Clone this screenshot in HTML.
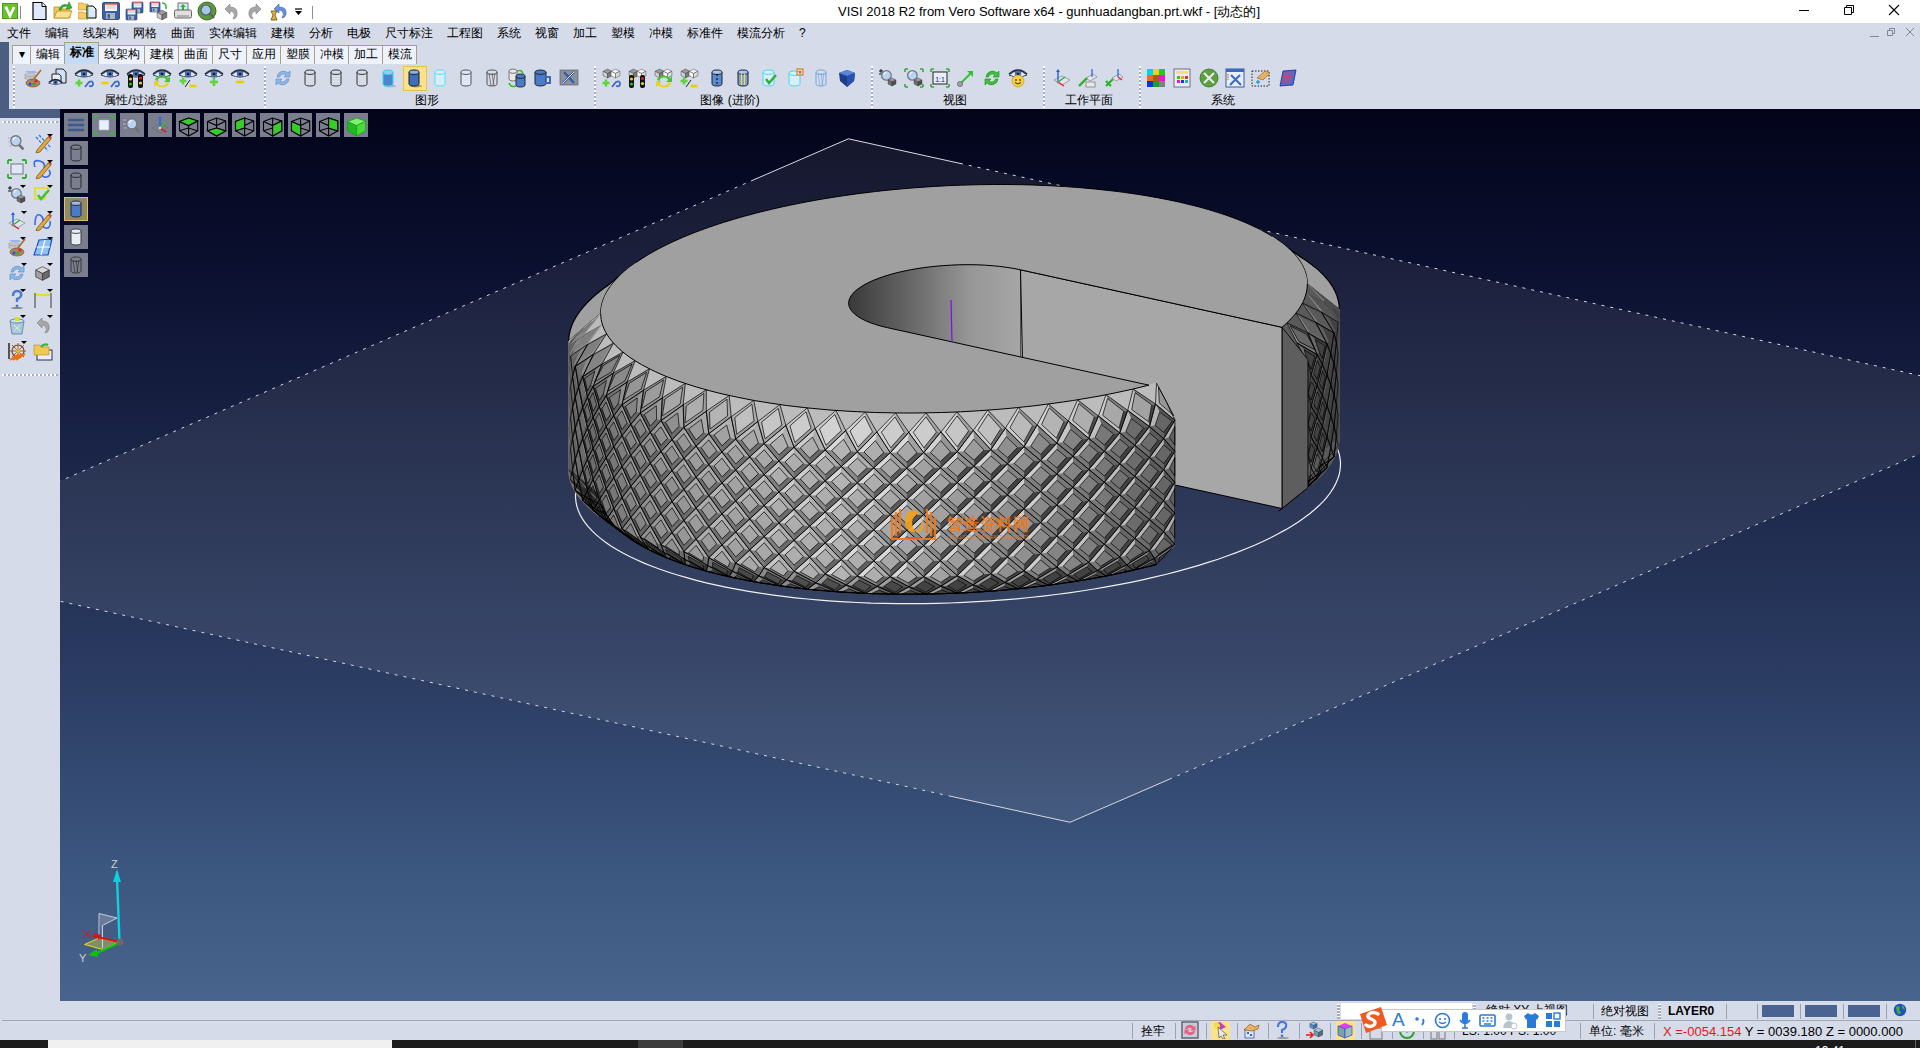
<!DOCTYPE html>
<html><head><meta charset="utf-8">
<style>
*{margin:0;padding:0;box-sizing:border-box}
html,body{width:1920px;height:1048px;overflow:hidden;background:#d6dbe9;font-family:"Liberation Sans",sans-serif;font-size:12px;color:#000}
.a{position:absolute}
#title{left:0;top:0;width:1920px;height:23px;background:#fff}
#menu{left:0;top:23px;width:1920px;height:19px;background:#d6dbe9}
#menu span{position:absolute;top:3px;font-size:12px;line-height:14px;white-space:nowrap}
#lstrip{left:0;top:42px;width:9px;height:76px;background:#4b5e81}
#lstrip2{left:0;top:109px;width:60px;height:9px;background:#4b5e81}
#tb{left:9px;top:42px;width:1911px;height:67px;background:#d6dbe9}
.tab{position:absolute;top:45px;height:19px;background:#eef3fb;border:1px solid #a89f86;border-bottom:none;font-size:12px;line-height:17px;text-align:center;white-space:nowrap}
.tab.act{top:42px;height:22px;background:#c3dbf4;font-weight:bold;line-height:19px}
.grip{position:absolute;width:2px;background-image:linear-gradient(#fff 50%,#a7adbd 50%);background-size:2px 4px}
.gl{position:absolute;top:93px;font-size:12px;line-height:14px;white-space:nowrap}
#left{left:0;top:118px;width:60px;height:883px;background:#d6dbe9}
#vp{left:60px;top:109px;width:1860px;height:892px;background:linear-gradient(#03041a 0%,#0b1030 18%,#1a2446 38%,#2a3a60 62%,#3b567f 85%,#48648d 100%);overflow:hidden}
#status{left:0;top:1001px;width:1920px;height:39px;background:#d6dbe9}
#taskbar{left:0;top:1040px;width:1920px;height:8px;background:#1c1c1c}
.vb{position:absolute;width:24px;height:24px;background:#7b7e8f}
.ic{position:absolute}
</style></head><body>
<div id="title" class="a"></div>
<svg class="ic" style="left:2px;top:3px" width="16" height="16" viewBox="0 0 16 16"><rect width="16" height="16" fill="#6cc030"/><rect x="0.5" y="0.5" width="15" height="15" fill="none" stroke="#4a9a20"/><path d="M4 4 L8 13 L12 4" fill="none" stroke="#fff" stroke-width="2.6"/><circle cx="4" cy="5" r="1.4" fill="#fff"/></svg>
<div class="a" style="left:20px;top:6px;width:1px;height:13px;background:#909090"></div>
<svg class="ic" style="left:30.0px;top:1.0px" width="20" height="20" viewBox="0 0 20 20"><path d="M3 1.5 h9 l4 4 v13 h-13z" fill="#dfe8fa" stroke="#000" stroke-width="1.2"/><path d="M12 1.5 v4 h4" fill="#fff" stroke="#000" stroke-width="1"/></svg>
<svg class="ic" style="left:53.0px;top:1.0px" width="20" height="20" viewBox="0 0 20 20"><path d="M1 6 h6 l2 2 h8 v9 h-16z" fill="#f2c75a" stroke="#b88a20" stroke-width="0.8"/><path d="M1 17 l3 -7 h15 l-3 7z" fill="#fbe08e" stroke="#b88a20" stroke-width="0.8"/><path d="M6 9 Q8 2 15 4 L16 1 L19 7 L13 8 L14.5 5.5 Q10 4 8 9z" fill="#36b836" stroke="#1a7a1a" stroke-width="0.6"/></svg>
<svg class="ic" style="left:78.0px;top:1.0px" width="20" height="20" viewBox="0 0 20 20"><path d="M0 2 h5 l1 1 h4 v6 h-10z" fill="#f4cd66" stroke="#b88a20" stroke-width="0.6"/><path d="M0 11 h5 l1 1 h4 v6 h-10z" fill="#f4cd66" stroke="#b88a20" stroke-width="0.6"/><path d="M9 5 h6 l3 3 v9 h-9z" fill="#dfe8fa" stroke="#000" stroke-width="1"/><path d="M8 4 h2 v14 h-2" fill="none" stroke="#40c040" stroke-width="0.8"/></svg>
<svg class="ic" style="left:101.0px;top:1.0px" width="20" height="20" viewBox="0 0 20 20"><g transform="translate(0 0) scale(1.0)"><rect x="1.5" y="1.5" width="17" height="17" rx="1.5" fill="#3b5ea8" stroke="#23386a" stroke-width="0.8"/><rect x="4" y="2" width="12" height="8" fill="#f4f4f4"/><rect x="4" y="2" width="12" height="1.6" fill="#e04040"/><path d="M5 5h10M5 7h10" stroke="#c0c0c0" stroke-width="0.8"/><rect x="5" y="12" width="9" height="6" fill="#aeb4c0"/><rect x="6.5" y="13" width="2.5" height="4.5" fill="#3b5ea8"/></g></svg>
<svg class="ic" style="left:125.0px;top:1.0px" width="20" height="20" viewBox="0 0 20 20"><g transform="translate(6 0) scale(0.65)"><rect x="1.5" y="1.5" width="17" height="17" rx="1.5" fill="#3b5ea8" stroke="#23386a" stroke-width="0.8"/><rect x="4" y="2" width="12" height="8" fill="#f4f4f4"/><rect x="4" y="2" width="12" height="1.6" fill="#e04040"/><path d="M5 5h10M5 7h10" stroke="#c0c0c0" stroke-width="0.8"/><rect x="5" y="12" width="9" height="6" fill="#aeb4c0"/><rect x="6.5" y="13" width="2.5" height="4.5" fill="#3b5ea8"/></g><g transform="translate(0 7) scale(0.65)"><rect x="1.5" y="1.5" width="17" height="17" rx="1.5" fill="#3b5ea8" stroke="#23386a" stroke-width="0.8"/><rect x="4" y="2" width="12" height="8" fill="#f4f4f4"/><rect x="4" y="2" width="12" height="1.6" fill="#e04040"/><path d="M5 5h10M5 7h10" stroke="#c0c0c0" stroke-width="0.8"/><rect x="5" y="12" width="9" height="6" fill="#aeb4c0"/><rect x="6.5" y="13" width="2.5" height="4.5" fill="#3b5ea8"/></g></svg>
<svg class="ic" style="left:149.0px;top:1.0px" width="20" height="20" viewBox="0 0 20 20"><g transform="translate(0 0) scale(0.6)"><rect x="1.5" y="1.5" width="17" height="17" rx="1.5" fill="#3b5ea8" stroke="#23386a" stroke-width="0.8"/><rect x="4" y="2" width="12" height="8" fill="#f4f4f4"/><rect x="4" y="2" width="12" height="1.6" fill="#e04040"/><path d="M5 5h10M5 7h10" stroke="#c0c0c0" stroke-width="0.8"/><rect x="5" y="12" width="9" height="6" fill="#aeb4c0"/><rect x="6.5" y="13" width="2.5" height="4.5" fill="#3b5ea8"/></g><g transform="translate(7 8) scale(0.6)"><path d="M10 2 L18 6 L10 10 L2 6Z" fill="#9c9c9c" stroke="#333" stroke-width="0.8"/><path d="M2 6 L10 10 V18 L2 14Z" fill="#cfcfcf" stroke="#333" stroke-width="0.8"/><path d="M18 6 L10 10 V18 L18 14Z" fill="#7c7c7c" stroke="#333" stroke-width="0.8"/></g><path d="M13 2 q5 0 4 6" fill="none" stroke="#36b836" stroke-width="1.6"/></svg>
<svg class="ic" style="left:173.0px;top:1.0px" width="20" height="20" viewBox="0 0 20 20"><rect x="5" y="2" width="10" height="8" fill="#dce8f8" stroke="#555" stroke-width="0.8"/><path d="M10 3 l3 3 h-2 v3 h-2 v-3 h-2z" fill="#22c022"/><rect x="1.5" y="9" width="17" height="8" rx="1.5" fill="#e0e0e0" stroke="#555" stroke-width="0.9"/><rect x="4" y="14" width="12" height="2" fill="#b0b0b0"/></svg>
<svg class="ic" style="left:196.5px;top:0.5px" width="21" height="21" viewBox="0 0 21 21"><circle cx="10" cy="10" r="9" fill="#5a9a3a" stroke="#3a6a20" stroke-width="1"/><circle cx="9" cy="9" r="5" fill="#a9c8e8" stroke="#506070" stroke-width="1.2"/><path d="M12.5 12.5 L17 17" stroke="#606060" stroke-width="2.4"/></svg>
<svg class="ic" style="left:221.0px;top:1.0px" width="20" height="20" viewBox="0 0 20 20"><path d="M4 8 L9 3 V6 Q17 6 16 14 Q15 18 12 18 Q15 14 12 11 Q10 10 9 10 V13Z" fill="#a8a8a8" stroke="#7a7a7a" stroke-width="0.6"/></svg>
<svg class="ic" style="left:245.0px;top:1.0px" width="20" height="20" viewBox="0 0 20 20"><path d="M16 8 L11 3 V6 Q3 6 4 14 Q5 18 8 18 Q5 14 8 11 Q10 10 11 10 V13Z" fill="#a8a8a8" stroke="#7a7a7a" stroke-width="0.6"/></svg>
<svg class="ic" style="left:268.0px;top:1.0px" width="20" height="20" viewBox="0 0 20 20"><path d="M6 8 L11 3 V6 Q19 6 18 13 Q17 17 14 17 Q17 13 14 10 Q12 9 11 9 V12Z" fill="#6a90d8" stroke="#3a5aa0" stroke-width="0.6"/><path d="M3 10 h6 l-2 4 l2 5 h-6 l2 -5z" fill="#e0b040" stroke="#6a4a10" stroke-width="0.8"/></svg>
<svg class="ic" style="left:294px;top:8px" width="9" height="8" viewBox="0 0 9 8"><path d="M1 1h7" stroke="#000" stroke-width="1.2"/><path d="M1 3h7l-3.5 4z" fill="#000"/></svg>
<div class="a" style="left:312px;top:6px;width:1px;height:13px;background:#909090"></div>
<div class="a" style="left:1799px;top:10px;width:10px;height:1px;background:#000"></div>
<svg class="ic" style="left:1843px;top:4px" width="12" height="12" viewBox="0 0 12 12"><path d="M1.5 3.5h7v7h-7z M3.5 3.5v-2h7v7h-2" fill="none" stroke="#000" stroke-width="1"/></svg>
<svg class="ic" style="left:1888px;top:4px" width="12" height="12" viewBox="0 0 12 12"><path d="M1 1L11 11M11 1L1 11" stroke="#000" stroke-width="1.1"/></svg>
<div class="a" style="left:838px;top:4px;font-size:13px;line-height:16px;white-space:nowrap;color:#000">VISI 2018 R2 from Vero Software x64 - gunhuadangban.prt.wkf - [动态的]</div>
<div id="menu" class="a"><span style="left:7px">文件</span><span style="left:45px">编辑</span><span style="left:83px">线架构</span><span style="left:133px">网格</span><span style="left:171px">曲面</span><span style="left:209px">实体编辑</span><span style="left:271px">建模</span><span style="left:309px">分析</span><span style="left:347px">电极</span><span style="left:385px">尺寸标注</span><span style="left:447px">工程图</span><span style="left:497px">系统</span><span style="left:535px">视窗</span><span style="left:573px">加工</span><span style="left:611px">塑模</span><span style="left:649px">冲模</span><span style="left:687px">标准件</span><span style="left:737px">模流分析</span><span style="left:799px">?</span></div>
<div class="a" style="left:1870px;top:36px;width:9px;height:1px;background:#8088a0"></div>
<svg class="ic" style="left:1886px;top:27px" width="10" height="10" viewBox="0 0 10 10"><path d="M1.5 3.5h5v5h-5z M3.5 3.5v-2h5v5h-2" fill="none" stroke="#8088a0" stroke-width="1"/></svg>
<svg class="ic" style="left:1905px;top:27px" width="10" height="10" viewBox="0 0 10 10"><path d="M1 1L9 9M9 1L1 9" stroke="#8088a0" stroke-width="1"/></svg>
<div id="lstrip" class="a"></div>
<div id="tb" class="a"></div>
<div class="tab" style="left:12px;width:19px">▾</div>
<div class="tab" style="left:30px;width:35px">编辑</div>
<div class="tab act" style="left:64px;width:35px">标准</div>
<div class="tab" style="left:98px;width:47px">线架构</div>
<div class="tab" style="left:144px;width:35px">建模</div>
<div class="tab" style="left:178px;width:35px">曲面</div>
<div class="tab" style="left:212px;width:35px">尺寸</div>
<div class="tab" style="left:246px;width:35px">应用</div>
<div class="tab" style="left:280px;width:35px">塑膜</div>
<div class="tab" style="left:314px;width:35px">冲模</div>
<div class="tab" style="left:348px;width:35px">加工</div>
<div class="tab" style="left:382px;width:35px">模流</div>
<div class="grip" style="left:13px;top:66px;height:42px"></div>
<div class="grip" style="left:264px;top:66px;height:42px"></div>
<div class="grip" style="left:594px;top:66px;height:42px"></div>
<div class="grip" style="left:871px;top:66px;height:42px"></div>
<div class="grip" style="left:1043px;top:66px;height:42px"></div>
<div class="grip" style="left:1139px;top:66px;height:42px"></div>
<svg class="ic" style="left:23.0px;top:68.0px" width="20" height="20" viewBox="0 0 20 20"><path d="M2 3h10l3 2h-10z" fill="#9fb2f0"/><path d="M2 6h10v2h-10z M2 9h10v2h-10z" fill="#e0e0e0" stroke="#777" stroke-width="0.5"/><ellipse cx="10" cy="15" rx="7" ry="4" fill="#b08060" stroke="#6a4a30" stroke-width="0.6"/><circle cx="7" cy="16" r="1.5" fill="#2050e0"/><circle cx="11" cy="16" r="1.5" fill="#20b020"/><circle cx="13" cy="13" r="1.5" fill="#e02020"/><path d="M18 2 L11 11" stroke="#b06a20" stroke-width="1.6"/></svg>
<svg class="ic" style="left:48.0px;top:68.0px" width="20" height="20" viewBox="0 0 20 20"><path d="M8 1h7l3 3v11h-10z" fill="#cfe0f8" stroke="#222" stroke-width="1"/><path d="M4 6h7l2 2v7h-9z" fill="#e8eefa" stroke="#222" stroke-width="1"/><g transform="translate(0 10) scale(0.75)"><path d="M1 7 Q10 -1 19 7 Q10 11 1 7Z" fill="#e6e9f5" stroke="#3a4a70" stroke-width="1"/><circle cx="10" cy="6" r="3.2" fill="#4d6fa8"/><circle cx="10" cy="6" r="1.3" fill="#10203a"/><path d="M1 6 Q10 -2 19 6" fill="none" stroke="#202838" stroke-width="1.6"/></g></svg>
<svg class="ic" style="left:74.0px;top:68.0px" width="20" height="20" viewBox="0 0 20 20"><g transform="translate(0 0) scale(1.0)"><path d="M1 7 Q10 -1 19 7 Q10 11 1 7Z" fill="#e6e9f5" stroke="#3a4a70" stroke-width="1"/><circle cx="10" cy="6" r="3.2" fill="#4d6fa8"/><circle cx="10" cy="6" r="1.3" fill="#10203a"/><path d="M1 6 Q10 -2 19 6" fill="none" stroke="#202838" stroke-width="1.6"/></g><path d="M1.5 15h7M5 11.5v7" stroke="#5ed63a" stroke-width="2.6"/><path d="M11 19 l4 -5 q4 -2 4 2 q0 3 -4 2" fill="none" stroke="#3a6ad0" stroke-width="1.8"/></svg>
<svg class="ic" style="left:100.0px;top:68.0px" width="20" height="20" viewBox="0 0 20 20"><g transform="translate(0 0) scale(1.0)"><path d="M1 7 Q10 -1 19 7 Q10 11 1 7Z" fill="#e6e9f5" stroke="#3a4a70" stroke-width="1"/><circle cx="10" cy="6" r="3.2" fill="#4d6fa8"/><circle cx="10" cy="6" r="1.3" fill="#10203a"/><path d="M1 6 Q10 -2 19 6" fill="none" stroke="#202838" stroke-width="1.6"/></g><path d="M1.5 15h7" stroke="#e8d000" stroke-width="2.6"/><path d="M11 19 l4 -5 q4 -2 4 2 q0 3 -4 2" fill="none" stroke="#3a6ad0" stroke-width="1.8"/></svg>
<svg class="ic" style="left:126.0px;top:68.0px" width="20" height="20" viewBox="0 0 20 20"><g transform="translate(0 0) scale(1.0)"><path d="M1 7 Q10 -1 19 7 Q10 11 1 7Z" fill="#e6e9f5" stroke="#3a4a70" stroke-width="1"/><circle cx="10" cy="6" r="3.2" fill="#4d6fa8"/><circle cx="10" cy="6" r="1.3" fill="#10203a"/><path d="M1 6 Q10 -2 19 6" fill="none" stroke="#202838" stroke-width="1.6"/></g><rect x="2" y="6" width="5" height="14" rx="2" fill="#101010"/><rect x="12" y="6" width="5" height="14" rx="2" fill="#101010"/><circle cx="4.5" cy="11" r="1.6" fill="#e8d020"/><circle cx="4.5" cy="16" r="1.6" fill="#20c020"/><circle cx="14.5" cy="10" r="1.6" fill="#e02020"/><circle cx="14.5" cy="15" r="1.6" fill="#e8d020"/></svg>
<svg class="ic" style="left:152.0px;top:68.0px" width="20" height="20" viewBox="0 0 20 20"><g transform="translate(0 0) scale(1.0)"><path d="M1 7 Q10 -1 19 7 Q10 11 1 7Z" fill="#e6e9f5" stroke="#3a4a70" stroke-width="1"/><circle cx="10" cy="6" r="3.2" fill="#4d6fa8"/><circle cx="10" cy="6" r="1.3" fill="#10203a"/><path d="M1 6 Q10 -2 19 6" fill="none" stroke="#202838" stroke-width="1.6"/></g><path d="M3 12 A7 5 0 0 1 16 10 l2 -2 v6 h-6 l2 -2 A4 3 0 0 0 6 13z" fill="#4cc23a"/><path d="M17 15 A7 5 0 0 1 4 17 l-2 2 v-6 h6 l-2 2 A4 3 0 0 0 14 14z" fill="#e8d22a"/></svg>
<svg class="ic" style="left:178.0px;top:68.0px" width="20" height="20" viewBox="0 0 20 20"><g transform="translate(0 0) scale(1.0)"><path d="M1 7 Q10 -1 19 7 Q10 11 1 7Z" fill="#e6e9f5" stroke="#3a4a70" stroke-width="1"/><circle cx="10" cy="6" r="3.2" fill="#4d6fa8"/><circle cx="10" cy="6" r="1.3" fill="#10203a"/><path d="M1 6 Q10 -2 19 6" fill="none" stroke="#202838" stroke-width="1.6"/></g><path d="M1.5 13h7M5 9.5v7" stroke="#5ed63a" stroke-width="2.6"/><path d="M7 19 L12 12" stroke="#222" stroke-width="1"/><path d="M11.5 18h7" stroke="#e8d000" stroke-width="2.6"/></svg>
<svg class="ic" style="left:204.0px;top:68.0px" width="20" height="20" viewBox="0 0 20 20"><g transform="translate(0 0) scale(1.0)"><path d="M1 7 Q10 -1 19 7 Q10 11 1 7Z" fill="#e6e9f5" stroke="#3a4a70" stroke-width="1"/><circle cx="10" cy="6" r="3.2" fill="#4d6fa8"/><circle cx="10" cy="6" r="1.3" fill="#10203a"/><path d="M1 6 Q10 -2 19 6" fill="none" stroke="#202838" stroke-width="1.6"/></g><path d="M6.0 14h8M10 10.0v8" stroke="#5ed63a" stroke-width="2.6"/></svg>
<svg class="ic" style="left:230.0px;top:68.0px" width="20" height="20" viewBox="0 0 20 20"><g transform="translate(0 0) scale(1.0)"><path d="M1 7 Q10 -1 19 7 Q10 11 1 7Z" fill="#e6e9f5" stroke="#3a4a70" stroke-width="1"/><circle cx="10" cy="6" r="3.2" fill="#4d6fa8"/><circle cx="10" cy="6" r="1.3" fill="#10203a"/><path d="M1 6 Q10 -2 19 6" fill="none" stroke="#202838" stroke-width="1.6"/></g><path d="M6.0 14h8" stroke="#e8d000" stroke-width="2.6"/></svg>
<svg class="ic" style="left:273.0px;top:68.0px" width="20" height="20" viewBox="0 0 20 20"><path d="M4 9 A6.5 6.5 0 0 1 15 5 L17 3 V9 H11 L13 7 A4 4 0 0 0 6.5 9Z" fill="#8ab8e8" stroke="#5a88c8" stroke-width="0.6"/><path d="M16 11 A6.5 6.5 0 0 1 5 15 L3 17 V11 H9 L7 13 A4 4 0 0 0 13.5 11Z" fill="#8ab8e8" stroke="#5a88c8" stroke-width="0.6"/></svg>
<svg class="ic" style="left:300.0px;top:68.0px" width="20" height="20" viewBox="0 0 20 20"><path d="M5 4.2 v11.6 a5.0 2.2 0 0 0 10 0 v-11.6" fill="none" stroke="#333" stroke-width="1"/><ellipse cx="10.0" cy="4.2" rx="5.0" ry="2.2" fill="none" stroke="#333" stroke-width="1"/></svg>
<svg class="ic" style="left:326.0px;top:68.0px" width="20" height="20" viewBox="0 0 20 20"><path d="M5 4.2 v11.6 a5.0 2.2 0 0 0 10 0 v-11.6" fill="none" stroke="#333" stroke-width="1"/><ellipse cx="10.0" cy="4.2" rx="5.0" ry="2.2" fill="none" stroke="#333" stroke-width="1"/></svg>
<svg class="ic" style="left:352.0px;top:68.0px" width="20" height="20" viewBox="0 0 20 20"><path d="M5 4.2 v11.6 a5.0 2.2 0 0 0 10 0 v-11.6" fill="none" stroke="#333" stroke-width="1"/><ellipse cx="10.0" cy="4.2" rx="5.0" ry="2.2" fill="none" stroke="#333" stroke-width="1"/></svg>
<svg class="ic" style="left:378.0px;top:68.0px" width="20" height="20" viewBox="0 0 20 20"><ellipse cx="12" cy="18" rx="6" ry="1.5" fill="#b0b4c0"/><path d="M5 4.2 v11.6 a5.0 2.2 0 0 0 10 0 v-11.6" fill="#4a86d0" stroke="#30d8f0" stroke-width="1"/><ellipse cx="10.0" cy="4.2" rx="5.0" ry="2.2" fill="#9cc8f0" stroke="#30d8f0" stroke-width="1"/></svg>
<div class="a" style="left:403px;top:66px;width:24px;height:25px;background:#fbe28a;border:1px solid #e8c050"></div>
<svg class="ic" style="left:404.0px;top:68.0px" width="20" height="20" viewBox="0 0 20 20"><ellipse cx="12" cy="18" rx="6" ry="1.5" fill="#b0a060"/><path d="M5 4.2 v11.6 a5.0 2.2 0 0 0 10 0 v-11.6" fill="#3e6fb8" stroke="#10203a" stroke-width="1"/><ellipse cx="10.0" cy="4.2" rx="5.0" ry="2.2" fill="#8fb0e0" stroke="#10203a" stroke-width="1"/></svg>
<svg class="ic" style="left:430.0px;top:68.0px" width="20" height="20" viewBox="0 0 20 20"><path d="M5 4.2 v11.6 a5.0 2.2 0 0 0 10 0 v-11.6" fill="#d8eefa" stroke="#50e0f0" stroke-width="1"/><ellipse cx="10.0" cy="4.2" rx="5.0" ry="2.2" fill="#d8eefa" stroke="#50e0f0" stroke-width="1"/></svg>
<svg class="ic" style="left:456.0px;top:68.0px" width="20" height="20" viewBox="0 0 20 20"><path d="M5 4.2 v11.6 a5.0 2.2 0 0 0 10 0 v-11.6" fill="#dfe6f5" stroke="#555" stroke-width="1"/><ellipse cx="10.0" cy="4.2" rx="5.0" ry="2.2" fill="#dfe6f5" stroke="#555" stroke-width="1"/></svg>
<svg class="ic" style="left:482.0px;top:68.0px" width="20" height="20" viewBox="0 0 20 20"><path d="M5 4.2 v11.6 a5.0 2.2 0 0 0 10 0 v-11.6" fill="none" stroke="#555" stroke-width="1"/><ellipse cx="10.0" cy="4.2" rx="5.0" ry="2.2" fill="none" stroke="#555" stroke-width="1"/><path d="M7 5 L9 18 M10 5 L12 18 M13 5 L11 17" stroke="#555" stroke-width="0.7"/></svg>
<svg class="ic" style="left:507.0px;top:68.0px" width="20" height="20" viewBox="0 0 20 20"><path d="M2 3.2 v7.6 a4.0 2.2 0 0 0 8 0 v-7.6" fill="#e8e8e8" stroke="#777" stroke-width="1"/><ellipse cx="6.0" cy="3.2" rx="4.0" ry="2.2" fill="#e8e8e8" stroke="#777" stroke-width="1"/><path d="M9 8.2 v8.6 a4.5 2.2 0 0 0 9 0 v-8.6" fill="#4a7ac8" stroke="#223" stroke-width="1"/><ellipse cx="13.5" cy="8.2" rx="4.5" ry="2.2" fill="#4a7ac8" stroke="#223" stroke-width="1"/><path d="M10 3 q5 -2 6 3" fill="none" stroke="#30c030" stroke-width="1.6"/><path d="M2 15 q2 5 7 3" fill="none" stroke="#30c030" stroke-width="1.6"/></svg>
<svg class="ic" style="left:533.0px;top:68.0px" width="20" height="20" viewBox="0 0 20 20"><path d="M2 4.2 v11.6 a5.5 2.2 0 0 0 11 0 v-11.6" fill="#4a7ac8" stroke="#223" stroke-width="1"/><ellipse cx="7.5" cy="4.2" rx="5.5" ry="2.2" fill="#4a7ac8" stroke="#223" stroke-width="1"/><path d="M12 9 h5 v6 h-5" fill="none" stroke="#3a6ac0" stroke-width="2"/></svg>
<svg class="ic" style="left:559.0px;top:68.0px" width="20" height="20" viewBox="0 0 20 20"><rect x="1" y="2" width="18" height="15" fill="#8a92a0" stroke="#555" stroke-width="0.6"/><path d="M4 15 L15 4 M5 4 L15 15" stroke="#3a5aa0" stroke-width="2.4"/><path d="M4 15 L15 4" stroke="#e0e6f0" stroke-width="1"/></svg>
<svg class="ic" style="left:602.0px;top:68.0px" width="20" height="20" viewBox="0 0 20 20"><g transform="translate(0 0) scale(0.55)"><path d="M10 2 L18 6 L10 10 L2 6Z" fill="#9c9c9c" stroke="#333" stroke-width="0.8"/><path d="M2 6 L10 10 V18 L2 14Z" fill="#cfcfcf" stroke="#333" stroke-width="0.8"/><path d="M18 6 L10 10 V18 L18 14Z" fill="#7c7c7c" stroke="#333" stroke-width="0.8"/></g><g transform="translate(8 0) scale(0.55)"><path d="M10 2 L18 6 L10 10 L2 6Z" fill="#f4f4f4" stroke="#333" stroke-width="0.8"/><path d="M2 6 L10 10 V18 L2 14Z" fill="#fff" stroke="#333" stroke-width="0.8"/><path d="M18 6 L10 10 V18 L18 14Z" fill="#dcdcdc" stroke="#333" stroke-width="0.8"/></g><path d="M0.5 15h7M4 11.5v7" stroke="#5ed63a" stroke-width="2.6"/><path d="M10 19 l4 -5 q4 -2 4 2 q0 3 -4 2" fill="none" stroke="#3a6ad0" stroke-width="1.8"/></svg>
<svg class="ic" style="left:628.0px;top:68.0px" width="20" height="20" viewBox="0 0 20 20"><g transform="translate(0 0) scale(0.55)"><path d="M10 2 L18 6 L10 10 L2 6Z" fill="#9c9c9c" stroke="#333" stroke-width="0.8"/><path d="M2 6 L10 10 V18 L2 14Z" fill="#cfcfcf" stroke="#333" stroke-width="0.8"/><path d="M18 6 L10 10 V18 L18 14Z" fill="#7c7c7c" stroke="#333" stroke-width="0.8"/></g><g transform="translate(8 0) scale(0.55)"><path d="M10 2 L18 6 L10 10 L2 6Z" fill="#f4f4f4" stroke="#333" stroke-width="0.8"/><path d="M2 6 L10 10 V18 L2 14Z" fill="#fff" stroke="#333" stroke-width="0.8"/><path d="M18 6 L10 10 V18 L18 14Z" fill="#dcdcdc" stroke="#333" stroke-width="0.8"/></g><rect x="1" y="7" width="5" height="13" rx="2" fill="#101010"/><rect x="12" y="7" width="5" height="13" rx="2" fill="#101010"/><circle cx="3.5" cy="11" r="1.6" fill="#e8d020"/><circle cx="3.5" cy="16" r="1.6" fill="#20c020"/><circle cx="14.5" cy="10.5" r="1.6" fill="#e02020"/><circle cx="14.5" cy="15.5" r="1.6" fill="#e8d020"/></svg>
<svg class="ic" style="left:654.0px;top:68.0px" width="20" height="20" viewBox="0 0 20 20"><g transform="translate(0 0) scale(0.55)"><path d="M10 2 L18 6 L10 10 L2 6Z" fill="#9c9c9c" stroke="#333" stroke-width="0.8"/><path d="M2 6 L10 10 V18 L2 14Z" fill="#cfcfcf" stroke="#333" stroke-width="0.8"/><path d="M18 6 L10 10 V18 L18 14Z" fill="#7c7c7c" stroke="#333" stroke-width="0.8"/></g><g transform="translate(8 0) scale(0.55)"><path d="M10 2 L18 6 L10 10 L2 6Z" fill="#f4f4f4" stroke="#333" stroke-width="0.8"/><path d="M2 6 L10 10 V18 L2 14Z" fill="#fff" stroke="#333" stroke-width="0.8"/><path d="M18 6 L10 10 V18 L18 14Z" fill="#dcdcdc" stroke="#333" stroke-width="0.8"/></g><path d="M3 12 A7 5 0 0 1 16 10 l2 -2 v6 h-6 l2 -2 A4 3 0 0 0 6 13z" fill="#4cc23a"/><path d="M17 15 A7 5 0 0 1 4 17 l-2 2 v-6 h6 l-2 2 A4 3 0 0 0 14 14z" fill="#e8d22a"/></svg>
<svg class="ic" style="left:680.0px;top:68.0px" width="20" height="20" viewBox="0 0 20 20"><g transform="translate(0 0) scale(0.55)"><path d="M10 2 L18 6 L10 10 L2 6Z" fill="#9c9c9c" stroke="#333" stroke-width="0.8"/><path d="M2 6 L10 10 V18 L2 14Z" fill="#cfcfcf" stroke="#333" stroke-width="0.8"/><path d="M18 6 L10 10 V18 L18 14Z" fill="#7c7c7c" stroke="#333" stroke-width="0.8"/></g><g transform="translate(8 0) scale(0.55)"><path d="M10 2 L18 6 L10 10 L2 6Z" fill="#f4f4f4" stroke="#333" stroke-width="0.8"/><path d="M2 6 L10 10 V18 L2 14Z" fill="#fff" stroke="#333" stroke-width="0.8"/><path d="M18 6 L10 10 V18 L18 14Z" fill="#dcdcdc" stroke="#333" stroke-width="0.8"/></g><path d="M0.5 13h7M4 9.5v7" stroke="#5ed63a" stroke-width="2.6"/><path d="M6 19 L11 12" stroke="#222" stroke-width="1"/><path d="M10.5 18h7" stroke="#e8d000" stroke-width="2.6"/></svg>
<svg class="ic" style="left:707.0px;top:68.0px" width="20" height="20" viewBox="0 0 20 20"><path d="M5 4.2 v11.6 a5.0 2.2 0 0 0 10 0 v-11.6" fill="#5a8ad0" stroke="#223" stroke-width="1"/><ellipse cx="10.0" cy="4.2" rx="5.0" ry="2.2" fill="#a9c8f0" stroke="#223" stroke-width="1"/><path d="M10 6 v11" stroke="#111" stroke-width="1.2" stroke-dasharray="2 2"/></svg>
<svg class="ic" style="left:733.0px;top:68.0px" width="20" height="20" viewBox="0 0 20 20"><path d="M5 4.2 v11.6 a5.0 2.2 0 0 0 10 0 v-11.6" fill="#7a9ad8" stroke="#223" stroke-width="1"/><ellipse cx="10.0" cy="4.2" rx="5.0" ry="2.2" fill="#a9c8f0" stroke="#223" stroke-width="1"/><path d="M8.5 6 v11 M11.5 6 v11" stroke="#f0e040" stroke-width="1.3"/></svg>
<svg class="ic" style="left:759.0px;top:68.0px" width="20" height="20" viewBox="0 0 20 20"><path d="M4 4.2 v11.6 a5.5 2.2 0 0 0 11 0 v-11.6" fill="#d8eefa" stroke="#40d8f0" stroke-width="1"/><ellipse cx="9.5" cy="4.2" rx="5.5" ry="2.2" fill="#d8eefa" stroke="#40d8f0" stroke-width="1"/><path d="M7 11 l3 4 l7 -8" fill="none" stroke="#30b030" stroke-width="2.4"/></svg>
<svg class="ic" style="left:785.0px;top:68.0px" width="20" height="20" viewBox="0 0 20 20"><path d="M4 5.2 v10.6 a5.5 2.2 0 0 0 11 0 v-10.6" fill="#d8eefa" stroke="#40d8f0" stroke-width="1"/><ellipse cx="9.5" cy="5.2" rx="5.5" ry="2.2" fill="#d8eefa" stroke="#40d8f0" stroke-width="1"/><rect x="12" y="1" width="6" height="6" fill="none" stroke="#e09030" stroke-width="1.4"/><circle cx="15" cy="4" r="1.2" fill="#e05030"/></svg>
<svg class="ic" style="left:811.0px;top:68.0px" width="20" height="20" viewBox="0 0 20 20"><path d="M5 4.2 v11.6 a5.0 2.2 0 0 0 10 0 v-11.6" fill="none" stroke="#70a8e0" stroke-width="1"/><ellipse cx="10.0" cy="4.2" rx="5.0" ry="2.2" fill="none" stroke="#70a8e0" stroke-width="1"/><path d="M7 5 L9 18 M10 5 L12 18 M13 5 L11 17" stroke="#70a8e0" stroke-width="0.7"/></svg>
<svg class="ic" style="left:837.0px;top:68.0px" width="20" height="20" viewBox="0 0 20 20"><path d="M10 2 L18 5 L17 13 L10 19 L3 13 L2 5Z" fill="#1e3c8a"/><path d="M2 5 L10 8 L18 5 L10 2Z" fill="#5a86d8"/><path d="M10 8 V19 L17 13 L18 5Z" fill="#2a50b0"/></svg>
<svg class="ic" style="left:878.0px;top:68.0px" width="20" height="20" viewBox="0 0 20 20"><path d="M1 3h4M3 1v4M1 6h4" stroke="#000" stroke-width="0.9"/><g transform="translate(2 1) scale(0.8)"><path d="M11 12 L17 18" stroke="#707070" stroke-width="3"/><circle cx="8" cy="8" r="6" fill="#b9d3f0" stroke="#707880" stroke-width="1.6"/><path d="M5 7 a3 3 0 0 1 3 -3" stroke="#fff" stroke-width="1.2" fill="none"/></g><g transform="translate(9 9) scale(0.5)"><path d="M10 2 L18 6 L10 10 L2 6Z" fill="#9a9a9a" stroke="#333" stroke-width="0.8"/><path d="M2 6 L10 10 V18 L2 14Z" fill="#707070" stroke="#333" stroke-width="0.8"/><path d="M18 6 L10 10 V18 L18 14Z" fill="#505050" stroke="#333" stroke-width="0.8"/></g></svg>
<svg class="ic" style="left:904.0px;top:68.0px" width="20" height="20" viewBox="0 0 20 20"><g transform="translate(2 1) scale(0.8)"><path d="M11 12 L17 18" stroke="#707070" stroke-width="3"/><circle cx="8" cy="8" r="6" fill="#b9d3f0" stroke="#707880" stroke-width="1.6"/><path d="M5 7 a3 3 0 0 1 3 -3" stroke="#fff" stroke-width="1.2" fill="none"/></g><g transform="translate(9 9) scale(0.5)"><path d="M10 2 L18 6 L10 10 L2 6Z" fill="#9a9a9a" stroke="#333" stroke-width="0.8"/><path d="M2 6 L10 10 V18 L2 14Z" fill="#707070" stroke="#333" stroke-width="0.8"/><path d="M18 6 L10 10 V18 L18 14Z" fill="#505050" stroke="#333" stroke-width="0.8"/></g><path d="M1 1h3M1 1v3M19 1h-3M19 1v3M1 19h3M1 19v-3M19 19h-3M19 19v-3" stroke="#30b030" stroke-width="1.6"/></svg>
<svg class="ic" style="left:930.0px;top:68.0px" width="20" height="20" viewBox="0 0 20 20"><rect x="3" y="4" width="14" height="12" fill="#e8eefa" stroke="#222" stroke-width="1"/><text x="10" y="13.5" font-size="7" text-anchor="middle" font-family="Liberation Sans" fill="#102080">1:1</text><path d="M1 1h3M1 1v3M19 1h-3M19 1v3M1 19h3M1 19v-3M19 19h-3M19 19v-3" stroke="#30b030" stroke-width="1.6"/></svg>
<svg class="ic" style="left:956.0px;top:68.0px" width="20" height="20" viewBox="0 0 20 20"><path d="M4 16 L16 4" stroke="#30c030" stroke-width="1.8"/><path d="M11 3 h6 v6z" fill="#30c030"/><circle cx="4" cy="16" r="2.6" fill="#a0a0a0" stroke="#555" stroke-width="0.6"/></svg>
<svg class="ic" style="left:982.0px;top:68.0px" width="20" height="20" viewBox="0 0 20 20"><path d="M4 9 A6.5 6.5 0 0 1 15 5 L17 3 V9 H11 L13 7 A4 4 0 0 0 6.5 9Z" fill="#3ec23e" stroke="#1a8a1a" stroke-width="0.6"/><path d="M16 11 A6.5 6.5 0 0 1 5 15 L3 17 V11 H9 L7 13 A4 4 0 0 0 13.5 11Z" fill="#3ec23e" stroke="#1a8a1a" stroke-width="0.6"/></svg>
<svg class="ic" style="left:1008.0px;top:68.0px" width="20" height="20" viewBox="0 0 20 20"><g transform="translate(0 0) scale(1.0)"><path d="M1 7 Q10 -1 19 7 Q10 11 1 7Z" fill="#e6e9f5" stroke="#3a4a70" stroke-width="1"/><circle cx="10" cy="6" r="3.2" fill="#4d6fa8"/><circle cx="10" cy="6" r="1.3" fill="#10203a"/><path d="M1 6 Q10 -2 19 6" fill="none" stroke="#202838" stroke-width="1.6"/></g><circle cx="10" cy="13" r="6" fill="#f4d040" stroke="#c09010" stroke-width="0.6"/><circle cx="8" cy="12" r="0.8" fill="#000"/><circle cx="12" cy="12" r="0.8" fill="#000"/><path d="M7 14.5 q3 3 6 0" fill="none" stroke="#000" stroke-width="0.8"/></svg>
<svg class="ic" style="left:1052.0px;top:68.0px" width="20" height="20" viewBox="0 0 20 20"><path d="M2 12 L10 8 L18 12 L10 17Z" fill="#e0e4f0" stroke="#777" stroke-width="0.6"/><path d="M6 14 V2" stroke="#2060e0" stroke-width="1.4"/><path d="M4 4 L6 1 L8 4z" fill="#2060e0"/><path d="M6 14 L13 9" stroke="#30b030" stroke-width="1.4"/><path d="M6 14 L12 18" stroke="#e02020" stroke-width="1.4"/><circle cx="6" cy="14" r="1.4" fill="#888"/></svg>
<svg class="ic" style="left:1078.0px;top:68.0px" width="20" height="20" viewBox="0 0 20 20"><path d="M8 10 L15 6 L19 9 L12 13Z" fill="#e0e4f0" stroke="#777" stroke-width="0.6"/><path d="M14 9 V1" stroke="#2060e0" stroke-width="1.2"/><path d="M1 18 L9 10" stroke="#30b030" stroke-width="2.4"/><rect x="8" y="14" width="9" height="5" fill="#e8e8e8" stroke="#777" stroke-width="0.7"/></svg>
<svg class="ic" style="left:1104.0px;top:68.0px" width="20" height="20" viewBox="0 0 20 20"><path d="M8 10 L15 6 L19 9 L12 13Z" fill="#e0e4f0" stroke="#777" stroke-width="0.6"/><path d="M14 9 V1" stroke="#2060e0" stroke-width="1.2"/><path d="M14 9 L18 12" stroke="#e02020" stroke-width="1.2"/><path d="M2 18 L9 11 M2 13 L7 18" stroke="#30b030" stroke-width="2.2"/></svg>
<svg class="ic" style="left:1146.0px;top:68.0px" width="20" height="20" viewBox="0 0 20 20"><rect x="1" y="1" width="6" height="6" fill="#18c8f0"/><rect x="7" y="1" width="6" height="6" fill="#f0d020"/><rect x="13" y="1" width="6" height="6" fill="#30c030"/><rect x="1" y="7" width="6" height="6" fill="#f07010"/><rect x="7" y="7" width="6" height="6" fill="#a06010"/><rect x="13" y="7" width="6" height="6" fill="#f010e0"/><rect x="1" y="13" width="6" height="6" fill="#1030e0"/><rect x="7" y="13" width="6" height="6" fill="#20a020"/><rect x="13" y="13" width="6" height="6" fill="#808080"/></svg>
<svg class="ic" style="left:1172.0px;top:68.0px" width="20" height="20" viewBox="0 0 20 20"><rect x="2" y="1" width="16" height="18" fill="#e8eef8" stroke="#555" stroke-width="0.8"/><rect x="4" y="3" width="12" height="3" fill="#f0e080"/><rect x="5" y="8" width="3" height="3" fill="#30c030"/><rect x="9" y="8" width="3" height="3" fill="#f0a020"/><rect x="13" y="8" width="3" height="3" fill="#e03030"/><rect x="5" y="12" width="3" height="3" fill="#f010e0"/><rect x="9" y="12" width="3" height="3" fill="#2030e0"/><rect x="13" y="12" width="3" height="3" fill="#20b0e0"/></svg>
<svg class="ic" style="left:1199.0px;top:68.0px" width="20" height="20" viewBox="0 0 20 20"><circle cx="10" cy="10" r="9" fill="#5aa040" stroke="#3a7020" stroke-width="0.8"/><path d="M5 15 L15 5 M5 5 L15 15" stroke="#e8e8e8" stroke-width="2.2"/></svg>
<svg class="ic" style="left:1225.0px;top:68.0px" width="20" height="20" viewBox="0 0 20 20"><rect x="1" y="1" width="18" height="18" fill="#e8eef8" stroke="#3a5aa0" stroke-width="1"/><rect x="1" y="1" width="18" height="3" fill="#3a6ac0"/><path d="M5 17 L15 7 M6 7 L16 17" stroke="#3a6ac0" stroke-width="2"/><path d="M3 6v6" stroke="#c09030" stroke-width="1.5" stroke-dasharray="1.5 1"/></svg>
<svg class="ic" style="left:1251.0px;top:68.0px" width="20" height="20" viewBox="0 0 20 20"><rect x="1" y="3" width="17" height="15" fill="none" stroke="#223" stroke-width="1" stroke-dasharray="1.5 1.5"/><path d="M6 10 L14 3 L19 5 L12 12Z" fill="#e8b060" stroke="#8a5a20" stroke-width="0.6"/><path d="M5 14h4M7 12v4" stroke="#20a0e0" stroke-width="1.4"/></svg>
<svg class="ic" style="left:1277.0px;top:68.0px" width="20" height="20" viewBox="0 0 20 20"><path d="M3 18 L6 3 L19 2 L16 17Z" fill="#4a6ad8" stroke="#1a2a80" stroke-width="0.8"/><path d="M6 6 L16 5 M5.5 9 L15.5 8 M5 12 L15 11 M8 4 L6 16 M11 4 L9 16 M14 4 L12 16" stroke="#e04060" stroke-width="1"/></svg>
<div class="gl" style="left:136px;transform:translateX(-50%)">属性/过滤器</div>
<div class="gl" style="left:427px;transform:translateX(-50%)">图形</div>
<div class="gl" style="left:730px;transform:translateX(-50%)">图像 (进阶)</div>
<div class="gl" style="left:955px;transform:translateX(-50%)">视图</div>
<div class="gl" style="left:1089px;transform:translateX(-50%)">工作平面</div>
<div class="gl" style="left:1223px;transform:translateX(-50%)">系统</div>
<div id="lstrip2" class="a"></div>
<div id="left" class="a"></div>
<div class="grip" style="left:2px;top:121px;width:56px;height:2px;background-image:linear-gradient(90deg,#fff 50%,#a7adbd 50%);background-size:4px 2px"></div>
<svg class="ic" style="left:7.0px;top:133.0px" width="20" height="20" viewBox="0 0 20 20"><g transform="translate(2 1) scale(0.85)"><path d="M11 12 L17 18" stroke="#707070" stroke-width="3"/><circle cx="8" cy="8" r="6" fill="#b9d3f0" stroke="#707880" stroke-width="1.6"/><path d="M5 7 a3 3 0 0 1 3 -3" stroke="#fff" stroke-width="1.2" fill="none"/></g><path d="M1 5 h3 M1 9 h3 M2 13 h3" stroke="#b0b8c8" stroke-width="1.2"/></svg>
<svg class="ic" style="left:33.0px;top:133.0px" width="20" height="20" viewBox="0 0 20 20"><path d="M3 4 L15 18 M6 2 L18 15" stroke="#3a7ae0" stroke-width="1.3" stroke-dasharray="3 1.5"/><path d="M4 17 L15 4 L18 6 L7 19 L3 20Z" fill="#e0a840" stroke="#6a4a10" stroke-width="0.7"/><path d="M15 4 L18 6 L19 4.5 L16 2.5Z" fill="#e04040"/><path d="M14 1 h6 l-3 3z" fill="#000"/></svg>
<svg class="ic" style="left:7.0px;top:159.0px" width="20" height="20" viewBox="0 0 20 20"><rect x="4" y="5" width="12" height="10" fill="#dfe8fa" stroke="#777" stroke-width="1"/><path d="M1 1h4M1 1v4M19 1h-4M19 1v4M1 19h4M1 19v-4M19 19h-4M19 19v-4" stroke="#30b030" stroke-width="1.8"/></svg>
<svg class="ic" style="left:33.0px;top:159.0px" width="20" height="20" viewBox="0 0 20 20"><path d="M2 8 Q-1 0 7 2 Q14 4 10 12 Q7 19 14 18 Q19 16 16 11" fill="none" stroke="#3a6ae0" stroke-width="1.6"/><path d="M4 17 L15 4 L18 6 L7 19 L3 20Z" fill="#e0a840" stroke="#6a4a10" stroke-width="0.7"/><path d="M15 4 L18 6 L19 4.5 L16 2.5Z" fill="#e04040"/><path d="M14 1 h6 l-3 3z" fill="#000"/></svg>
<svg class="ic" style="left:7.0px;top:185.0px" width="20" height="20" viewBox="0 0 20 20"><path d="M1 3h4M3 1v4M1 6h4" stroke="#000" stroke-width="0.9"/><g transform="translate(3 2) scale(0.8)"><path d="M11 12 L17 18" stroke="#707070" stroke-width="3"/><circle cx="8" cy="8" r="6" fill="#b9d3f0" stroke="#707880" stroke-width="1.6"/><path d="M5 7 a3 3 0 0 1 3 -3" stroke="#fff" stroke-width="1.2" fill="none"/></g><g transform="translate(9 9) scale(0.5)"><path d="M10 2 L18 6 L10 10 L2 6Z" fill="#9a9a9a" stroke="#333" stroke-width="0.8"/><path d="M2 6 L10 10 V18 L2 14Z" fill="#707070" stroke="#333" stroke-width="0.8"/><path d="M18 6 L10 10 V18 L18 14Z" fill="#505050" stroke="#333" stroke-width="0.8"/></g><path d="M13 0 h6 l-3 3z" fill="#000"/></svg>
<svg class="ic" style="left:33.0px;top:185.0px" width="20" height="20" viewBox="0 0 20 20"><path d="M2 3 h13 v4 h-3 v7 h-10z" fill="none" stroke="#e8e000" stroke-width="1.6"/><path d="M5 10 l3 4 l8 -9" fill="none" stroke="#40c040" stroke-width="2.6"/><path d="M14 0 h6 l-3 3z" fill="#000"/></svg>
<svg class="ic" style="left:7.0px;top:211.0px" width="20" height="20" viewBox="0 0 20 20"><path d="M2 12 L10 8 L18 12 L10 17Z" fill="#e0e4f0" stroke="#777" stroke-width="0.6"/><path d="M6 14 V2" stroke="#2060e0" stroke-width="1.4"/><path d="M4 4 L6 1 L8 4z" fill="#2060e0"/><path d="M6 14 L13 9" stroke="#30b030" stroke-width="1.4"/><path d="M6 14 L12 18" stroke="#e02020" stroke-width="1.4"/><circle cx="6" cy="14" r="1.4" fill="#888"/><path d="M14 0 h6 l-3 3z" fill="#000"/></svg>
<svg class="ic" style="left:33.0px;top:211.0px" width="20" height="20" viewBox="0 0 20 20"><path d="M2 14 Q2 2 7 4 Q11 6 10 12 Q9 18 15 17 Q18 15 17 10" fill="none" stroke="#3a6ae0" stroke-width="1.6"/><path d="M4 17 L15 4 L18 6 L7 19 L3 20Z" fill="#e0a840" stroke="#6a4a10" stroke-width="0.7"/><path d="M15 4 L18 6 L19 4.5 L16 2.5Z" fill="#e04040"/><path d="M14 0 h6 l-3 3z" fill="#000"/></svg>
<svg class="ic" style="left:7.0px;top:237.0px" width="20" height="20" viewBox="0 0 20 20"><path d="M2 3h10l3 2h-10z" fill="#9fb2f0"/><path d="M2 6h10v2h-10z M2 9h10v2h-10z" fill="#e0e0e0" stroke="#777" stroke-width="0.5"/><ellipse cx="10" cy="15" rx="7" ry="4" fill="#b08060" stroke="#6a4a30" stroke-width="0.6"/><circle cx="7" cy="16" r="1.5" fill="#2050e0"/><circle cx="11" cy="16" r="1.5" fill="#20b020"/><circle cx="13" cy="13" r="1.5" fill="#e02020"/><path d="M18 2 L11 11" stroke="#b06a20" stroke-width="1.6"/><path d="M13 0 h6 l-3 3z" fill="#000"/></svg>
<svg class="ic" style="left:33.0px;top:237.0px" width="20" height="20" viewBox="0 0 20 20"><path d="M6 3 L19 2 L15 18 L1 18Z" fill="#8ec0f0" stroke="#1a50c0" stroke-width="1.2"/><path d="M12 3 L8 18 M3.5 10 L17 10" stroke="#fff" stroke-width="1.2"/><path d="M14 0 h6 l-3 3z" fill="#000"/></svg>
<svg class="ic" style="left:7.0px;top:263.0px" width="20" height="20" viewBox="0 0 20 20"><path d="M4 9 A6.5 6.5 0 0 1 15 5 L17 3 V9 H11 L13 7 A4 4 0 0 0 6.5 9Z" fill="#8ab8e8" stroke="#5a88c8" stroke-width="0.6"/><path d="M16 11 A6.5 6.5 0 0 1 5 15 L3 17 V11 H9 L7 13 A4 4 0 0 0 13.5 11Z" fill="#8ab8e8" stroke="#5a88c8" stroke-width="0.6"/><path d="M14 0 h6 l-3 3z" fill="#000"/></svg>
<svg class="ic" style="left:33.0px;top:263.0px" width="20" height="20" viewBox="0 0 20 20"><g transform="translate(1 2) scale(0.85)"><path d="M10 2 L18 6 L10 10 L2 6Z" fill="#d8d8d8" stroke="#333" stroke-width="0.8"/><path d="M2 6 L10 10 V18 L2 14Z" fill="#a0a0a0" stroke="#333" stroke-width="0.8"/><path d="M18 6 L10 10 V18 L18 14Z" fill="#6a6a6a" stroke="#333" stroke-width="0.8"/></g><path d="M14 0 h6 l-3 3z" fill="#000"/></svg>
<svg class="ic" style="left:7.0px;top:289.0px" width="20" height="20" viewBox="0 0 20 20"><path d="M6 7 Q6 2 10 2 Q15 2 14 7 Q13 9 10 10 V13" fill="none" stroke="#4a7ad0" stroke-width="2.4"/><circle cx="10" cy="17" r="1.5" fill="#4a7ad0"/><ellipse cx="10" cy="19" rx="6" ry="1" fill="#888"/><path d="M13 0 h6 l-3 3z" fill="#000"/></svg>
<svg class="ic" style="left:33.0px;top:289.0px" width="20" height="20" viewBox="0 0 20 20"><path d="M2 4 V19 M18 4 V19" stroke="#555" stroke-width="1.2"/><path d="M3 6 H17" stroke="#e8e000" stroke-width="1.6"/><path d="M3 6 l3 -2 v4z M17 6 l-3 -2 v4z" fill="#e8e000"/><path d="M14 0 h6 l-3 3z" fill="#000"/></svg>
<svg class="ic" style="left:7.0px;top:315.0px" width="20" height="20" viewBox="0 0 20 20"><path d="M3 6 h14 l-2 13 h-10z" fill="#a8c8e8" stroke="#5a7a9a" stroke-width="0.8"/><ellipse cx="10" cy="6" rx="7" ry="2" fill="#c8e0f8" stroke="#5a7a9a" stroke-width="0.8"/><rect x="8" y="2" width="4" height="4" fill="#e8e000"/><path d="M7 10 l6 6 M13 10 l-6 6" stroke="#e8f0a0" stroke-width="1"/><path d="M13 0 h6 l-3 3z" fill="#000"/></svg>
<svg class="ic" style="left:33.0px;top:315.0px" width="20" height="20" viewBox="0 0 20 20"><path d="M4 8 L9 3 V6 Q17 6 16 14 Q15 18 12 18 Q15 14 12 11 Q10 10 9 10 V13Z" fill="#a8a8a8" stroke="#7a7a7a" stroke-width="0.6"/><path d="M14 0 h6 l-3 3z" fill="#000"/></svg>
<svg class="ic" style="left:7.0px;top:341.0px" width="20" height="20" viewBox="0 0 20 20"><path d="M2 2 V18" stroke="#555" stroke-width="2"/><circle cx="11" cy="10" r="6" fill="none" stroke="#8a4a20" stroke-width="1.2"/><path d="M11 2 V18 M3 10 H19 M5 4 L17 16 M17 4 L5 16" stroke="#8a4a20" stroke-width="0.8"/><circle cx="11" cy="10" r="2" fill="#f0b020"/><path d="M3 19 L12 13 M6 19 L15 13 M9 19 L18 13" stroke="#f07010" stroke-width="1.6"/><path d="M14 0 h6 l-3 3z" fill="#000"/></svg>
<svg class="ic" style="left:33.0px;top:341.0px" width="20" height="20" viewBox="0 0 20 20"><rect x="4" y="9" width="15" height="10" fill="#e8eefa" stroke="#333" stroke-width="1"/><path d="M1 4 h6 l2 2 h7 v8 h-15z" fill="#f2c75a" stroke="#b88a20" stroke-width="0.6"/><path d="M8 6 Q11 2 15 4" fill="none" stroke="#36b836" stroke-width="2.2"/></svg>
<div class="grip" style="left:2px;top:374px;width:56px;height:2px;background-image:linear-gradient(90deg,#fff 50%,#a7adbd 50%);background-size:4px 2px"></div>
<div id="vp" class="a"></div>
<svg class="a" style="left:0;top:0" width="1920" height="1048" viewBox="0 0 1920 1048">
<defs><clipPath id="vpc"><rect x="60" y="109" width="1860" height="892"/></clipPath></defs>
<g clip-path="url(#vpc)">
<polygon points="-124,561 848.4,138.75 2039.4,402 1070,822.3" fill="rgba(240,240,228,0.075)"/>
<line x1="-124.0" y1="561.0" x2="751.0" y2="181.0" stroke="#d8d8e0" stroke-width="1" stroke-dasharray="3 6"/>
<line x1="751.0" y1="181.0" x2="848.4" y2="138.8" stroke="#d8d8e0" stroke-width="1" />
<line x1="848.4" y1="138.8" x2="960.0" y2="163.4" stroke="#d8d8e0" stroke-width="1" />
<line x1="960.0" y1="163.4" x2="2039.4" y2="402.0" stroke="#d8d8e0" stroke-width="1" stroke-dasharray="3 6"/>
<line x1="1070.0" y1="822.3" x2="1169.0" y2="779.4" stroke="#d8d8e0" stroke-width="1" />
<line x1="1169.0" y1="779.4" x2="2039.4" y2="402.0" stroke="#d8d8e0" stroke-width="1" stroke-dasharray="3 6"/>
<line x1="-124.0" y1="561.0" x2="951.0" y2="796.3" stroke="#d8d8e0" stroke-width="1" stroke-dasharray="3 6"/>
<line x1="951.0" y1="796.3" x2="1070.0" y2="822.3" stroke="#d8d8e0" stroke-width="1" />
<polygon points="1254.6,545.2 1262.8,541.5 1270.7,537.7 1278.2,533.8 1285.3,529.9 1292.0,525.9 1298.3,521.9 1304.2,517.8 1309.7,513.7 1314.7,509.5 1319.3,505.3 1323.5,501.1 1327.2,496.8 1330.5,492.5 1333.3,488.2 1335.6,483.9 1337.5,479.6 1339.0,475.3 1339.9,470.9 1340.4,466.6 1340.5,462.4 1340.0,458.1 1339.2,453.9 1337.8,449.7 1336.0,445.5 1333.7,441.4 1331.0,437.3 1327.8,433.3 1324.1,429.3 1320.0,425.4 1315.5,421.6 1310.5,417.8 1305.1,414.1 1299.3,410.5 1293.1,407.0 1286.4,403.5 1279.4,400.2 1272.0,396.9 1264.2,393.8 1256.0,390.7 1247.4,387.8 1238.5,385.0 1229.3,382.3 1219.7,379.7 1209.8,377.2 1199.6,374.9 1189.1,372.7 1178.3,370.6 1167.3,368.6 1156.0,366.8 1144.4,365.2 1132.6,363.6 1120.7,362.2 1108.5,361.0 1096.1,359.9 1083.6,358.9 1070.9,358.1 1058.1,357.5 1045.1,356.9 1032.1,356.6 1018.9,356.4 1005.7,356.3 992.4,356.4 979.1,356.6 965.8,357.0 952.4,357.6 939.1,358.3 925.8,359.1 912.5,360.1 899.3,361.2 886.1,362.5 873.0,363.9 860.1,365.5 847.2,367.2 834.5,369.0 822.0,371.0 809.6,373.1 797.3,375.3 785.3,377.7 773.5,380.2 761.9,382.8 750.6,385.5 739.5,388.4 728.7,391.3 718.1,394.4 707.9,397.6 697.9,400.8 688.3,404.2 679.0,407.6 670.0,411.2 661.4,414.8 653.2,418.5 645.3,422.3 637.8,426.2 630.7,430.1 624.0,434.1 617.7,438.1 611.8,442.2 606.3,446.3 601.3,450.5 596.7,454.7 592.5,458.9 588.8,463.2 585.5,467.5 582.7,471.8 580.4,476.1 578.5,480.4 577.0,484.7 576.1,489.1 575.6,493.4 575.5,497.6 576.0,501.9 576.8,506.1 578.2,510.3 580.0,514.5 582.3,518.6 585.0,522.7 588.2,526.7 591.9,530.7 596.0,534.6 600.5,538.4 605.5,542.2 610.9,545.9 616.7,549.5 622.9,553.0 629.6,556.5 636.6,559.8 644.0,563.1 651.8,566.2 660.0,569.3 668.6,572.2 677.5,575.0 686.7,577.7 696.3,580.3 706.2,582.8 716.4,585.1 726.9,587.3 737.7,589.4 748.7,591.4 760.0,593.2 771.6,594.8 783.4,596.4 795.3,597.8 807.5,599.0 819.9,600.1 832.4,601.1 845.1,601.9 857.9,602.5 870.9,603.1 883.9,603.4 897.1,603.6 910.3,603.7 923.6,603.6 936.9,603.4 950.2,603.0 963.6,602.4 976.9,601.7 990.2,600.9 1003.5,599.9 1016.7,598.8 1029.9,597.5 1043.0,596.1 1055.9,594.5 1068.8,592.8 1081.5,591.0 1094.0,589.0 1106.4,586.9 1118.7,584.7 1130.7,582.3 1142.5,579.8 1154.1,577.2 1165.4,574.5 1176.5,571.6 1187.3,568.7 1197.9,565.6 1208.1,562.4 1218.1,559.2 1227.7,555.8 1237.0,552.4 1246.0,548.8 1254.6,545.2" fill="none" stroke="#f0f0f0" stroke-width="1.2"/>
<defs><linearGradient id="hole" x1="852" y1="0" x2="1022" y2="0" gradientUnits="userSpaceOnUse"><stop offset="0" stop-color="#3c3c3c"/><stop offset="0.35" stop-color="#686868"/><stop offset="0.7" stop-color="#979797"/><stop offset="1" stop-color="#a6a6a6"/></linearGradient></defs>
<polygon points="635.9,262.6 634.2,263.9 632.5,265.1 630.9,266.3 629.3,267.6 627.7,268.8 626.2,270.0 624.8,271.3 623.4,272.5 622.0,273.8 620.6,275.0 619.3,276.3 618.1,277.6 616.9,278.8 615.7,280.1 614.6,281.4 613.5,282.6 612.5,283.9 611.5,285.2 610.5,286.5 609.6,287.7 608.7,289.0 607.9,290.3 607.1,291.6 606.4,292.9 605.7,294.1 605.1,295.4 604.5,296.7 603.9,298.0 603.4,299.3 602.9,300.6 602.5,301.9 602.1,303.1 601.8,304.4 601.5,305.7 601.3,307.0 601.1,308.3 600.9,309.5 600.8,310.8 600.7,312.1 600.7,313.4 568.7,341.3 568.7,339.9 568.8,338.5 568.9,337.1 569.1,335.7 569.3,334.3 569.6,332.9 569.9,331.5 570.3,330.1 570.7,328.7 571.2,327.3 571.7,325.9 572.2,324.5 572.8,323.1 573.5,321.7 574.2,320.3 575.0,318.9 575.8,317.5 576.6,316.1 577.5,314.7 578.4,313.3 579.4,311.9 580.5,310.5 581.6,309.2 582.7,307.8 583.9,306.4 585.1,305.0 586.4,303.6 587.7,302.2 589.1,300.9 590.5,299.5 591.9,298.1 593.4,296.8 595.0,295.4 596.6,294.0 598.2,292.7 599.9,291.3 601.6,290.0 603.4,288.6 605.2,287.3 607.1,286.0" fill="#a0a0a0" stroke="#000" stroke-width="1.2"/>
<polygon points="1307.3,284.1 1307.3,282.8 1307.2,281.6 1307.1,280.3 1306.9,279.0 1306.7,277.8 1306.5,276.5 1306.2,275.3 1305.9,274.0 1305.5,272.7 1305.1,271.5 1304.6,270.2 1304.1,269.0 1303.5,267.8 1302.9,266.5 1302.3,265.3 1301.6,264.1 1300.9,262.9 1300.1,261.6 1299.3,260.4 1298.4,259.2 1297.5,258.0 1296.5,256.8 1295.6,255.6 1294.5,254.4 1293.4,253.2 1292.3,252.1 1291.1,250.9 1289.9,249.7 1288.7,248.6 1287.4,247.4 1286.0,246.3 1284.7,245.1 1283.2,244.0 1281.8,242.9 1280.3,241.8 1278.7,240.7 1277.1,239.6 1275.5,238.5 1273.9,237.4 1272.1,236.3 1300.9,257.2 1302.8,258.4 1304.6,259.6 1306.4,260.8 1308.1,262.0 1309.8,263.2 1311.5,264.4 1313.0,265.7 1314.6,266.9 1316.1,268.1 1317.6,269.4 1319.0,270.6 1320.3,271.9 1321.7,273.2 1322.9,274.4 1324.2,275.7 1325.3,277.0 1326.5,278.3 1327.6,279.6 1328.6,280.9 1329.6,282.2 1330.5,283.6 1331.4,284.9 1332.3,286.2 1333.1,287.5 1333.8,288.9 1334.5,290.2 1335.2,291.6 1335.8,292.9 1336.3,294.3 1336.9,295.6 1337.3,297.0 1337.7,298.4 1338.1,299.7 1338.4,301.1 1338.7,302.5 1338.9,303.9 1339.1,305.2 1339.2,306.6 1339.3,308.0 1339.3,309.4" fill="#a0a0a0" stroke="#000" stroke-width="1.2"/>
<polygon points="1278.5,330.1 1279.4,329.4 1280.3,328.6 1281.3,327.9 1282.2,327.1 1283.0,326.4 1283.9,325.6 1284.7,324.9 1285.6,324.1 1286.4,323.4 1287.2,322.6 1288.0,321.9 1288.8,321.1 1289.5,320.3 1290.3,319.6 1291.0,318.8 1291.7,318.1 1292.4,317.3 1293.1,316.5 1293.7,315.8 1294.4,315.0 1295.0,314.2 1295.6,313.5 1296.2,312.7 1296.8,311.9 1297.4,311.2 1298.0,310.4 1298.5,309.6 1299.0,308.8 1299.5,308.1 1300.0,307.3 1300.5,306.5 1301.0,305.8 1301.4,305.0 1301.8,304.2 1302.2,303.4 1302.6,302.7 1303.0,301.9 1303.4,301.1 1303.7,300.3 1304.1,299.6 1304.4,298.8 1304.7,298.0 1305.0,297.2 1305.2,296.5 1305.5,295.7 1305.7,294.9 1305.9,294.1 1306.1,293.4 1306.3,292.6 1306.5,291.8 1306.6,291.1 1306.8,290.3 1306.9,289.5 1307.0,288.7 1307.1,288.0 1307.2,287.2 1307.2,286.4 1307.3,285.7 1307.3,284.9 1307.3,284.1 1339.3,309.4 1339.3,310.2 1339.2,311.1 1339.2,311.9 1339.1,312.8 1339.1,313.6 1339.0,314.4 1338.8,315.3 1338.7,316.1 1338.6,317.0 1338.4,317.8 1338.2,318.6 1338.0,319.5 1337.8,320.3 1337.5,321.2 1337.3,322.0 1337.0,322.9 1336.7,323.7 1336.4,324.6 1336.1,325.4 1335.7,326.2 1335.4,327.1 1335.0,327.9 1334.6,328.8 1334.2,329.6 1333.8,330.5 1333.3,331.3 1332.8,332.1 1332.4,333.0 1331.9,333.8 1331.3,334.7 1330.8,335.5 1330.2,336.4 1329.7,337.2 1329.1,338.0 1328.5,338.9 1327.9,339.7 1327.2,340.6 1326.6,341.4 1325.9,342.2 1325.2,343.1 1324.5,343.9 1323.8,344.7 1323.0,345.6 1322.3,346.4 1321.5,347.2 1320.7,348.1 1319.9,348.9 1319.1,349.7 1318.2,350.5 1317.4,351.4 1316.5,352.2 1315.6,353.0 1314.7,353.8 1313.8,354.7 1312.8,355.5 1311.9,356.3 1310.9,357.1 1309.9,357.9 1308.9,358.8 1307.9,359.6" fill="#5a5a5a" stroke="#5a5a5a" stroke-width="1"/>
<polygon points="1307.9,359.6 1308.9,358.8 1309.9,357.9 1310.9,357.1 1311.9,356.3 1312.8,355.5 1313.8,354.7 1314.7,353.8 1315.6,353.0 1316.5,352.2 1317.4,351.4 1318.2,350.5 1319.1,349.7 1319.9,348.9 1320.7,348.1 1321.5,347.2 1322.3,346.4 1323.0,345.6 1323.8,344.7 1324.5,343.9 1325.2,343.1 1325.9,342.2 1326.6,341.4 1327.2,340.6 1327.9,339.7 1328.5,338.9 1329.1,338.0 1329.7,337.2 1330.2,336.4 1330.8,335.5 1331.3,334.7 1331.9,333.8 1332.4,333.0 1332.8,332.1 1333.3,331.3 1333.8,330.5 1334.2,329.6 1334.6,328.8 1335.0,327.9 1335.4,327.1 1335.7,326.2 1336.1,325.4 1336.4,324.6 1336.7,323.7 1337.0,322.9 1337.3,322.0 1337.5,321.2 1337.8,320.3 1338.0,319.5 1338.2,318.6 1338.4,317.8 1338.6,317.0 1338.7,316.1 1338.8,315.3 1339.0,314.4 1339.1,313.6 1339.1,312.8 1339.2,311.9 1339.2,311.1 1339.3,310.2 1339.3,309.4 1339.3,437.4 1339.3,438.3 1339.2,439.1 1339.2,440.0 1339.1,440.8 1339.1,441.6 1339.0,442.5 1338.8,443.3 1338.7,444.2 1338.6,445.0 1338.4,445.9 1338.2,446.7 1338.0,447.5 1337.8,448.4 1337.5,449.2 1337.3,450.1 1337.0,450.9 1336.7,451.8 1336.4,452.6 1336.1,453.4 1335.7,454.3 1335.4,455.1 1335.0,456.0 1334.6,456.8 1334.2,457.7 1333.8,458.5 1333.3,459.4 1332.8,460.2 1332.4,461.0 1331.9,461.9 1331.3,462.7 1330.8,463.6 1330.2,464.4 1329.7,465.2 1329.1,466.1 1328.5,466.9 1327.9,467.8 1327.2,468.6 1326.6,469.4 1325.9,470.3 1325.2,471.1 1324.5,472.0 1323.8,472.8 1323.0,473.6 1322.3,474.5 1321.5,475.3 1320.7,476.1 1319.9,476.9 1319.1,477.8 1318.2,478.6 1317.4,479.4 1316.5,480.3 1315.6,481.1 1314.7,481.9 1313.8,482.7 1312.8,483.5 1311.9,484.4 1310.9,485.2 1309.9,486.0 1308.9,486.8 1307.9,487.6" fill="#5a5a5a" stroke="#5a5a5a" stroke-width="1"/>
<polygon points="1307.9,487.6 1308.9,486.8 1309.9,486.0 1310.9,485.2 1311.9,484.4 1312.8,483.5 1313.8,482.7 1314.7,481.9 1315.6,481.1 1316.5,480.3 1317.4,479.4 1318.2,478.6 1319.1,477.8 1319.9,476.9 1320.7,476.1 1321.5,475.3 1322.3,474.5 1323.0,473.6 1323.8,472.8 1324.5,472.0 1325.2,471.1 1325.9,470.3 1326.6,469.4 1327.2,468.6 1327.9,467.8 1328.5,466.9 1329.1,466.1 1329.7,465.2 1330.2,464.4 1330.8,463.6 1331.3,462.7 1331.9,461.9 1332.4,461.0 1332.8,460.2 1333.3,459.4 1333.8,458.5 1334.2,457.7 1334.6,456.8 1335.0,456.0 1335.4,455.1 1335.7,454.3 1336.1,453.4 1336.4,452.6 1336.7,451.8 1337.0,450.9 1337.3,450.1 1337.5,449.2 1337.8,448.4 1338.0,447.5 1338.2,446.7 1338.4,445.9 1338.6,445.0 1338.7,444.2 1338.8,443.3 1339.0,442.5 1339.1,441.6 1339.1,440.8 1339.2,440.0 1339.2,439.1 1339.3,438.3 1339.3,437.4 1307.3,465.4 1307.3,466.1 1307.3,466.9 1307.2,467.7 1307.2,468.4 1307.1,469.2 1307.0,470.0 1306.9,470.8 1306.8,471.5 1306.6,472.3 1306.5,473.1 1306.3,473.9 1306.1,474.6 1305.9,475.4 1305.7,476.2 1305.5,476.9 1305.2,477.7 1305.0,478.5 1304.7,479.3 1304.4,480.0 1304.1,480.8 1303.7,481.6 1303.4,482.4 1303.0,483.1 1302.6,483.9 1302.2,484.7 1301.8,485.5 1301.4,486.2 1301.0,487.0 1300.5,487.8 1300.0,488.6 1299.5,489.3 1299.0,490.1 1298.5,490.9 1298.0,491.6 1297.4,492.4 1296.8,493.2 1296.2,493.9 1295.6,494.7 1295.0,495.5 1294.4,496.2 1293.7,497.0 1293.1,497.8 1292.4,498.5 1291.7,499.3 1291.0,500.1 1290.3,500.8 1289.5,501.6 1288.8,502.3 1288.0,503.1 1287.2,503.9 1286.4,504.6 1285.6,505.4 1284.7,506.1 1283.9,506.9 1283.0,507.6 1282.2,508.4 1281.3,509.1 1280.3,509.9 1279.4,510.6 1278.5,511.4" fill="#5a5a5a" stroke="#5a5a5a" stroke-width="1"/>
<path d="M1293.9 345.6L1278.5 330.1L1281.6 333.3L1293.9 345.6Z" fill="#a2a2a2"/>
<path d="M1278.5 330.1L1297.1 343.0L1295.4 344.4L1281.6 333.3ZM1316.9 321.0L1305.8 305.9L1320.8 313.5L1332.3 328.6ZM1338.1 322.1L1321.4 312.0L1321.9 310.6L1336.4 317.8ZM1334.0 332.9L1321.4 312.0L1328.8 318.2L1335.0 330.8ZM1330.8 353.9L1334.0 332.9L1334.0 339.1L1332.2 351.7ZM1334.0 363.9L1336.4 343.0L1336.4 349.2L1335.0 361.8ZM1330.8 384.9L1334.0 363.9L1334.0 370.1L1332.2 382.7ZM1334.0 394.9L1336.4 374.0L1336.4 380.2L1335.0 392.8ZM1330.8 415.9L1334.0 394.9L1334.0 401.1L1332.2 413.7ZM1334.0 425.9L1336.4 405.0L1336.4 411.2L1335.0 423.8ZM1330.8 446.9L1334.0 425.9L1334.0 432.1L1332.2 444.7ZM1334.0 456.9L1336.4 436.0L1336.4 442.2L1335.0 454.8Z" fill="#5a5a5a"/>
<path d="M1297.1 343.0L1307.9 362.5L1306.3 358.0L1295.4 344.4ZM1307.9 332.8L1317.1 354.5L1315.5 350.0L1306.6 334.3ZM1316.0 322.5L1327.0 343.8L1325.3 339.4L1315.1 323.9ZM1321.4 312.0L1334.0 332.9L1332.3 328.6L1320.8 313.5ZM1323.9 301.6L1338.1 322.1L1336.4 317.8L1323.7 303.1ZM1324.1 297.4L1339.3 312.3L1337.5 308.0L1324.1 297.4ZM1297.1 343.0L1317.1 354.5L1314.8 356.6L1304.1 349.8ZM1317.1 354.5L1311.2 375.3L1311.2 369.1L1314.8 356.6ZM1311.2 375.3L1307.9 362.5L1307.9 362.5L1311.2 369.1ZM1307.9 362.5L1304.1 349.8L1314.8 356.6L1311.2 369.1ZM1307.9 332.8L1327.0 343.8L1325.2 345.9L1315.1 339.4ZM1327.0 343.8L1322.4 364.6L1322.4 358.4L1325.2 345.9ZM1322.4 364.6L1317.1 354.5L1319.3 352.3L1322.4 358.4ZM1319.3 352.3L1315.1 339.4L1325.2 345.9L1322.4 358.4ZM1316.0 322.5L1334.0 332.9L1332.8 335.1L1323.3 328.9ZM1334.0 332.9L1330.8 353.9L1330.8 347.7L1332.8 335.1ZM1330.8 353.9L1327.0 343.8L1328.6 341.6L1330.8 347.7ZM1328.6 341.6L1323.3 328.9L1332.8 335.1L1330.8 347.7ZM1321.4 312.0L1338.1 322.1L1337.5 324.2L1328.8 318.2ZM1338.1 322.1L1336.4 343.0L1336.4 336.8L1337.5 324.2ZM1336.4 343.0L1334.0 332.9L1335.0 330.8L1336.4 336.8ZM1335.0 330.8L1328.8 318.2L1337.5 324.2L1336.4 336.8ZM1323.9 301.6L1339.3 312.3L1339.3 313.4L1331.4 307.6ZM1339.3 312.3L1339.0 332.1L1339.0 325.9L1339.3 313.4ZM1339.0 332.1L1338.1 322.1L1338.6 319.9L1339.0 325.9ZM1338.6 319.9L1331.4 307.6L1339.3 313.4L1339.0 325.9ZM1307.9 362.5L1311.2 375.3L1308.6 377.4L1307.9 368.7ZM1311.2 375.3L1307.9 393.5L1307.9 387.3L1308.6 377.4ZM1307.9 393.5L1307.9 378.0L1307.9 378.0L1307.9 387.3ZM1307.9 378.0L1307.9 368.7L1308.6 377.4L1307.9 387.3ZM1317.1 354.5L1322.4 364.6L1320.4 366.8L1317.1 360.7ZM1322.4 364.6L1317.1 385.5L1317.1 379.3L1320.4 366.8ZM1317.1 385.5L1311.2 375.3L1313.7 373.2L1317.1 379.3ZM1313.7 373.2L1317.1 360.7L1320.4 366.8L1317.1 379.3ZM1327.0 343.8L1330.8 353.9L1329.4 356.0L1327.0 350.0ZM1330.8 353.9L1327.0 374.8L1327.0 368.6L1329.4 356.0ZM1327.0 374.8L1322.4 364.6L1324.3 362.5L1327.0 368.6ZM1324.3 362.5L1327.0 350.0L1329.4 356.0L1327.0 368.6ZM1334.0 332.9L1336.4 343.0L1335.5 345.2L1334.0 339.1ZM1336.4 343.0L1334.0 363.9L1334.0 357.7L1335.5 345.2ZM1334.0 363.9L1330.8 353.9L1332.2 351.7L1334.0 357.7ZM1332.2 351.7L1334.0 339.1L1335.5 345.2L1334.0 357.7ZM1338.1 322.1L1339.0 332.1L1338.7 334.3L1338.1 328.3ZM1339.0 332.1L1338.1 353.1L1338.1 346.9L1338.7 334.3ZM1338.1 353.1L1336.4 343.0L1337.2 340.8L1338.1 346.9ZM1337.2 340.8L1338.1 328.3L1338.7 334.3L1338.1 346.9ZM1339.3 312.3L1339.3 327.8L1339.3 327.8L1339.3 318.5ZM1339.3 327.8L1339.3 343.3L1339.3 337.1L1339.3 327.8ZM1339.3 343.3L1339.0 332.1L1339.2 330.0L1339.3 337.1ZM1339.2 330.0L1339.3 318.5L1339.3 327.8L1339.3 337.1ZM1311.2 375.3L1317.1 385.5L1314.8 387.6L1311.2 381.5ZM1317.1 385.5L1311.2 406.3L1311.2 400.1L1314.8 387.6ZM1311.2 406.3L1307.9 393.5L1307.9 393.5L1311.2 400.1ZM1307.9 393.5L1311.2 381.5L1314.8 387.6L1311.2 400.1ZM1322.4 364.6L1327.0 374.8L1325.2 376.9L1322.4 370.8ZM1327.0 374.8L1322.4 395.6L1322.4 389.4L1325.2 376.9ZM1322.4 395.6L1317.1 385.5L1319.3 383.3L1322.4 389.4ZM1319.3 383.3L1322.4 370.8L1325.2 376.9L1322.4 389.4ZM1330.8 353.9L1334.0 363.9L1332.8 366.1L1330.8 360.1ZM1334.0 363.9L1330.8 384.9L1330.8 378.7L1332.8 366.1ZM1330.8 384.9L1327.0 374.8L1328.6 372.6L1330.8 378.7ZM1328.6 372.6L1330.8 360.1L1332.8 366.1L1330.8 378.7ZM1336.4 343.0L1338.1 353.1L1337.5 355.2L1336.4 349.2ZM1338.1 353.1L1336.4 374.0L1336.4 367.8L1337.5 355.2ZM1336.4 374.0L1334.0 363.9L1335.0 361.8L1336.4 367.8ZM1335.0 361.8L1336.4 349.2L1337.5 355.2L1336.4 367.8ZM1339.0 332.1L1339.3 343.3L1339.3 344.4L1339.0 338.3ZM1339.3 343.3L1339.0 363.1L1339.0 356.9L1339.3 344.4ZM1339.0 363.1L1338.1 353.1L1338.6 350.9L1339.0 356.9ZM1338.6 350.9L1339.0 338.3L1339.3 344.4L1339.0 356.9ZM1307.9 393.5L1311.2 406.3L1308.6 408.4L1307.9 399.7ZM1311.2 406.3L1307.9 424.5L1307.9 418.3L1308.6 408.4ZM1307.9 424.5L1307.9 409.0L1307.9 409.0L1307.9 418.3ZM1307.9 409.0L1307.9 399.7L1308.6 408.4L1307.9 418.3ZM1317.1 385.5L1322.4 395.6L1320.4 397.8L1317.1 391.7ZM1322.4 395.6L1317.1 416.5L1317.1 410.3L1320.4 397.8ZM1317.1 416.5L1311.2 406.3L1313.7 404.2L1317.1 410.3ZM1313.7 404.2L1317.1 391.7L1320.4 397.8L1317.1 410.3ZM1327.0 374.8L1330.8 384.9L1329.4 387.0L1327.0 381.0ZM1330.8 384.9L1327.0 405.8L1327.0 399.6L1329.4 387.0ZM1327.0 405.8L1322.4 395.6L1324.3 393.5L1327.0 399.6ZM1324.3 393.5L1327.0 381.0L1329.4 387.0L1327.0 399.6ZM1334.0 363.9L1336.4 374.0L1335.5 376.2L1334.0 370.1ZM1336.4 374.0L1334.0 394.9L1334.0 388.7L1335.5 376.2ZM1334.0 394.9L1330.8 384.9L1332.2 382.7L1334.0 388.7ZM1332.2 382.7L1334.0 370.1L1335.5 376.2L1334.0 388.7ZM1338.1 353.1L1339.0 363.1L1338.7 365.3L1338.1 359.3ZM1339.0 363.1L1338.1 384.1L1338.1 377.9L1338.7 365.3ZM1338.1 384.1L1336.4 374.0L1337.2 371.8L1338.1 377.9ZM1337.2 371.8L1338.1 359.3L1338.7 365.3L1338.1 377.9ZM1339.3 343.3L1339.3 358.8L1339.3 358.8L1339.3 349.5ZM1339.3 358.8L1339.3 374.3L1339.3 368.1L1339.3 358.8ZM1339.3 374.3L1339.0 363.1L1339.2 361.0L1339.3 368.1ZM1339.2 361.0L1339.3 349.5L1339.3 358.8L1339.3 368.1ZM1311.2 406.3L1317.1 416.5L1314.8 418.6L1311.2 412.5ZM1317.1 416.5L1311.2 437.3L1311.2 431.1L1314.8 418.6ZM1311.2 437.3L1307.9 424.5L1307.9 424.5L1311.2 431.1ZM1307.9 424.5L1311.2 412.5L1314.8 418.6L1311.2 431.1ZM1322.4 395.6L1327.0 405.8L1325.2 407.9L1322.4 401.8ZM1327.0 405.8L1322.4 426.6L1322.4 420.4L1325.2 407.9ZM1322.4 426.6L1317.1 416.5L1319.3 414.3L1322.4 420.4ZM1319.3 414.3L1322.4 401.8L1325.2 407.9L1322.4 420.4ZM1330.8 384.9L1334.0 394.9L1332.8 397.1L1330.8 391.1ZM1334.0 394.9L1330.8 415.9L1330.8 409.7L1332.8 397.1ZM1330.8 415.9L1327.0 405.8L1328.6 403.6L1330.8 409.7ZM1328.6 403.6L1330.8 391.1L1332.8 397.1L1330.8 409.7ZM1336.4 374.0L1338.1 384.1L1337.5 386.2L1336.4 380.2ZM1338.1 384.1L1336.4 405.0L1336.4 398.8L1337.5 386.2ZM1336.4 405.0L1334.0 394.9L1335.0 392.8L1336.4 398.8ZM1335.0 392.8L1336.4 380.2L1337.5 386.2L1336.4 398.8ZM1339.0 363.1L1339.3 374.3L1339.3 375.4L1339.0 369.3ZM1339.3 374.3L1339.0 394.1L1339.0 387.9L1339.3 375.4ZM1339.0 394.1L1338.1 384.1L1338.6 381.9L1339.0 387.9ZM1338.6 381.9L1339.0 369.3L1339.3 375.4L1339.0 387.9ZM1307.9 424.5L1311.2 437.3L1308.6 439.4L1307.9 430.7ZM1311.2 437.3L1307.9 455.5L1307.9 449.3L1308.6 439.4ZM1307.9 455.5L1307.9 440.0L1307.9 440.0L1307.9 449.3ZM1307.9 440.0L1307.9 430.7L1308.6 439.4L1307.9 449.3ZM1317.1 416.5L1322.4 426.6L1320.4 428.8L1317.1 422.7ZM1322.4 426.6L1317.1 447.5L1317.1 441.3L1320.4 428.8ZM1317.1 447.5L1311.2 437.3L1313.7 435.2L1317.1 441.3ZM1313.7 435.2L1317.1 422.7L1320.4 428.8L1317.1 441.3ZM1327.0 405.8L1330.8 415.9L1329.4 418.0L1327.0 412.0ZM1330.8 415.9L1327.0 436.8L1327.0 430.6L1329.4 418.0ZM1327.0 436.8L1322.4 426.6L1324.3 424.5L1327.0 430.6ZM1324.3 424.5L1327.0 412.0L1329.4 418.0L1327.0 430.6ZM1334.0 394.9L1336.4 405.0L1335.5 407.2L1334.0 401.1ZM1336.4 405.0L1334.0 425.9L1334.0 419.7L1335.5 407.2ZM1334.0 425.9L1330.8 415.9L1332.2 413.7L1334.0 419.7ZM1332.2 413.7L1334.0 401.1L1335.5 407.2L1334.0 419.7ZM1338.1 384.1L1339.0 394.1L1338.7 396.3L1338.1 390.3ZM1339.0 394.1L1338.1 415.1L1338.1 408.9L1338.7 396.3ZM1338.1 415.1L1336.4 405.0L1337.2 402.8L1338.1 408.9ZM1337.2 402.8L1338.1 390.3L1338.7 396.3L1338.1 408.9ZM1339.3 374.3L1339.3 389.8L1339.3 389.8L1339.3 380.5ZM1339.3 389.8L1339.3 405.3L1339.3 399.1L1339.3 389.8ZM1339.3 405.3L1339.0 394.1L1339.2 392.0L1339.3 399.1ZM1339.2 392.0L1339.3 380.5L1339.3 389.8L1339.3 399.1ZM1311.2 437.3L1317.1 447.5L1314.8 449.6L1311.2 443.5ZM1317.1 447.5L1311.2 468.3L1311.2 462.1L1314.8 449.6ZM1311.2 468.3L1307.9 455.5L1307.9 455.5L1311.2 462.1ZM1307.9 455.5L1311.2 443.5L1314.8 449.6L1311.2 462.1ZM1322.4 426.6L1327.0 436.8L1325.2 438.9L1322.4 432.8ZM1327.0 436.8L1322.4 457.6L1322.4 451.4L1325.2 438.9ZM1322.4 457.6L1317.1 447.5L1319.3 445.3L1322.4 451.4ZM1319.3 445.3L1322.4 432.8L1325.2 438.9L1322.4 451.4ZM1330.8 415.9L1334.0 425.9L1332.8 428.1L1330.8 422.1ZM1334.0 425.9L1330.8 446.9L1330.8 440.7L1332.8 428.1ZM1330.8 446.9L1327.0 436.8L1328.6 434.6L1330.8 440.7ZM1328.6 434.6L1330.8 422.1L1332.8 428.1L1330.8 440.7ZM1336.4 405.0L1338.1 415.1L1337.5 417.2L1336.4 411.2ZM1338.1 415.1L1336.4 436.0L1336.4 429.8L1337.5 417.2ZM1336.4 436.0L1334.0 425.9L1335.0 423.8L1336.4 429.8ZM1335.0 423.8L1336.4 411.2L1337.5 417.2L1336.4 429.8ZM1339.0 394.1L1339.3 405.3L1339.3 406.4L1339.0 400.3ZM1339.3 405.3L1339.0 425.1L1339.0 418.9L1339.3 406.4ZM1339.0 425.1L1338.1 415.1L1338.6 412.9L1339.0 418.9ZM1338.6 412.9L1339.0 400.3L1339.3 406.4L1339.0 418.9ZM1307.9 455.5L1311.2 468.3L1308.6 470.4L1307.9 461.7ZM1311.2 468.3L1307.9 486.5L1307.9 480.3L1308.6 470.4ZM1307.9 486.5L1307.9 471.0L1307.9 471.0L1307.9 480.3ZM1307.9 471.0L1307.9 461.7L1308.6 470.4L1307.9 480.3ZM1317.1 447.5L1322.4 457.6L1320.4 459.8L1317.1 453.7ZM1322.4 457.6L1317.1 478.5L1317.1 472.3L1320.4 459.8ZM1317.1 478.5L1311.2 468.3L1313.7 466.2L1317.1 472.3ZM1313.7 466.2L1317.1 453.7L1320.4 459.8L1317.1 472.3ZM1327.0 436.8L1330.8 446.9L1329.4 449.0L1327.0 443.0ZM1330.8 446.9L1327.0 467.8L1327.0 461.6L1329.4 449.0ZM1327.0 467.8L1322.4 457.6L1324.3 455.5L1327.0 461.6ZM1324.3 455.5L1327.0 443.0L1329.4 449.0L1327.0 461.6ZM1334.0 425.9L1336.4 436.0L1335.5 438.2L1334.0 432.1ZM1336.4 436.0L1334.0 456.9L1334.0 450.7L1335.5 438.2ZM1334.0 456.9L1330.8 446.9L1332.2 444.7L1334.0 450.7ZM1332.2 444.7L1334.0 432.1L1335.5 438.2L1334.0 450.7ZM1338.1 415.1L1339.0 425.1L1338.7 427.3L1338.1 421.3ZM1339.0 425.1L1338.1 446.1L1338.1 439.9L1338.7 427.3ZM1338.1 446.1L1336.4 436.0L1337.2 433.8L1338.1 439.9ZM1337.2 433.8L1338.1 421.3L1338.7 427.3L1338.1 439.9ZM1339.3 405.3L1339.3 420.8L1339.3 420.8L1339.3 411.5ZM1339.3 420.8L1339.3 436.3L1339.3 430.1L1339.3 420.8ZM1339.3 436.3L1339.0 425.1L1339.2 423.0L1339.3 430.1ZM1339.2 423.0L1339.3 411.5L1339.3 420.8L1339.3 430.1ZM1311.2 468.3L1317.1 478.5L1314.8 480.6L1311.2 474.5ZM1317.1 478.5L1295.2 497.9L1302.1 492.3L1314.8 480.6ZM1295.2 497.9L1307.9 486.5L1307.9 486.5L1302.1 492.3ZM1307.9 486.5L1311.2 474.5L1314.8 480.6L1302.1 492.3ZM1322.4 457.6L1327.0 467.8L1325.2 469.9L1322.4 463.8ZM1327.0 467.8L1305.9 487.7L1313.0 481.9L1325.2 469.9ZM1305.9 487.7L1317.1 478.5L1319.3 476.3L1313.0 481.9ZM1319.3 476.3L1322.4 463.8L1325.2 469.9L1313.0 481.9ZM1330.8 446.9L1334.0 456.9L1332.8 459.1L1330.8 453.1ZM1334.0 456.9L1314.0 477.4L1321.3 471.4L1332.8 459.1ZM1314.0 477.4L1327.0 467.8L1328.6 465.6L1321.3 471.4ZM1328.6 465.6L1330.8 453.1L1332.8 459.1L1321.3 471.4ZM1336.4 436.0L1338.1 446.1L1337.5 448.2L1336.4 442.2ZM1338.1 446.1L1319.3 467.0L1326.7 460.8L1337.5 448.2ZM1319.3 467.0L1334.0 456.9L1335.0 454.8L1326.7 460.8ZM1335.0 454.8L1336.4 442.2L1337.5 448.2L1326.7 460.8ZM1339.0 425.1L1339.3 436.3L1339.3 437.4L1339.0 431.3ZM1339.3 436.3L1321.8 456.7L1329.3 450.2L1339.3 437.4ZM1321.8 456.7L1338.1 446.1L1338.6 443.9L1329.3 450.2ZM1338.6 443.9L1339.0 431.3L1339.3 437.4L1329.3 450.2ZM1307.9 486.5L1295.2 497.9L1292.7 499.9L1302.3 492.1ZM1295.2 497.9L1278.5 511.4L1281.7 508.7L1292.7 499.9ZM1278.5 511.4L1292.0 500.4L1292.0 500.4L1281.7 508.7ZM1292.0 500.4L1302.3 492.1L1292.7 499.9L1281.7 508.7ZM1317.1 478.5L1305.9 487.7L1304.0 489.8L1311.4 484.3ZM1305.9 487.7L1287.0 504.1L1290.3 501.3L1304.0 489.8ZM1287.0 504.1L1295.2 497.9L1297.5 495.8L1290.3 501.3ZM1297.5 495.8L1311.4 484.3L1304.0 489.8L1290.3 501.3ZM1305.9 487.7L1327.0 467.8L1321.1 473.7L1307.7 485.7ZM1327.0 467.8L1314.0 477.4L1312.6 479.5L1321.1 473.7ZM1314.0 477.4L1296.0 494.2L1299.5 491.4L1312.6 479.5ZM1296.0 494.2L1305.9 487.7L1307.7 485.7L1299.5 491.4ZM1307.7 485.7L1321.1 473.7L1312.6 479.5L1299.5 491.4ZM1314.0 477.4L1334.0 456.9L1328.0 463.1L1315.2 475.3ZM1334.0 456.9L1319.3 467.0L1318.4 469.1L1328.0 463.1ZM1319.3 467.0L1302.4 484.3L1305.9 481.4L1318.4 469.1ZM1302.4 484.3L1314.0 477.4L1315.2 475.3L1305.9 481.4ZM1315.2 475.3L1328.0 463.1L1318.4 469.1L1305.9 481.4ZM1319.3 467.0L1338.1 446.1L1332.0 452.4L1320.0 465.0ZM1338.1 446.1L1321.8 456.7L1321.5 458.7L1332.0 452.4ZM1321.8 456.7L1306.2 474.3L1309.7 471.3L1321.5 458.7ZM1306.2 474.3L1319.3 467.0L1320.0 465.0L1309.7 471.3ZM1320.0 465.0L1332.0 452.4L1321.5 458.7L1309.7 471.3ZM1321.8 456.7L1339.3 436.3L1333.2 442.7L1322.0 454.6ZM1339.3 436.3L1322.0 452.5L1322.0 452.5L1333.2 442.7ZM1322.0 452.5L1307.3 465.4L1310.8 462.3L1322.0 452.5ZM1307.3 465.4L1321.8 456.7L1322.0 454.6L1310.8 462.3ZM1322.0 454.6L1333.2 442.7L1322.0 452.5L1310.8 462.3ZM1295.2 497.9L1287.0 504.1L1284.9 506.0L1288.3 503.4ZM1287.0 504.1L1281.5 508.9L1281.5 508.9L1284.9 506.0ZM1281.5 508.9L1278.5 511.4L1278.5 511.4L1281.5 508.9ZM1278.5 511.4L1288.3 503.4L1284.9 506.0L1281.5 508.9ZM1287.0 504.1L1305.9 487.7L1298.8 493.5L1289.0 502.1ZM1305.9 487.7L1296.0 494.2L1294.4 496.2L1298.8 493.5ZM1296.0 494.2L1291.8 499.2L1291.8 499.2L1294.4 496.2ZM1291.8 499.2L1287.0 504.1L1289.0 502.1L1291.8 499.2ZM1289.0 502.1L1298.8 493.5L1294.4 496.2L1291.8 499.2ZM1296.0 494.2L1314.0 477.4L1306.7 483.4L1297.5 492.2ZM1314.0 477.4L1302.4 484.3L1301.4 486.3L1306.7 483.4ZM1302.4 484.3L1299.6 489.3L1299.6 489.3L1301.4 486.3ZM1299.6 489.3L1296.0 494.2L1297.5 492.2L1299.6 489.3ZM1297.5 492.2L1306.7 483.4L1301.4 486.3L1299.6 489.3ZM1302.4 484.3L1319.3 467.0L1311.9 473.2L1303.4 482.3ZM1319.3 467.0L1306.2 474.3L1305.7 476.3L1311.9 473.2ZM1306.2 474.3L1304.7 479.3L1304.7 479.3L1305.7 476.3ZM1304.7 479.3L1302.4 484.3L1303.4 482.3L1304.7 479.3ZM1303.4 482.3L1311.9 473.2L1305.7 476.3L1304.7 479.3ZM1306.2 474.3L1321.8 456.7L1314.4 463.1L1306.6 472.3ZM1321.8 456.7L1307.3 465.4L1307.3 466.4L1314.4 463.1ZM1307.3 465.4L1307.1 469.4L1307.1 469.4L1307.3 466.4ZM1307.1 469.4L1306.2 474.3L1306.6 472.3L1307.1 469.4ZM1306.6 472.3L1314.4 463.1L1307.3 466.4L1307.1 469.4ZM1278.5 511.4L1281.5 508.9L1279.2 510.8L1278.5 511.4ZM1281.5 508.9L1278.5 511.4L1278.5 511.4L1279.2 510.8ZM1278.5 511.4L1278.5 511.4L1278.5 511.4L1278.5 511.4ZM1278.5 511.4L1278.5 511.4L1279.2 510.8L1278.5 511.4ZM1287.0 504.1L1291.8 499.2L1290.0 501.1L1287.0 504.1ZM1291.8 499.2L1287.0 504.1L1287.0 504.1L1290.0 501.1ZM1287.0 504.1L1281.5 508.9L1283.8 507.0L1287.0 504.1ZM1283.8 507.0L1287.0 504.1L1290.0 501.1L1287.0 504.1ZM1291.8 499.2L1296.0 494.2L1296.0 494.2L1293.6 497.2ZM1296.0 494.2L1299.6 489.3L1298.2 491.3L1296.0 494.2ZM1299.6 489.3L1296.0 494.2L1296.0 494.2L1298.2 491.3ZM1296.0 494.2L1291.8 499.2L1293.6 497.2L1296.0 494.2ZM1293.6 497.2L1296.0 494.2L1298.2 491.3L1296.0 494.2ZM1299.6 489.3L1302.4 484.3L1302.4 484.3L1300.8 487.3ZM1302.4 484.3L1304.7 479.3L1303.9 481.3L1302.4 484.3ZM1304.7 479.3L1302.4 484.3L1302.4 484.3L1303.9 481.3ZM1302.4 484.3L1299.6 489.3L1300.8 487.3L1302.4 484.3ZM1300.8 487.3L1302.4 484.3L1303.9 481.3L1302.4 484.3ZM1304.7 479.3L1306.2 474.3L1306.2 474.3L1305.4 477.3ZM1306.2 474.3L1307.1 469.4L1306.8 471.3L1306.2 474.3ZM1307.1 469.4L1306.2 474.3L1306.2 474.3L1306.8 471.3ZM1306.2 474.3L1304.7 479.3L1305.4 477.3L1306.2 474.3ZM1305.4 477.3L1306.2 474.3L1306.8 471.3L1306.2 474.3ZM1307.1 469.4L1307.3 465.4L1307.3 465.4L1307.2 467.4ZM1307.3 465.4L1307.3 465.4L1307.3 465.4L1307.3 465.4ZM1307.3 465.4L1307.3 465.4L1307.3 465.4L1307.3 465.4ZM1307.3 465.4L1307.1 469.4L1307.2 467.4L1307.3 465.4ZM1307.2 467.4L1307.3 465.4L1307.3 465.4L1307.3 465.4Z" fill="#424242"/>
<path d="M1307.9 362.5L1293.9 345.6L1293.9 345.6L1306.3 358.0Z" fill="#7e7e7e"/>
<path d="M1293.9 345.6L1281.6 333.3L1295.4 344.4L1306.3 358.0ZM1327.0 343.8L1307.9 332.8L1309.2 331.4L1325.3 339.4ZM1317.1 354.5L1307.9 332.8L1315.1 339.4L1319.3 352.3ZM1317.1 385.5L1322.4 364.6L1322.4 370.8L1319.3 383.3ZM1317.1 416.5L1322.4 395.6L1322.4 401.8L1319.3 414.3ZM1317.1 447.5L1322.4 426.6L1322.4 432.8L1319.3 445.3ZM1317.1 478.5L1322.4 457.6L1322.4 463.8L1319.3 476.3Z" fill="#6c6c6c"/>
<path d="M1297.1 343.0L1287.0 322.8L1290.2 325.9L1298.8 341.6Z" fill="#9c9c9c"/>
<path d="M1287.0 322.8L1307.9 332.8L1306.6 334.3L1290.2 325.9ZM1321.9 310.6L1309.6 295.9L1323.7 303.1L1336.4 317.8ZM1336.4 343.0L1338.1 322.1L1338.1 328.3L1337.2 340.8ZM1336.4 374.0L1338.1 353.1L1338.1 359.3L1337.2 371.8ZM1336.4 405.0L1338.1 384.1L1338.1 390.3L1337.2 402.8ZM1336.4 436.0L1338.1 415.1L1338.1 421.3L1337.2 433.8Z" fill="#545454"/>
<path d="M1317.1 354.5L1297.1 343.0L1298.8 341.6L1315.5 350.0ZM1307.9 362.5L1297.1 343.0L1304.1 349.8L1307.9 362.5ZM1307.9 378.0L1307.9 362.5L1307.9 368.7L1307.9 378.0ZM1307.9 393.5L1311.2 375.3L1311.2 381.5L1307.9 393.5ZM1307.9 409.0L1307.9 393.5L1307.9 399.7L1307.9 409.0ZM1307.9 424.5L1311.2 406.3L1311.2 412.5L1307.9 424.5ZM1307.9 440.0L1307.9 424.5L1307.9 430.7L1307.9 440.0ZM1307.9 455.5L1311.2 437.3L1311.2 443.5L1307.9 455.5ZM1307.9 471.0L1307.9 455.5L1307.9 461.7L1307.9 471.0ZM1307.9 486.5L1311.2 468.3L1311.2 474.5L1307.9 486.5Z" fill="#787878"/>
<path d="M1298.8 341.6L1290.2 325.9L1306.6 334.3L1315.5 350.0ZM1322.4 364.6L1327.0 343.8L1327.0 350.0L1324.3 362.5ZM1322.4 395.6L1327.0 374.8L1327.0 381.0L1324.3 393.5ZM1322.4 426.6L1327.0 405.8L1327.0 412.0L1324.3 424.5ZM1322.4 457.6L1327.0 436.8L1327.0 443.0L1324.3 455.5Z" fill="#666666"/>
<path d="M1307.9 332.8L1296.0 313.0L1299.3 316.0L1309.2 331.4Z" fill="#969696"/>
<path d="M1296.0 313.0L1316.0 322.5L1315.1 323.9L1299.3 316.0ZM1302.4 303.0L1321.4 312.0L1320.8 313.5L1305.8 305.9ZM1306.2 293.1L1323.9 301.6L1323.7 303.1L1309.6 295.9ZM1339.3 312.3L1323.9 301.6L1324.0 300.1L1337.5 308.0ZM1324.0 300.1L1310.7 286.8L1324.1 297.4L1337.5 308.0ZM1338.1 322.1L1323.9 301.6L1331.4 307.6L1338.6 319.9ZM1338.1 353.1L1339.0 332.1L1339.0 338.3L1338.6 350.9ZM1338.1 384.1L1339.0 363.1L1339.0 369.3L1338.6 381.9ZM1338.1 415.1L1339.0 394.1L1339.0 400.3L1338.6 412.9ZM1338.1 446.1L1339.0 425.1L1339.0 431.3L1338.6 443.9ZM1292.0 500.4L1307.9 486.5L1302.3 492.1L1292.0 500.4ZM1278.5 511.4L1278.5 511.4L1278.5 511.4L1278.5 511.4Z" fill="#4e4e4e"/>
<path d="M1309.2 331.4L1299.3 316.0L1315.1 323.9L1325.3 339.4ZM1334.0 332.9L1316.0 322.5L1316.9 321.0L1332.3 328.6ZM1327.0 343.8L1316.0 322.5L1323.3 328.9L1328.6 341.6ZM1327.0 374.8L1330.8 353.9L1330.8 360.1L1328.6 372.6ZM1327.0 405.8L1330.8 384.9L1330.8 391.1L1328.6 403.6ZM1327.0 436.8L1330.8 415.9L1330.8 422.1L1328.6 434.6ZM1327.0 467.8L1330.8 446.9L1330.8 453.1L1328.6 465.6Z" fill="#606060"/>
<path d="M1316.0 322.5L1302.4 303.0L1305.8 305.9L1316.9 321.0Z" fill="#909090"/>
<path d="M1321.4 312.0L1306.2 293.1L1309.6 295.9L1321.9 310.6Z" fill="#8a8a8a"/>
<path d="M1323.9 301.6L1307.3 284.1L1310.7 286.8L1324.0 300.1Z" fill="#848484"/>
<path d="M1307.3 284.1L1324.1 297.4L1324.1 297.4L1310.7 286.8ZM1339.0 332.1L1339.3 312.3L1339.3 318.5L1339.2 330.0ZM1339.0 363.1L1339.3 343.3L1339.3 349.5L1339.2 361.0ZM1339.0 394.1L1339.3 374.3L1339.3 380.5L1339.2 392.0ZM1339.0 425.1L1339.3 405.3L1339.3 411.5L1339.2 423.0ZM1295.2 497.9L1317.1 478.5L1311.4 484.3L1297.5 495.8ZM1278.5 511.4L1295.2 497.9L1288.3 503.4L1278.5 511.4ZM1281.5 508.9L1287.0 504.1L1287.0 504.1L1283.8 507.0Z" fill="#484848"/>
<path d="M1311.2 375.3L1317.1 354.5L1317.1 360.7L1313.7 373.2ZM1311.2 406.3L1317.1 385.5L1317.1 391.7L1313.7 404.2ZM1311.2 437.3L1317.1 416.5L1317.1 422.7L1313.7 435.2ZM1311.2 468.3L1317.1 447.5L1317.1 453.7L1313.7 466.2Z" fill="#727272"/>
<path d="M1297.1 343.0L1287.0 322.8L1307.9 332.8L1317.1 354.5ZM1298.8 341.6L1290.2 325.9L1306.6 334.3L1315.5 350.0ZM1307.9 332.8L1296.0 313.0L1316.0 322.5L1327.0 343.8ZM1316.0 322.5L1302.4 303.0L1321.4 312.0L1334.0 332.9ZM1307.9 362.5L1297.1 343.0L1317.1 354.5L1311.2 375.3ZM1307.9 362.5L1304.1 349.8L1314.8 356.6L1311.2 369.1ZM1317.1 354.5L1307.9 332.8L1327.0 343.8L1322.4 364.6ZM1319.3 352.3L1315.1 339.4L1325.2 345.9L1322.4 358.4ZM1327.0 343.8L1316.0 322.5L1334.0 332.9L1330.8 353.9ZM1334.0 332.9L1321.4 312.0L1338.1 322.1L1336.4 343.0ZM1311.2 375.3L1317.1 354.5L1322.4 364.6L1317.1 385.5ZM1313.7 373.2L1317.1 360.7L1320.4 366.8L1317.1 379.3ZM1322.4 364.6L1327.0 343.8L1330.8 353.9L1327.0 374.8ZM1330.8 353.9L1334.0 332.9L1336.4 343.0L1334.0 363.9ZM1307.9 393.5L1311.2 375.3L1317.1 385.5L1311.2 406.3ZM1307.9 393.5L1311.2 381.5L1314.8 387.6L1311.2 400.1ZM1317.1 385.5L1322.4 364.6L1327.0 374.8L1322.4 395.6ZM1319.3 383.3L1322.4 370.8L1325.2 376.9L1322.4 389.4ZM1327.0 374.8L1330.8 353.9L1334.0 363.9L1330.8 384.9ZM1334.0 363.9L1336.4 343.0L1338.1 353.1L1336.4 374.0ZM1311.2 406.3L1317.1 385.5L1322.4 395.6L1317.1 416.5ZM1313.7 404.2L1317.1 391.7L1320.4 397.8L1317.1 410.3ZM1322.4 395.6L1327.0 374.8L1330.8 384.9L1327.0 405.8ZM1330.8 384.9L1334.0 363.9L1336.4 374.0L1334.0 394.9ZM1307.9 424.5L1311.2 406.3L1317.1 416.5L1311.2 437.3ZM1307.9 424.5L1311.2 412.5L1314.8 418.6L1311.2 431.1ZM1317.1 416.5L1322.4 395.6L1327.0 405.8L1322.4 426.6ZM1319.3 414.3L1322.4 401.8L1325.2 407.9L1322.4 420.4ZM1327.0 405.8L1330.8 384.9L1334.0 394.9L1330.8 415.9ZM1334.0 394.9L1336.4 374.0L1338.1 384.1L1336.4 405.0ZM1311.2 437.3L1317.1 416.5L1322.4 426.6L1317.1 447.5ZM1313.7 435.2L1317.1 422.7L1320.4 428.8L1317.1 441.3ZM1322.4 426.6L1327.0 405.8L1330.8 415.9L1327.0 436.8ZM1330.8 415.9L1334.0 394.9L1336.4 405.0L1334.0 425.9ZM1307.9 455.5L1311.2 437.3L1317.1 447.5L1311.2 468.3ZM1307.9 455.5L1311.2 443.5L1314.8 449.6L1311.2 462.1ZM1317.1 447.5L1322.4 426.6L1327.0 436.8L1322.4 457.6ZM1319.3 445.3L1322.4 432.8L1325.2 438.9L1322.4 451.4ZM1327.0 436.8L1330.8 415.9L1334.0 425.9L1330.8 446.9ZM1334.0 425.9L1336.4 405.0L1338.1 415.1L1336.4 436.0ZM1311.2 468.3L1317.1 447.5L1322.4 457.6L1317.1 478.5ZM1313.7 466.2L1317.1 453.7L1320.4 459.8L1317.1 472.3ZM1322.4 457.6L1327.0 436.8L1330.8 446.9L1327.0 467.8ZM1330.8 446.9L1334.0 425.9L1336.4 436.0L1334.0 456.9ZM1307.9 486.5L1311.2 468.3L1317.1 478.5L1295.2 497.9ZM1307.9 486.5L1311.2 474.5L1314.8 480.6L1302.1 492.3ZM1317.1 478.5L1322.4 457.6L1327.0 467.8L1305.9 487.7ZM1319.3 476.3L1322.4 463.8L1325.2 469.9L1313.0 481.9ZM1327.0 467.8L1330.8 446.9L1334.0 456.9L1314.0 477.4ZM1334.0 456.9L1336.4 436.0L1338.1 446.1L1319.3 467.0ZM1295.2 497.9L1317.1 478.5L1305.9 487.7L1287.0 504.1ZM1297.5 495.8L1311.4 484.3L1304.0 489.8L1290.3 501.3ZM1305.9 487.7L1327.0 467.8L1314.0 477.4L1296.0 494.2ZM1314.0 477.4L1334.0 456.9L1319.3 467.0L1302.4 484.3ZM1278.5 511.4L1295.2 497.9L1287.0 504.1L1281.5 508.9ZM1287.0 504.1L1305.9 487.7L1296.0 494.2L1291.8 499.2ZM1289.0 502.1L1298.8 493.5L1294.4 496.2L1291.8 499.2ZM1296.0 494.2L1314.0 477.4L1302.4 484.3L1299.6 489.3ZM1281.5 508.9L1287.0 504.1L1291.8 499.2L1287.0 504.1ZM1283.8 507.0L1287.0 504.1L1290.0 501.1L1287.0 504.1ZM1291.8 499.2L1296.0 494.2L1299.6 489.3L1296.0 494.2ZM1299.6 489.3L1302.4 484.3L1304.7 479.3L1302.4 484.3Z" fill="none" stroke="#000" stroke-width="0.7"/>
<polygon points="1282.0,327.3 1307.9,359.6 1307.9,487.6 1282.0,508.5 1282.0,508.5" fill="#5e5e5e" stroke="#000" stroke-width="0.8"/>
<polygon points="1020.5,269.8 1282.0,327.3 1282.0,508.5 1020.5,451.1" fill="#a7a7a7" stroke="#000" stroke-width="1"/>
<polygon points="1020.5,269.8 1013.9,268.5 1006.9,267.4 999.6,266.4 992.0,265.7 984.2,265.1 976.2,264.8 968.0,264.7 959.8,264.8 951.5,265.1 943.3,265.6 935.1,266.3 927.0,267.2 919.1,268.3 911.4,269.6 904.0,271.1 896.9,272.7 890.1,274.5 883.8,276.5 877.8,278.6 872.3,280.8 867.4,283.1 862.9,285.6 859.1,288.1 855.8,290.6 853.1,293.2 851.1,295.9 849.6,298.6 848.8,301.2 848.7,303.9 849.2,306.5 850.4,309.1 852.2,311.6 854.6,314.0 857.7,316.4 861.3,318.6 865.5,320.7 870.3,322.7 875.5,324.5 881.3,326.2 887.5,327.7 887.5,508.9 881.3,507.4 875.5,505.8 870.3,504.0 865.5,502.0 861.3,499.9 857.7,497.6 854.6,495.3 852.2,492.9 850.4,490.4 849.2,487.8 848.7,485.1 848.8,482.5 849.6,479.8 851.1,477.1 853.1,474.5 855.8,471.9 859.1,469.3 862.9,466.8 867.4,464.4 872.3,462.1 877.8,459.8 883.8,457.7 890.1,455.8 896.9,454.0 904.0,452.3 911.4,450.9 919.1,449.6 927.0,448.5 935.1,447.6 943.3,446.8 951.5,446.3 959.8,446.0 968.0,445.9 976.2,446.1 984.2,446.4 992.0,446.9 999.6,447.7 1006.9,448.6 1013.9,449.7 1020.5,451.1" fill="url(#hole)"/>
<line x1="1020.5" y1="269.8" x2="1024.5" y2="451.1" stroke="#000" stroke-width="1"/>
<polygon points="600.7,313.4 600.9,317.5 601.6,321.6 602.8,325.6 604.4,329.6 606.5,333.6 609.1,337.5 612.1,341.4 615.5,345.3 619.4,349.0 623.8,352.7 628.6,356.3 633.8,359.9 639.4,363.4 645.5,366.7 651.9,370.0 658.8,373.2 666.0,376.3 673.7,379.3 681.7,382.2 690.0,385.0 698.7,387.7 707.8,390.2 717.1,392.6 726.8,394.9 736.8,397.1 747.1,399.2 757.6,401.1 768.4,402.9 779.5,404.5 790.8,406.0 802.3,407.4 814.0,408.6 825.8,409.6 837.9,410.6 850.1,411.3 862.4,412.0 874.9,412.5 887.5,412.8 900.1,413.0 912.9,413.0 925.6,412.9 938.5,412.6 951.3,412.2 964.1,411.6 977.0,410.9 989.8,410.0 1002.5,409.0 1015.2,407.8 1027.8,406.5 1040.3,405.0 1052.7,403.4 1065.0,401.7 1077.1,399.9 1089.0,397.9 1100.8,395.7 1112.4,393.5 1123.8,391.1 1134.9,388.6 1145.8,385.9 1156.5,383.2 1174.8,417.4 1163.2,420.4 1151.3,423.3 1139.1,426.0 1126.7,428.6 1114.1,431.1 1101.3,433.4 1088.2,435.6 1075.0,437.6 1061.6,439.5 1048.1,441.3 1034.5,442.8 1020.7,444.3 1006.9,445.5 993.0,446.7 979.0,447.6 965.0,448.4 951.0,449.0 937.0,449.5 923.1,449.8 909.1,449.9 895.2,449.9 881.4,449.7 867.7,449.3 854.2,448.8 840.7,448.1 827.4,447.3 814.2,446.3 801.3,445.1 788.5,443.8 776.0,442.3 763.7,440.7 751.6,438.9 739.9,436.9 728.4,434.8 717.2,432.6 706.3,430.2 695.7,427.7 685.5,425.1 675.6,422.3 666.1,419.4 657.0,416.4 648.3,413.2 640.0,409.9 632.1,406.6 624.6,403.1 617.5,399.5 610.9,395.8 604.8,392.0 599.1,388.1 593.9,384.2 589.1,380.2 584.9,376.1 581.1,371.9 577.8,367.7 575.1,363.4 572.8,359.0 571.0,354.7 569.7,350.2 569.0,345.8 568.7,341.3" fill="#bcbcbc" stroke="#bcbcbc" stroke-width="1"/>
<polygon points="568.7,341.3 569.0,345.8 569.7,350.2 571.0,354.7 572.8,359.0 575.1,363.4 577.8,367.7 581.1,371.9 584.9,376.1 589.1,380.2 593.9,384.2 599.1,388.1 604.8,392.0 610.9,395.8 617.5,399.5 624.6,403.1 632.1,406.6 640.0,409.9 648.3,413.2 657.0,416.4 666.1,419.4 675.6,422.3 685.5,425.1 695.7,427.7 706.3,430.2 717.2,432.6 728.4,434.8 739.9,436.9 751.6,438.9 763.7,440.7 776.0,442.3 788.5,443.8 801.3,445.1 814.2,446.3 827.4,447.3 840.7,448.1 854.2,448.8 867.7,449.3 881.4,449.7 895.2,449.9 909.1,449.9 923.1,449.8 937.0,449.5 951.0,449.0 965.0,448.4 979.0,447.6 993.0,446.7 1006.9,445.5 1020.7,444.3 1034.5,442.8 1048.1,441.3 1061.6,439.5 1075.0,437.6 1088.2,435.6 1101.3,433.4 1114.1,431.1 1126.7,428.6 1139.1,426.0 1151.3,423.3 1163.2,420.4 1174.8,417.4 1174.8,545.5 1163.2,548.5 1151.3,551.3 1139.1,554.1 1126.7,556.7 1114.1,559.1 1101.3,561.5 1088.2,563.7 1075.0,565.7 1061.6,567.6 1048.1,569.3 1034.5,570.9 1020.7,572.3 1006.9,573.6 993.0,574.7 979.0,575.7 965.0,576.4 951.0,577.1 937.0,577.5 923.1,577.8 909.1,578.0 895.2,577.9 881.4,577.8 867.7,577.4 854.2,576.9 840.7,576.2 827.4,575.3 814.2,574.3 801.3,573.2 788.5,571.8 776.0,570.4 763.7,568.7 751.6,566.9 739.9,565.0 728.4,562.9 717.2,560.7 706.3,558.3 695.7,555.8 685.5,553.1 675.6,550.4 666.1,547.4 657.0,544.4 648.3,541.3 640.0,538.0 632.1,534.6 624.6,531.1 617.5,527.5 610.9,523.8 604.8,520.1 599.1,516.2 593.9,512.2 589.1,508.2 584.9,504.1 581.1,499.9 577.8,495.7 575.1,491.4 572.8,487.1 571.0,482.7 569.7,478.3 569.0,473.8 568.7,469.4" fill="#6e6e6e" stroke="#6e6e6e" stroke-width="1"/>
<polygon points="568.7,469.4 569.0,473.8 569.7,478.3 571.0,482.7 572.8,487.1 575.1,491.4 577.8,495.7 581.1,499.9 584.9,504.1 589.1,508.2 593.9,512.2 599.1,516.2 604.8,520.1 610.9,523.8 617.5,527.5 624.6,531.1 632.1,534.6 640.0,538.0 648.3,541.3 657.0,544.4 666.1,547.4 675.6,550.4 685.5,553.1 695.7,555.8 706.3,558.3 717.2,560.7 728.4,562.9 739.9,565.0 751.6,566.9 763.7,568.7 776.0,570.4 788.5,571.8 801.3,573.2 814.2,574.3 827.4,575.3 840.7,576.2 854.2,576.9 867.7,577.4 881.4,577.8 895.2,577.9 909.1,578.0 923.1,577.8 937.0,577.5 951.0,577.1 965.0,576.4 979.0,575.7 993.0,574.7 1006.9,573.6 1020.7,572.3 1034.5,570.9 1048.1,569.3 1061.6,567.6 1075.0,565.7 1088.2,563.7 1101.3,561.5 1114.1,559.1 1126.7,556.7 1139.1,554.1 1151.3,551.3 1163.2,548.5 1174.8,545.5 1156.5,564.5 1145.8,567.2 1134.9,569.8 1123.8,572.3 1112.4,574.7 1100.8,577.0 1089.0,579.1 1077.1,581.1 1065.0,583.0 1052.7,584.7 1040.3,586.3 1027.8,587.7 1015.2,589.1 1002.5,590.2 989.8,591.2 977.0,592.1 964.1,592.8 951.3,593.4 938.5,593.8 925.6,594.1 912.9,594.2 900.1,594.2 887.5,594.0 874.9,593.7 862.4,593.2 850.1,592.6 837.9,591.8 825.8,590.9 814.0,589.8 802.3,588.6 790.8,587.2 779.5,585.7 768.4,584.1 757.6,582.3 747.1,580.4 736.8,578.4 726.8,576.2 717.1,573.9 707.8,571.5 698.7,568.9 690.0,566.2 681.7,563.5 673.7,560.6 666.0,557.6 658.8,554.5 651.9,551.3 645.5,548.0 639.4,544.6 633.8,541.1 628.6,537.6 623.8,534.0 619.4,530.3 615.5,526.5 612.1,522.7 609.1,518.8 606.5,514.9 604.4,510.9 602.8,506.9 601.6,502.8 600.9,498.7 600.7,494.6" fill="#6e6e6e" stroke="#6e6e6e" stroke-width="1"/>
<path d="M583.9 328.1L600.7 314.3L597.3 317.3L583.9 328.1ZM568.8 347.4L576.9 340.9L569.9 353.8L569.2 359.9ZM570.5 355.9L587.5 344.4L580.1 351.3L571.2 358.1ZM622.0 404.7L613.8 415.8L613.8 409.6L618.6 403.0ZM672.1 439.7L661.0 420.6L665.4 422.1L672.1 433.5ZM890.3 452.7L873.8 467.9L873.8 461.7L883.7 452.6ZM1127.7 410.4L1149.5 426.6L1143.6 427.9L1131.2 418.5ZM568.7 359.7L568.7 351.5L568.9 364.0L568.7 370.1ZM569.6 368.3L570.5 362.1L571.6 374.6L570.5 380.7ZM572.5 376.7L575.2 366.4L575.2 372.6L573.4 378.8ZM630.8 424.4L622.0 435.7L622.0 429.5L627.2 422.7ZM873.8 467.9L857.4 482.9L857.4 476.7L867.2 467.7ZM1169.4 437.3L1174.8 426.5L1174.8 435.8L1174.8 445.1ZM568.8 378.4L569.2 372.3L569.9 384.8L569.2 390.9ZM570.5 386.9L572.5 376.7L572.5 382.9L571.2 389.1ZM622.0 435.7L613.8 446.8L613.8 440.6L618.6 434.0ZM672.1 470.7L661.0 451.6L665.4 453.1L672.1 464.5ZM890.3 483.7L873.8 498.9L873.8 492.7L883.7 483.6ZM1134.8 445.4L1149.5 457.6L1143.6 458.9L1134.8 451.6ZM568.7 390.7L568.7 382.5L568.9 395.0L568.7 401.1ZM569.6 399.3L570.5 393.1L571.6 405.6L570.5 411.7ZM572.5 407.7L575.2 397.4L575.2 403.6L573.4 409.8ZM630.8 455.4L622.0 466.7L622.0 460.5L627.2 453.7ZM873.8 498.9L857.4 513.9L857.4 507.7L867.2 498.7ZM1169.4 468.3L1174.8 457.5L1174.8 466.8L1174.8 476.1ZM568.8 409.4L569.2 403.3L569.9 415.8L569.2 421.9ZM570.5 417.9L572.5 407.7L572.5 413.9L571.2 420.1ZM622.0 466.7L613.8 477.8L613.8 471.6L618.6 465.0ZM672.1 501.7L661.0 482.6L665.4 484.1L672.1 495.5ZM890.3 514.7L873.8 529.9L873.8 523.7L883.7 514.6ZM1134.8 476.4L1149.5 488.6L1143.6 489.9L1134.8 482.6ZM568.7 421.7L568.7 413.5L568.9 426.0L568.7 432.1ZM569.6 430.3L570.5 424.1L571.6 436.6L570.5 442.7ZM572.5 438.7L575.2 428.4L575.2 434.6L573.4 440.8ZM630.8 486.4L622.0 497.7L622.0 491.5L627.2 484.7ZM873.8 529.9L857.4 544.9L857.4 538.7L867.2 529.7ZM1169.4 499.3L1174.8 488.5L1174.8 497.8L1174.8 507.1ZM568.8 440.4L569.2 434.3L569.9 446.8L569.2 452.9ZM570.5 448.9L572.5 438.7L572.5 444.9L571.2 451.1ZM622.0 497.7L613.8 508.8L613.8 502.6L618.6 496.0ZM672.1 532.7L661.0 513.6L665.4 515.1L672.1 526.5ZM890.3 545.7L873.8 560.9L873.8 554.7L883.7 545.6ZM1134.8 507.4L1149.5 519.6L1143.6 520.9L1134.8 513.6ZM568.7 452.7L568.7 444.5L568.9 457.0L568.7 463.1ZM569.6 461.3L570.5 455.1L571.6 467.6L570.5 473.7ZM572.5 469.7L575.2 459.4L575.2 465.6L573.4 471.8ZM630.8 517.4L622.0 528.7L622.0 522.5L627.2 515.7ZM873.8 560.9L857.4 575.9L857.4 569.7L867.2 560.7ZM1169.4 530.3L1174.8 519.5L1174.8 528.8L1174.8 538.1ZM568.8 471.4L569.2 465.3L569.9 477.8L579.0 483.4ZM570.5 479.9L572.5 469.7L572.5 475.9L571.2 482.1ZM622.0 528.7L629.0 536.6L622.4 531.8L618.6 527.0ZM684.8 559.4L661.0 544.6L665.4 546.1L679.3 555.0ZM890.3 576.7L877.4 586.4L875.8 582.6L883.7 576.6ZM1134.8 538.4L1149.5 550.6L1143.6 551.9L1134.8 544.6ZM663.9 552.4L661.0 544.6L665.6 549.4L667.9 553.9ZM857.4 575.9L877.4 586.4L871.1 586.2L858.9 580.1ZM586.0 483.0L600.7 495.6L600.7 494.6L593.4 488.9ZM877.4 586.4L895.6 594.2L889.5 594.1L878.9 590.2ZM675.5 561.3L685.3 564.7L685.3 564.7L679.4 562.7ZM865.4 593.4L880.4 593.9L874.4 593.7L865.4 593.4Z" fill="#606060"/>
<path d="M600.7 314.3L584.4 334.2L584.2 332.8L597.3 317.3ZM584.4 334.2L568.7 345.3L570.5 340.8L584.2 332.8ZM587.5 344.4L570.5 355.9L572.2 351.5L586.9 343.0ZM593.3 354.4L575.2 366.4L576.9 361.9L592.3 353.0ZM602.0 364.0L582.7 376.6L584.4 372.1L600.6 362.7ZM594.4 355.7L610.2 346.4L600.6 362.7L584.4 372.1ZM613.2 373.2L593.1 386.4L594.7 381.8L611.5 372.0ZM603.4 365.3L619.8 355.5L611.5 372.0L594.7 381.8ZM661.0 420.6L662.3 397.9L665.1 398.9L662.3 415.9ZM941.0 431.9L923.7 452.7L923.8 447.8L936.5 432.0ZM1077.6 399.8L1098.5 416.0L1094.4 416.8L1078.8 403.6ZM583.9 328.1L568.7 345.3L568.7 344.2L576.4 334.6ZM584.4 334.2L570.5 355.9L569.9 353.8L576.9 340.9ZM587.5 344.4L575.2 366.4L574.0 364.4L580.1 351.3ZM622.0 404.7L643.5 390.2L637.3 398.0L625.4 406.4ZM625.4 406.4L637.3 398.0L636.4 411.4L630.8 418.2ZM809.6 464.3L794.1 447.3L800.3 447.9L809.6 458.1ZM1005.4 428.2L1024.1 446.8L1017.5 447.5L1006.4 436.7ZM1007.5 463.9L990.8 449.7L997.5 449.2L1007.5 457.7ZM1063.3 442.2L1070.6 429.3L1082.5 439.4L1073.0 450.1ZM568.7 345.3L569.2 366.1L568.9 364.0L568.7 351.5ZM570.5 355.9L572.5 376.7L571.6 374.6L570.5 362.1ZM634.5 426.1L640.3 419.2L646.2 430.8L640.3 437.8ZM794.1 478.3L779.0 461.1L785.0 461.8L794.1 472.1ZM990.8 480.7L974.1 466.3L980.8 465.9L990.8 474.5ZM1024.1 477.8L1007.5 463.9L1014.2 463.3L1024.1 471.6ZM1047.1 459.8L1056.9 449.3L1066.5 457.3L1056.9 467.9ZM568.7 359.7L568.7 376.3L568.7 375.2L568.7 365.9ZM569.2 366.1L570.5 386.9L569.9 384.8L569.2 372.3ZM572.5 376.7L575.2 397.4L574.0 395.4L572.5 382.9ZM622.0 435.7L630.8 424.4L630.8 430.6L625.4 437.4ZM625.4 437.4L630.8 430.6L636.4 442.4L630.8 449.2ZM809.6 495.3L794.1 478.3L800.3 478.9L809.6 489.1ZM1007.5 463.9L1024.1 477.8L1017.5 478.5L1007.5 470.1ZM1007.5 494.9L990.8 480.7L997.5 480.2L1007.5 488.7ZM1063.3 473.2L1073.0 462.5L1082.5 470.4L1073.0 481.1ZM568.7 376.3L569.2 397.1L568.9 395.0L568.7 382.5ZM570.5 386.9L572.5 407.7L571.6 405.6L570.5 393.1ZM634.5 457.1L640.3 450.2L646.2 461.8L640.3 468.8ZM794.1 509.3L779.0 492.1L785.0 492.8L794.1 503.1ZM990.8 511.7L974.1 497.3L980.8 496.9L990.8 505.5ZM1024.1 508.8L1007.5 494.9L1014.2 494.3L1024.1 502.6ZM1047.1 490.8L1056.9 480.3L1066.5 488.3L1056.9 498.9ZM568.7 390.7L568.7 407.3L568.7 406.2L568.7 396.9ZM569.2 397.1L570.5 417.9L569.9 415.8L569.2 403.3ZM572.5 407.7L575.2 428.4L574.0 426.4L572.5 413.9ZM622.0 466.7L630.8 455.4L630.8 461.6L625.4 468.4ZM625.4 468.4L630.8 461.6L636.4 473.4L630.8 480.2ZM809.6 526.3L794.1 509.3L800.3 509.9L809.6 520.1ZM1007.5 494.9L1024.1 508.8L1017.5 509.5L1007.5 501.1ZM1007.5 525.9L990.8 511.7L997.5 511.2L1007.5 519.7ZM1063.3 504.2L1073.0 493.5L1082.5 501.4L1073.0 512.1ZM568.7 407.3L569.2 428.1L568.9 426.0L568.7 413.5ZM570.5 417.9L572.5 438.7L571.6 436.6L570.5 424.1ZM634.5 488.1L640.3 481.2L646.2 492.8L640.3 499.8ZM794.1 540.3L779.0 523.1L785.0 523.8L794.1 534.1ZM990.8 542.7L974.1 528.3L980.8 527.9L990.8 536.5ZM1024.1 539.8L1007.5 525.9L1014.2 525.3L1024.1 533.6ZM1047.1 521.8L1056.9 511.3L1066.5 519.3L1056.9 529.9ZM568.7 421.7L568.7 438.3L568.7 437.2L568.7 427.9ZM569.2 428.1L570.5 448.9L569.9 446.8L569.2 434.3ZM572.5 438.7L575.2 459.4L574.0 457.4L572.5 444.9ZM622.0 497.7L630.8 486.4L630.8 492.6L625.4 499.4ZM625.4 499.4L630.8 492.6L636.4 504.4L630.8 511.2ZM809.6 557.3L794.1 540.3L800.3 540.9L809.6 551.1ZM1007.5 525.9L1024.1 539.8L1017.5 540.5L1007.5 532.1ZM1007.5 556.9L990.8 542.7L997.5 542.2L1007.5 550.7ZM1063.3 535.2L1073.0 524.5L1082.5 532.4L1073.0 543.1ZM568.7 438.3L569.2 459.1L568.9 457.0L568.7 444.5ZM570.5 448.9L572.5 469.7L571.6 467.6L570.5 455.1ZM634.5 519.1L640.3 512.2L646.2 523.8L640.3 530.8ZM794.1 571.3L779.0 554.1L785.0 554.8L794.1 565.1ZM990.8 573.7L974.1 559.3L980.8 558.9L990.8 567.5ZM1024.1 570.8L1007.5 556.9L1014.2 556.3L1024.1 564.6ZM1047.1 552.8L1056.9 542.3L1066.5 550.3L1056.9 560.9ZM568.7 452.7L568.7 469.3L568.7 468.2L568.7 458.9ZM569.2 459.1L570.5 479.9L569.9 477.8L569.2 465.3ZM572.5 469.7L575.2 490.4L574.0 488.4L572.5 475.9ZM622.0 528.7L630.8 517.4L630.8 523.6L625.4 530.4ZM625.4 530.4L630.8 523.6L636.4 535.4L639.0 540.2ZM816.0 582.9L794.1 571.3L800.3 571.9L813.2 579.0ZM1007.5 556.9L1024.1 570.8L1017.5 571.5L1007.5 563.1ZM1005.1 582.5L990.8 573.7L997.5 573.2L1006.2 578.6ZM1063.3 566.2L1073.0 555.5L1082.5 563.4L1069.9 571.3ZM1154.4 558.4L1174.8 544.3L1171.3 549.1L1159.7 557.1ZM753.8 581.7L758.9 575.9L762.8 579.9L758.9 582.5ZM1133.2 570.2L1154.4 558.4L1150.3 562.8L1138.5 569.0ZM1146.3 567.1L1156.5 564.5L1156.5 564.5L1151.5 565.8Z" fill="#848484"/>
<path d="M568.7 345.3L583.9 328.1L583.9 328.1L570.5 340.8ZM1127.7 410.4L1119.8 432.9L1119.0 428.1L1123.7 411.2ZM1155.5 404.0L1149.5 426.6L1148.6 421.8L1151.7 404.9ZM1166.1 401.2L1174.8 420.3L1173.8 415.6L1166.1 401.2ZM990.8 449.7L974.1 466.3L974.1 460.1L984.1 450.2ZM1024.1 446.8L1007.5 463.9L1007.5 457.7L1017.5 447.5ZM1056.9 443.1L1040.6 460.6L1040.6 454.4L1050.4 443.9ZM1088.8 438.4L1073.0 456.3L1073.0 450.1L1082.5 439.4ZM1119.8 432.9L1104.4 451.3L1104.4 445.1L1113.7 434.1ZM1149.5 426.6L1134.8 445.4L1134.8 439.2L1143.6 427.9ZM1174.8 420.3L1163.7 438.7L1163.7 432.5L1172.1 421.1ZM606.2 426.8L599.3 406.7L602.0 408.6L606.2 420.6ZM1007.5 463.9L990.8 480.7L990.8 474.5L1000.8 464.4ZM1040.6 460.6L1024.1 477.8L1024.1 471.6L1034.0 461.3ZM1073.0 456.3L1056.9 474.1L1056.9 467.9L1066.5 457.3ZM1104.4 451.3L1088.8 469.4L1088.8 463.2L1098.2 452.3ZM1134.8 445.4L1119.8 463.9L1119.8 457.7L1128.8 446.6ZM1163.7 438.7L1149.5 457.6L1149.5 451.4L1158.1 440.1ZM1174.8 435.8L1174.8 451.3L1174.8 445.1L1174.8 435.8ZM990.8 480.7L974.1 497.3L974.1 491.1L984.1 481.2ZM1024.1 477.8L1007.5 494.9L1007.5 488.7L1017.5 478.5ZM1056.9 474.1L1040.6 491.6L1040.6 485.4L1050.4 474.9ZM1088.8 469.4L1073.0 487.3L1073.0 481.1L1082.5 470.4ZM1119.8 463.9L1104.4 482.3L1104.4 476.1L1113.7 465.1ZM1149.5 457.6L1134.8 476.4L1134.8 470.2L1143.6 458.9ZM1174.8 451.3L1163.7 469.7L1163.7 463.5L1172.1 452.1ZM606.2 457.8L599.3 437.7L602.0 439.6L606.2 451.6ZM1007.5 494.9L990.8 511.7L990.8 505.5L1000.8 495.4ZM1040.6 491.6L1024.1 508.8L1024.1 502.6L1034.0 492.3ZM1073.0 487.3L1056.9 505.1L1056.9 498.9L1066.5 488.3ZM1104.4 482.3L1088.8 500.4L1088.8 494.2L1098.2 483.3ZM1134.8 476.4L1119.8 494.9L1119.8 488.7L1128.8 477.6ZM1163.7 469.7L1149.5 488.6L1149.5 482.4L1158.1 471.1ZM1174.8 466.8L1174.8 482.3L1174.8 476.1L1174.8 466.8ZM990.8 511.7L974.1 528.3L974.1 522.1L984.1 512.2ZM1024.1 508.8L1007.5 525.9L1007.5 519.7L1017.5 509.5ZM1056.9 505.1L1040.6 522.6L1040.6 516.4L1050.4 505.9ZM1088.8 500.4L1073.0 518.3L1073.0 512.1L1082.5 501.4ZM1119.8 494.9L1104.4 513.3L1104.4 507.1L1113.7 496.1ZM1149.5 488.6L1134.8 507.4L1134.8 501.2L1143.6 489.9ZM1174.8 482.3L1163.7 500.7L1163.7 494.5L1172.1 483.1ZM606.2 488.8L599.3 468.7L602.0 470.6L606.2 482.6ZM1007.5 525.9L990.8 542.7L990.8 536.5L1000.8 526.4ZM1040.6 522.6L1024.1 539.8L1024.1 533.6L1034.0 523.3ZM1073.0 518.3L1056.9 536.1L1056.9 529.9L1066.5 519.3ZM1104.4 513.3L1088.8 531.4L1088.8 525.2L1098.2 514.3ZM1134.8 507.4L1119.8 525.9L1119.8 519.7L1128.8 508.6ZM1163.7 500.7L1149.5 519.6L1149.5 513.4L1158.1 502.1ZM1174.8 497.8L1174.8 513.3L1174.8 507.1L1174.8 497.8ZM990.8 542.7L974.1 559.3L974.1 553.1L984.1 543.2ZM1024.1 539.8L1007.5 556.9L1007.5 550.7L1017.5 540.5ZM1056.9 536.1L1040.6 553.6L1040.6 547.4L1050.4 536.9ZM1088.8 531.4L1073.0 549.3L1073.0 543.1L1082.5 532.4ZM1119.8 525.9L1104.4 544.3L1104.4 538.1L1113.7 527.1ZM1149.5 519.6L1134.8 538.4L1134.8 532.2L1143.6 520.9ZM1174.8 513.3L1163.7 531.7L1163.7 525.5L1172.1 514.1ZM606.2 519.8L599.3 499.7L602.0 501.6L606.2 513.6ZM1007.5 556.9L990.8 573.7L990.8 567.5L1000.8 557.4ZM1040.6 553.6L1024.1 570.8L1024.1 564.6L1034.0 554.3ZM1073.0 549.3L1056.9 567.1L1056.9 560.9L1066.5 550.3ZM1104.4 544.3L1088.8 562.4L1088.8 556.2L1098.2 545.3ZM1134.8 538.4L1119.8 556.9L1119.8 550.7L1128.8 539.6ZM1163.7 531.7L1149.5 550.6L1149.5 544.4L1158.1 533.1ZM1174.8 528.8L1174.8 544.3L1174.8 538.1L1174.8 528.8ZM990.8 573.7L973.2 584.8L973.5 581.0L984.1 574.2ZM1024.1 570.8L1005.1 582.5L1006.2 578.6L1017.5 571.5ZM1056.9 567.1L1036.7 579.3L1038.4 575.4L1050.4 567.9ZM1088.8 562.4L1067.6 575.3L1069.9 571.3L1082.5 563.4ZM1119.8 556.9L1097.7 570.5L1100.6 566.3L1113.7 558.1ZM1149.5 550.6L1126.7 564.8L1130.2 560.6L1143.6 551.9ZM1174.8 544.3L1154.4 558.4L1158.4 554.1L1172.1 545.1ZM615.2 527.9L606.2 519.8L611.7 525.0L617.7 529.7ZM667.9 553.9L665.6 549.4L680.4 558.0L682.6 562.6ZM689.2 560.7L688.1 556.2L702.9 564.4L703.8 569.0ZM846.3 585.1L836.0 591.7L834.8 589.9L840.2 584.7ZM836.0 591.7L816.0 582.9L822.0 583.4L834.8 589.9ZM877.4 586.4L865.4 593.4L864.6 591.5L871.1 586.2ZM865.4 593.4L846.3 585.1L852.5 585.4L864.6 591.5ZM909.0 586.8L895.6 594.2L895.0 592.4L902.7 586.7ZM895.6 594.2L877.4 586.4L883.7 586.5L895.0 592.4ZM941.1 586.2L926.2 594.1L925.9 592.3L934.6 586.4ZM926.2 594.1L909.0 586.8L915.4 586.7L925.9 592.3ZM915.4 586.7L924.1 580.9L934.6 586.4L925.9 592.3ZM973.2 584.8L957.0 593.2L957.0 591.4L966.7 585.2ZM957.0 593.2L941.1 586.2L947.5 586.0L957.0 591.4ZM947.5 586.0L957.2 579.9L966.7 585.2L957.0 591.4ZM990.8 573.7L1005.1 582.5L998.7 583.0L990.2 578.0ZM1005.1 582.5L987.8 591.4L988.1 589.6L998.7 583.0ZM987.8 591.4L973.2 584.8L979.6 584.4L988.1 589.6ZM979.6 584.4L990.2 578.0L998.7 583.0L988.1 589.6ZM1024.1 570.8L1036.7 579.3L1030.4 580.0L1023.0 575.2ZM1036.7 579.3L1018.3 588.7L1018.9 586.9L1030.4 580.0ZM1018.3 588.7L1005.1 582.5L1011.5 581.9L1018.9 586.9ZM1011.5 581.9L1023.0 575.2L1030.4 580.0L1018.9 586.9ZM1056.9 567.1L1067.6 575.3L1061.5 576.2L1055.2 571.5ZM1067.6 575.3L1048.3 585.3L1049.3 583.4L1061.5 576.2ZM1048.3 585.3L1036.7 579.3L1042.9 578.6L1049.3 583.4ZM1042.9 578.6L1055.2 571.5L1061.5 576.2L1049.3 583.4ZM1088.8 562.4L1097.7 570.5L1091.8 571.5L1086.7 566.9ZM1097.7 570.5L1077.6 581.0L1078.9 579.1L1091.8 571.5ZM1077.6 581.0L1067.6 575.3L1073.7 574.4L1078.9 579.1ZM1073.7 574.4L1086.7 566.9L1091.8 571.5L1078.9 579.1ZM1119.8 556.9L1126.7 564.8L1121.0 566.0L1117.2 561.5ZM1126.7 564.8L1106.0 576.0L1107.5 574.0L1121.0 566.0ZM1106.0 576.0L1097.7 570.5L1103.6 569.4L1107.5 574.0ZM1103.6 569.4L1117.2 561.5L1121.0 566.0L1107.5 574.0ZM1149.5 550.6L1154.4 558.4L1148.9 559.8L1146.4 555.3ZM1154.4 558.4L1133.2 570.2L1135.0 568.2L1148.9 559.8ZM1133.2 570.2L1126.7 564.8L1132.3 563.6L1135.0 568.2ZM1132.3 563.6L1146.4 555.3L1148.9 559.8L1135.0 568.2ZM1174.8 544.3L1164.9 555.7L1164.9 555.7L1171.3 549.1ZM1164.9 555.7L1156.5 564.5L1158.5 562.4L1164.9 555.7ZM1156.5 564.5L1154.4 558.4L1159.7 557.1L1158.5 562.4ZM1159.7 557.1L1171.3 549.1L1164.9 555.7L1158.5 562.4ZM623.0 533.4L615.2 527.9L622.0 532.9L625.2 535.1ZM689.3 566.0L690.2 563.7L701.9 569.8L695.5 568.0ZM836.0 591.7L821.6 590.5L821.6 590.5L830.2 591.2ZM821.6 590.5L807.4 589.2L813.0 589.7L821.6 590.5ZM865.4 593.4L850.6 592.6L850.6 592.6L859.5 593.1ZM850.6 592.6L836.0 591.7L841.8 592.1L850.6 592.6ZM895.6 594.2L880.4 593.9L880.4 593.9L889.5 594.1ZM880.4 593.9L865.4 593.4L871.4 593.6L880.4 593.9ZM926.2 594.1L910.8 594.2L910.8 594.2L920.0 594.2ZM910.8 594.2L895.6 594.2L901.7 594.2L910.8 594.2ZM957.0 593.2L941.6 593.7L941.6 593.7L950.8 593.4ZM941.6 593.7L926.2 594.1L932.3 594.0L941.6 593.7ZM932.3 594.0L941.3 590.0L950.8 593.4L941.6 593.7ZM973.2 584.8L987.8 591.4L981.6 591.8L972.8 588.6ZM987.8 591.4L972.4 592.4L972.4 592.4L981.6 591.8ZM972.4 592.4L957.0 593.2L963.1 592.9L972.4 592.4ZM963.1 592.9L972.8 588.6L981.6 591.8L972.4 592.4ZM1005.1 582.5L1018.3 588.7L1012.2 589.3L1004.1 586.4ZM1018.3 588.7L1003.1 590.2L1003.1 590.2L1012.2 589.3ZM1003.1 590.2L987.8 591.4L993.9 590.9L1003.1 590.2ZM993.9 590.9L1004.1 586.4L1012.2 589.3L1003.1 590.2ZM1036.7 579.3L1048.3 585.3L1042.4 586.0L1035.0 583.3ZM1048.3 585.3L1033.4 587.1L1033.4 587.1L1042.4 586.0ZM1033.4 587.1L1018.3 588.7L1024.3 588.1L1033.4 587.1ZM1024.3 588.1L1035.0 583.3L1042.4 586.0L1033.4 587.1ZM1067.6 575.3L1077.6 581.0L1071.8 581.9L1065.3 579.3ZM1077.6 581.0L1063.1 583.2L1063.1 583.2L1071.8 581.9ZM1063.1 583.2L1048.3 585.3L1054.2 584.5L1063.1 583.2ZM1054.2 584.5L1065.3 579.3L1071.8 581.9L1063.1 583.2ZM1097.7 570.5L1106.0 576.0L1100.4 577.0L1094.8 574.6ZM1106.0 576.0L1092.0 578.6L1092.0 578.6L1100.4 577.0ZM1092.0 578.6L1077.6 581.0L1083.4 580.1L1092.0 578.6ZM1083.4 580.1L1094.8 574.6L1100.4 577.0L1092.0 578.6ZM1126.7 564.8L1133.2 570.2L1127.9 571.4L1123.2 569.1ZM1133.2 570.2L1119.8 573.2L1119.8 573.2L1127.9 571.4ZM1119.8 573.2L1106.0 576.0L1111.6 574.9L1119.8 573.2ZM1111.6 574.9L1123.2 569.1L1127.9 571.4L1119.8 573.2ZM1154.4 558.4L1156.5 564.5L1154.0 565.1L1150.3 562.8ZM1156.5 564.5L1146.3 567.1L1146.3 567.1L1154.0 565.1ZM1146.3 567.1L1133.2 570.2L1138.5 569.0L1146.3 567.1ZM1138.5 569.0L1150.3 562.8L1154.0 565.1L1146.3 567.1ZM628.7 537.7L635.1 542.0L635.1 542.0L631.2 539.4ZM679.4 562.7L685.3 564.7L691.4 566.7L685.3 564.7ZM699.8 569.2L706.3 571.1L713.0 572.8L706.3 571.1ZM850.6 592.6L836.0 591.7L836.0 591.7L844.7 592.3ZM836.0 591.7L821.6 590.5L827.3 591.0L836.0 591.7ZM880.4 593.9L865.4 593.4L865.4 593.4L874.4 593.7ZM865.4 593.4L850.6 592.6L856.5 592.9L865.4 593.4ZM910.8 594.2L895.6 594.2L895.6 594.2L904.7 594.2ZM895.6 594.2L880.4 593.9L886.5 594.0L895.6 594.2ZM941.6 593.7L926.2 594.1L926.2 594.1L935.4 593.9ZM926.2 594.1L910.8 594.2L917.0 594.2L926.2 594.1ZM917.0 594.2L926.2 594.1L935.4 593.9L926.2 594.1ZM972.4 592.4L957.0 593.2L957.0 593.2L966.2 592.7ZM957.0 593.2L941.6 593.7L947.7 593.5L957.0 593.2ZM947.7 593.5L957.0 593.2L966.2 592.7L957.0 593.2ZM987.8 591.4L1003.1 590.2L997.0 590.7L987.8 591.4ZM1003.1 590.2L987.8 591.4L987.8 591.4L997.0 590.7ZM987.8 591.4L972.4 592.4L978.5 592.0L987.8 591.4ZM978.5 592.0L987.8 591.4L997.0 590.7L987.8 591.4ZM1018.3 588.7L1033.4 587.1L1027.4 587.8L1018.3 588.7ZM1033.4 587.1L1018.3 588.7L1018.3 588.7L1027.4 587.8ZM1018.3 588.7L1003.1 590.2L1009.2 589.6L1018.3 588.7ZM1009.2 589.6L1018.3 588.7L1027.4 587.8L1018.3 588.7ZM1048.3 585.3L1063.1 583.2L1057.2 584.1L1048.3 585.3ZM1063.1 583.2L1048.3 585.3L1048.3 585.3L1057.2 584.1ZM1048.3 585.3L1033.4 587.1L1039.4 586.4L1048.3 585.3ZM1039.4 586.4L1048.3 585.3L1057.2 584.1L1048.3 585.3ZM1077.6 581.0L1092.0 578.6L1086.3 579.6L1077.6 581.0ZM1092.0 578.6L1077.6 581.0L1077.6 581.0L1086.3 579.6ZM1077.6 581.0L1063.1 583.2L1068.9 582.4L1077.6 581.0ZM1068.9 582.4L1077.6 581.0L1086.3 579.6L1077.6 581.0ZM1106.0 576.0L1119.8 573.2L1114.3 574.3L1106.0 576.0ZM1119.8 573.2L1106.0 576.0L1106.0 576.0L1114.3 574.3ZM1106.0 576.0L1092.0 578.6L1097.6 577.6L1106.0 576.0ZM1097.6 577.6L1106.0 576.0L1114.3 574.3L1106.0 576.0ZM1133.2 570.2L1146.3 567.1L1141.1 568.3L1133.2 570.2ZM1146.3 567.1L1133.2 570.2L1133.2 570.2L1141.1 568.3ZM1133.2 570.2L1119.8 573.2L1125.2 572.0L1133.2 570.2ZM1125.2 572.0L1133.2 570.2L1141.1 568.3L1133.2 570.2ZM1156.5 564.5L1156.5 564.5L1156.5 564.5L1156.5 564.5ZM1156.5 564.5L1156.5 564.5L1156.5 564.5L1156.5 564.5ZM1156.5 564.5L1146.3 567.1L1151.5 565.8L1156.5 564.5ZM1151.5 565.8L1156.5 564.5L1156.5 564.5L1156.5 564.5Z" fill="#424242"/>
<path d="M583.9 328.1L597.3 317.3L584.2 332.8L570.5 340.8ZM613.2 373.2L635.1 360.7L632.0 364.2L615.0 374.5ZM973.3 430.5L957.3 451.7L957.2 446.8L968.7 430.7ZM1133.2 389.0L1155.5 404.0L1151.7 404.9L1135.0 392.7ZM1156.5 383.2L1166.1 401.2L1166.1 401.2L1158.5 386.9ZM606.2 395.8L627.1 382.0L620.6 389.6L609.2 397.6ZM609.2 397.6L620.6 389.6L618.6 403.0L613.8 409.6ZM749.7 457.0L735.7 439.1L741.3 440.1L749.7 450.8ZM1073.0 456.3L1056.9 443.1L1063.3 442.2L1073.0 450.1ZM1104.4 451.3L1088.8 438.4L1095.1 437.4L1104.4 445.1ZM1095.1 437.4L1101.4 424.3L1113.7 434.1L1104.4 445.1ZM602.0 408.6L606.2 402.0L610.7 414.0L606.2 420.6ZM735.7 470.1L722.0 452.0L727.4 453.1L735.7 463.9ZM1056.9 443.1L1073.0 456.3L1066.5 457.3L1056.9 449.3ZM1088.8 469.4L1073.0 456.3L1079.3 455.4L1088.8 463.2ZM606.2 426.8L613.8 415.8L613.8 422.0L609.2 428.6ZM609.2 428.6L613.8 422.0L618.6 434.0L613.8 440.6ZM749.7 488.0L735.7 470.1L741.3 471.1L749.7 481.8ZM1073.0 487.3L1056.9 474.1L1063.3 473.2L1073.0 481.1ZM1104.4 482.3L1088.8 469.4L1095.1 468.4L1104.4 476.1ZM1095.1 468.4L1104.4 457.5L1113.7 465.1L1104.4 476.1ZM602.0 439.6L606.2 433.0L610.7 445.0L606.2 451.6ZM735.7 501.1L722.0 483.0L727.4 484.1L735.7 494.9ZM1056.9 474.1L1073.0 487.3L1066.5 488.3L1056.9 480.3ZM1088.8 500.4L1073.0 487.3L1079.3 486.4L1088.8 494.2ZM606.2 457.8L613.8 446.8L613.8 453.0L609.2 459.6ZM609.2 459.6L613.8 453.0L618.6 465.0L613.8 471.6ZM749.7 519.0L735.7 501.1L741.3 502.1L749.7 512.8ZM1073.0 518.3L1056.9 505.1L1063.3 504.2L1073.0 512.1ZM1104.4 513.3L1088.8 500.4L1095.1 499.4L1104.4 507.1ZM1095.1 499.4L1104.4 488.5L1113.7 496.1L1104.4 507.1ZM602.0 470.6L606.2 464.0L610.7 476.0L606.2 482.6ZM735.7 532.1L722.0 514.0L727.4 515.1L735.7 525.9ZM1056.9 505.1L1073.0 518.3L1066.5 519.3L1056.9 511.3ZM1088.8 531.4L1073.0 518.3L1079.3 517.4L1088.8 525.2ZM606.2 488.8L613.8 477.8L613.8 484.0L609.2 490.6ZM609.2 490.6L613.8 484.0L618.6 496.0L613.8 502.6ZM749.7 550.0L735.7 532.1L741.3 533.1L749.7 543.8ZM1073.0 549.3L1056.9 536.1L1063.3 535.2L1073.0 543.1ZM1104.4 544.3L1088.8 531.4L1095.1 530.4L1104.4 538.1ZM1095.1 530.4L1104.4 519.5L1113.7 527.1L1104.4 538.1ZM602.0 501.6L606.2 495.0L610.7 507.0L606.2 513.6ZM735.7 563.1L722.0 545.0L727.4 546.1L735.7 556.9ZM1056.9 536.1L1073.0 549.3L1066.5 550.3L1056.9 542.3ZM1088.8 562.4L1073.0 549.3L1079.3 548.4L1088.8 556.2ZM606.2 519.8L613.8 508.8L613.8 515.0L609.2 521.6ZM609.2 521.6L613.8 515.0L618.6 527.0L622.4 531.8ZM758.9 575.9L735.7 563.1L741.3 564.1L754.9 571.9ZM1067.6 575.3L1056.9 567.1L1063.3 566.2L1069.9 571.3ZM1097.7 570.5L1088.8 562.4L1095.1 561.4L1100.6 566.3ZM1095.1 561.4L1104.4 550.5L1113.7 558.1L1100.6 566.3ZM729.2 576.7L732.4 571.2L736.9 575.3L734.0 577.8Z" fill="#787878"/>
<path d="M584.4 334.2L602.3 324.2L598.9 327.2L584.6 335.7ZM587.5 344.4L606.6 333.8L603.2 336.9L588.1 345.8ZM606.2 395.8L613.2 373.2L615.0 374.5L607.8 391.2ZM1037.2 425.0L1024.1 446.8L1023.8 442.0L1032.7 425.5ZM571.2 358.1L580.1 351.3L574.0 364.4L572.5 370.5ZM575.2 366.4L593.3 354.4L586.1 361.4L576.4 368.5ZM582.7 376.6L602.0 364.0L594.9 371.2L584.6 378.6ZM640.3 413.0L630.8 424.4L630.8 418.2L636.4 411.4ZM661.0 420.6L650.3 432.4L650.3 426.2L656.6 419.1ZM825.3 450.0L809.6 464.3L809.6 458.1L819.0 449.6ZM857.4 451.9L841.3 466.6L841.3 460.4L850.9 451.6ZM1098.5 416.0L1119.8 432.9L1113.7 434.1L1101.4 424.3ZM1163.7 438.7L1149.5 426.6L1155.2 425.3L1163.7 432.5ZM1155.2 425.3L1159.6 412.0L1172.1 421.1L1163.7 432.5ZM573.4 378.8L575.2 372.6L577.1 385.0L575.2 391.2ZM578.6 387.1L582.7 376.6L582.7 382.8L580.1 389.1ZM650.3 432.4L640.3 444.0L640.3 437.8L646.2 430.8ZM672.1 439.7L661.0 451.6L661.0 445.4L667.6 438.3ZM683.9 458.5L672.1 439.7L676.8 441.0L683.9 452.3ZM841.3 466.6L825.3 481.0L825.3 474.8L834.8 466.2ZM1119.8 432.9L1134.8 445.4L1128.8 446.6L1119.8 439.1ZM1174.8 451.3L1163.7 438.7L1169.4 437.3L1174.8 445.1ZM571.2 389.1L572.5 382.9L574.0 395.4L572.5 401.5ZM575.2 397.4L578.6 387.1L578.6 393.3L576.4 399.5ZM582.7 407.6L587.5 397.1L587.5 403.3L584.6 409.6ZM640.3 444.0L630.8 455.4L630.8 449.2L636.4 442.4ZM661.0 451.6L650.3 463.4L650.3 457.2L656.6 450.1ZM825.3 481.0L809.6 495.3L809.6 489.1L819.0 480.6ZM857.4 482.9L841.3 497.6L841.3 491.4L850.9 482.6ZM1104.4 451.3L1119.8 463.9L1113.7 465.1L1104.4 457.5ZM1163.7 469.7L1149.5 457.6L1155.2 456.3L1163.7 463.5ZM1155.2 456.3L1163.7 444.9L1172.1 452.1L1163.7 463.5ZM573.4 409.8L575.2 403.6L577.1 416.0L575.2 422.2ZM578.6 418.1L582.7 407.6L582.7 413.8L580.1 420.1ZM650.3 463.4L640.3 475.0L640.3 468.8L646.2 461.8ZM672.1 470.7L661.0 482.6L661.0 476.4L667.6 469.3ZM683.9 489.5L672.1 470.7L676.8 472.0L683.9 483.3ZM841.3 497.6L825.3 512.0L825.3 505.8L834.8 497.2ZM1119.8 463.9L1134.8 476.4L1128.8 477.6L1119.8 470.1ZM1174.8 482.3L1163.7 469.7L1169.4 468.3L1174.8 476.1ZM571.2 420.1L572.5 413.9L574.0 426.4L572.5 432.5ZM575.2 428.4L578.6 418.1L578.6 424.3L576.4 430.5ZM582.7 438.6L587.5 428.1L587.5 434.3L584.6 440.6ZM640.3 475.0L630.8 486.4L630.8 480.2L636.4 473.4ZM661.0 482.6L650.3 494.4L650.3 488.2L656.6 481.1ZM825.3 512.0L809.6 526.3L809.6 520.1L819.0 511.6ZM857.4 513.9L841.3 528.6L841.3 522.4L850.9 513.6ZM1104.4 482.3L1119.8 494.9L1113.7 496.1L1104.4 488.5ZM1163.7 500.7L1149.5 488.6L1155.2 487.3L1163.7 494.5ZM1155.2 487.3L1163.7 475.9L1172.1 483.1L1163.7 494.5ZM573.4 440.8L575.2 434.6L577.1 447.0L575.2 453.2ZM578.6 449.1L582.7 438.6L582.7 444.8L580.1 451.1ZM650.3 494.4L640.3 506.0L640.3 499.8L646.2 492.8ZM672.1 501.7L661.0 513.6L661.0 507.4L667.6 500.3ZM683.9 520.5L672.1 501.7L676.8 503.0L683.9 514.3ZM841.3 528.6L825.3 543.0L825.3 536.8L834.8 528.2ZM1119.8 494.9L1134.8 507.4L1128.8 508.6L1119.8 501.1ZM1174.8 513.3L1163.7 500.7L1169.4 499.3L1174.8 507.1ZM571.2 451.1L572.5 444.9L574.0 457.4L572.5 463.5ZM575.2 459.4L578.6 449.1L578.6 455.3L576.4 461.5ZM582.7 469.6L587.5 459.1L587.5 465.3L584.6 471.6ZM640.3 506.0L630.8 517.4L630.8 511.2L636.4 504.4ZM661.0 513.6L650.3 525.4L650.3 519.2L656.6 512.1ZM825.3 543.0L809.6 557.3L809.6 551.1L819.0 542.6ZM857.4 544.9L841.3 559.6L841.3 553.4L850.9 544.6ZM1104.4 513.3L1119.8 525.9L1113.7 527.1L1104.4 519.5ZM1163.7 531.7L1149.5 519.6L1155.2 518.3L1163.7 525.5ZM1155.2 518.3L1163.7 506.9L1172.1 514.1L1163.7 525.5ZM573.4 471.8L575.2 465.6L577.1 478.0L575.2 484.2ZM578.6 480.1L582.7 469.6L582.7 475.8L580.1 482.1ZM650.3 525.4L640.3 537.0L640.3 530.8L646.2 523.8ZM672.1 532.7L661.0 544.6L661.0 538.4L667.6 531.3ZM683.9 551.5L672.1 532.7L676.8 534.0L683.9 545.3ZM841.3 559.6L825.3 574.0L825.3 567.8L834.8 559.2ZM1119.8 525.9L1134.8 538.4L1128.8 539.6L1119.8 532.1ZM1174.8 544.3L1163.7 531.7L1169.4 530.3L1174.8 538.1ZM571.2 482.1L572.5 475.9L574.0 488.4L582.2 493.7ZM575.2 490.4L578.6 480.1L578.6 486.3L576.4 492.5ZM582.7 500.6L587.5 490.1L587.5 496.3L584.6 502.6ZM640.3 537.0L645.3 544.8L639.0 540.2L636.4 535.4ZM661.0 544.6L663.9 552.4L658.1 547.9L656.6 543.1ZM825.3 574.0L816.0 582.9L813.2 579.0L819.0 573.6ZM857.4 575.9L846.3 585.1L844.1 581.2L850.9 575.6ZM1104.4 544.3L1119.8 556.9L1113.7 558.1L1104.4 550.5ZM1154.4 558.4L1149.5 550.6L1155.2 549.3L1158.4 554.1ZM1155.2 549.3L1163.7 537.9L1172.1 545.1L1158.4 554.1ZM568.7 469.3L586.5 489.1L586.2 487.1L574.8 475.2ZM570.5 479.9L589.5 499.2L588.7 497.2L576.5 485.7ZM575.2 490.4L595.4 509.1L594.0 507.2L581.1 496.0ZM582.7 500.6L604.0 518.7L602.0 516.8L588.6 506.1ZM593.1 510.4L615.2 527.9L612.7 526.1L598.8 515.7ZM606.2 519.8L629.0 536.6L626.0 534.9L611.7 525.0ZM586.5 489.1L602.3 505.4L601.8 503.5L593.9 494.9ZM589.5 499.2L606.6 515.0L605.5 513.1L596.9 504.8ZM595.4 509.1L613.5 524.4L611.9 522.5L602.6 514.5ZM604.0 518.7L623.0 533.4L620.9 531.6L611.0 523.9ZM615.2 527.9L635.1 542.0L632.5 540.3L622.0 532.9ZM685.3 564.7L684.8 559.4L690.2 563.7L689.3 566.0ZM846.3 585.1L865.4 593.4L859.5 593.1L848.5 588.9ZM600.7 495.6L601.2 500.5L600.9 498.6L600.7 495.6ZM602.3 505.4L604.1 510.2L603.3 508.3L602.3 505.4ZM606.6 515.0L609.7 519.7L608.4 517.8L606.6 515.0ZM613.5 524.4L618.0 528.9L616.1 527.1L613.5 524.4ZM623.0 533.4L628.7 537.7L626.4 536.0L623.0 533.4ZM635.1 542.0L642.0 546.1L639.2 544.5L635.1 542.0Z" fill="#666666"/>
<path d="M602.3 324.2L587.5 344.4L586.9 343.0L598.9 327.2ZM606.6 333.8L593.3 354.4L592.3 353.0L603.2 336.9ZM613.5 343.1L602.0 364.0L600.6 362.7L610.2 346.4ZM623.0 352.1L613.2 373.2L611.5 372.0L619.8 355.5ZM635.1 360.7L627.1 382.0L625.0 380.8L632.0 364.2ZM627.1 382.0L606.2 395.8L607.8 391.2L625.0 380.8ZM615.0 374.5L632.0 364.2L625.0 380.8L607.8 391.2ZM643.5 390.2L666.3 376.4L663.5 380.0L646.0 391.3ZM908.8 432.4L890.3 452.7L890.6 447.8L904.3 432.4ZM1048.3 404.0L1068.3 420.9L1064.0 421.5L1049.2 407.9ZM593.3 354.4L582.7 376.6L581.0 374.6L586.1 361.4ZM602.0 364.0L593.1 386.4L590.8 384.5L594.9 371.2ZM613.2 373.2L606.2 395.8L603.4 394.0L606.4 380.6ZM644.2 414.6L656.4 405.8L656.6 419.1L650.3 426.2ZM841.3 466.6L825.3 450.0L831.6 450.5L841.3 460.4ZM873.8 467.9L857.4 451.9L864.0 452.1L873.8 461.7ZM906.9 468.3L890.3 452.7L896.9 452.8L906.9 462.1ZM940.4 467.8L923.7 452.7L930.4 452.6L940.4 461.6ZM974.1 466.3L957.3 451.7L964.0 451.4L974.1 460.1ZM1030.7 446.2L1038.8 433.4L1050.4 443.9L1040.6 454.4ZM575.2 366.4L578.6 387.1L577.1 385.0L575.2 372.6ZM582.7 376.6L587.5 397.1L585.5 395.1L582.7 382.8ZM593.1 386.4L599.3 406.7L596.7 404.8L593.1 392.6ZM630.8 424.4L640.3 413.0L640.3 419.2L634.5 426.1ZM825.3 481.0L809.6 464.3L815.8 464.8L825.3 474.8ZM857.4 482.9L841.3 466.6L847.7 466.9L857.4 476.7ZM890.3 483.7L873.8 467.9L880.4 468.1L890.3 477.5ZM923.7 483.7L906.9 468.3L913.6 468.3L923.7 477.5ZM957.3 482.7L940.4 467.8L947.2 467.6L957.3 476.5ZM990.8 449.7L1007.5 463.9L1000.8 464.4L990.8 455.9ZM578.6 387.1L582.7 407.6L581.0 405.6L578.6 393.3ZM587.5 397.1L593.1 417.4L590.8 415.5L587.5 403.3ZM599.3 406.7L606.2 426.8L603.4 425.0L599.3 412.9ZM644.2 445.6L650.3 438.6L656.6 450.1L650.3 457.2ZM841.3 497.6L825.3 481.0L831.6 481.5L841.3 491.4ZM873.8 498.9L857.4 482.9L864.0 483.1L873.8 492.7ZM906.9 499.3L890.3 483.7L896.9 483.8L906.9 493.1ZM940.4 498.8L923.7 483.7L930.4 483.6L940.4 492.6ZM974.1 497.3L957.3 482.7L964.0 482.4L974.1 491.1ZM1030.7 477.2L1040.6 466.8L1050.4 474.9L1040.6 485.4ZM575.2 397.4L578.6 418.1L577.1 416.0L575.2 403.6ZM582.7 407.6L587.5 428.1L585.5 426.1L582.7 413.8ZM593.1 417.4L599.3 437.7L596.7 435.8L593.1 423.6ZM630.8 455.4L640.3 444.0L640.3 450.2L634.5 457.1ZM825.3 512.0L809.6 495.3L815.8 495.8L825.3 505.8ZM857.4 513.9L841.3 497.6L847.7 497.9L857.4 507.7ZM890.3 514.7L873.8 498.9L880.4 499.1L890.3 508.5ZM923.7 514.7L906.9 499.3L913.6 499.3L923.7 508.5ZM957.3 513.7L940.4 498.8L947.2 498.6L957.3 507.5ZM990.8 480.7L1007.5 494.9L1000.8 495.4L990.8 486.9ZM578.6 418.1L582.7 438.6L581.0 436.6L578.6 424.3ZM587.5 428.1L593.1 448.4L590.8 446.5L587.5 434.3ZM599.3 437.7L606.2 457.8L603.4 456.0L599.3 443.9ZM644.2 476.6L650.3 469.6L656.6 481.1L650.3 488.2ZM841.3 528.6L825.3 512.0L831.6 512.5L841.3 522.4ZM873.8 529.9L857.4 513.9L864.0 514.1L873.8 523.7ZM906.9 530.3L890.3 514.7L896.9 514.8L906.9 524.1ZM940.4 529.8L923.7 514.7L930.4 514.6L940.4 523.6ZM974.1 528.3L957.3 513.7L964.0 513.4L974.1 522.1ZM1030.7 508.2L1040.6 497.8L1050.4 505.9L1040.6 516.4ZM575.2 428.4L578.6 449.1L577.1 447.0L575.2 434.6ZM582.7 438.6L587.5 459.1L585.5 457.1L582.7 444.8ZM593.1 448.4L599.3 468.7L596.7 466.8L593.1 454.6ZM630.8 486.4L640.3 475.0L640.3 481.2L634.5 488.1ZM825.3 543.0L809.6 526.3L815.8 526.8L825.3 536.8ZM857.4 544.9L841.3 528.6L847.7 528.9L857.4 538.7ZM890.3 545.7L873.8 529.9L880.4 530.1L890.3 539.5ZM923.7 545.7L906.9 530.3L913.6 530.3L923.7 539.5ZM957.3 544.7L940.4 529.8L947.2 529.6L957.3 538.5ZM990.8 511.7L1007.5 525.9L1000.8 526.4L990.8 517.9ZM578.6 449.1L582.7 469.6L581.0 467.6L578.6 455.3ZM587.5 459.1L593.1 479.4L590.8 477.5L587.5 465.3ZM599.3 468.7L606.2 488.8L603.4 487.0L599.3 474.9ZM644.2 507.6L650.3 500.6L656.6 512.1L650.3 519.2ZM841.3 559.6L825.3 543.0L831.6 543.5L841.3 553.4ZM873.8 560.9L857.4 544.9L864.0 545.1L873.8 554.7ZM906.9 561.3L890.3 545.7L896.9 545.8L906.9 555.1ZM940.4 560.8L923.7 545.7L930.4 545.6L940.4 554.6ZM974.1 559.3L957.3 544.7L964.0 544.4L974.1 553.1ZM1030.7 539.2L1040.6 528.8L1050.4 536.9L1040.6 547.4ZM575.2 459.4L578.6 480.1L577.1 478.0L575.2 465.6ZM582.7 469.6L587.5 490.1L585.5 488.1L582.7 475.8ZM593.1 479.4L599.3 499.7L596.7 497.8L593.1 485.6ZM630.8 517.4L640.3 506.0L640.3 512.2L634.5 519.1ZM825.3 574.0L809.6 557.3L815.8 557.8L825.3 567.8ZM857.4 575.9L841.3 559.6L847.7 559.9L857.4 569.7ZM890.3 576.7L873.8 560.9L880.4 561.1L890.3 570.5ZM923.7 576.7L906.9 561.3L913.6 561.3L923.7 570.5ZM957.3 575.7L940.4 560.8L947.2 560.6L957.3 569.5ZM990.8 542.7L1007.5 556.9L1000.8 557.4L990.8 548.9ZM578.6 480.1L582.7 500.6L581.0 498.6L578.6 486.3ZM587.5 490.1L593.1 510.4L590.8 508.5L587.5 496.3ZM599.3 499.7L606.2 519.8L603.4 518.0L599.3 505.9ZM644.2 538.6L650.3 531.6L656.6 543.1L658.1 547.9ZM846.3 585.1L825.3 574.0L831.6 574.5L844.1 581.2ZM877.4 586.4L857.4 575.9L864.0 576.1L875.8 582.6ZM909.0 586.8L890.3 576.7L896.9 576.8L908.1 583.0ZM941.1 586.2L923.7 576.7L930.4 576.6L940.8 582.4ZM973.2 584.8L957.3 575.7L964.0 575.4L973.5 581.0ZM1030.7 570.2L1040.6 559.8L1050.4 567.9L1038.4 575.4ZM758.9 575.9L764.2 567.6L767.2 572.0L764.4 576.8ZM1126.7 564.8L1149.5 550.6L1146.4 555.3L1132.3 563.6ZM779.9 585.8L786.8 579.8L790.2 583.8L785.3 586.5ZM1106.0 576.0L1126.7 564.8L1123.2 569.1L1111.6 574.9ZM766.7 583.8L779.9 585.8L779.9 585.8L772.0 584.6ZM1119.8 573.2L1133.2 570.2L1133.2 570.2L1125.2 572.0Z" fill="#8a8a8a"/>
<path d="M570.5 355.9L584.4 334.2L584.6 335.7L572.2 351.5ZM613.8 415.8L606.2 395.8L609.2 397.6L613.8 409.6ZM974.1 466.3L957.3 482.7L957.3 476.5L967.3 466.7ZM613.8 446.8L606.2 426.8L609.2 428.6L613.8 440.6ZM974.1 497.3L957.3 513.7L957.3 507.5L967.3 497.7ZM613.8 477.8L606.2 457.8L609.2 459.6L613.8 471.6ZM974.1 528.3L957.3 544.7L957.3 538.5L967.3 528.7ZM613.8 508.8L606.2 488.8L609.2 490.6L613.8 502.6ZM974.1 559.3L957.3 575.7L957.3 569.5L967.3 559.7ZM629.0 536.6L606.2 519.8L609.2 521.6L622.4 531.8ZM712.5 566.8L712.7 562.3L727.3 570.1L726.9 574.7ZM737.6 572.2L739.1 567.6L753.5 575.0L751.8 579.7ZM883.7 586.5L891.3 581.0L902.7 586.7L895.0 592.4ZM957.3 575.7L973.2 584.8L966.7 585.2L957.2 579.9ZM635.1 542.0L629.0 536.6L635.6 541.4L637.8 543.6ZM710.7 572.2L712.7 569.9L724.5 575.6L717.5 574.0ZM734.0 577.8L736.9 575.3L748.8 580.7L741.3 579.3ZM758.9 582.5L762.8 579.9L774.6 585.0L766.7 583.8ZM871.4 593.6L878.9 590.2L889.5 594.1L880.4 593.9ZM901.7 594.2L910.0 590.5L920.0 594.2L910.8 594.2ZM941.1 586.2L957.0 593.2L950.8 593.4L941.3 590.0ZM722.1 575.1L729.2 576.7L736.4 578.3L729.2 576.7ZM746.3 580.3L753.8 581.7L761.5 583.0L753.8 581.7ZM886.5 594.0L895.6 594.2L904.7 594.2L895.6 594.2ZM957.0 593.2L972.4 592.4L966.2 592.7L957.0 593.2Z" fill="#484848"/>
<path d="M584.6 335.7L598.9 327.2L586.9 343.0L572.2 351.5ZM588.1 345.8L603.2 336.9L592.3 353.0L576.9 361.9ZM627.1 382.0L649.5 368.8L646.6 372.4L629.3 383.2ZM640.3 413.0L643.5 390.2L646.0 391.3L641.7 408.3ZM1106.0 394.7L1127.7 410.4L1123.7 411.2L1107.5 398.5ZM779.0 461.1L764.2 443.6L770.1 444.4L779.0 454.9ZM1037.2 425.0L1056.9 443.1L1050.4 443.9L1038.8 433.4ZM1040.6 460.6L1024.1 446.8L1030.7 446.2L1040.6 454.4ZM613.8 415.8L622.0 404.7L622.0 410.9L617.0 417.6ZM617.0 417.6L622.0 410.9L627.2 422.7L622.0 429.5ZM764.2 474.6L749.7 457.0L755.5 457.9L764.2 468.4ZM1024.1 446.8L1040.6 460.6L1034.0 461.3L1024.1 453.0ZM1056.9 474.1L1040.6 460.6L1047.1 459.8L1056.9 467.9ZM1079.3 455.4L1088.8 444.6L1098.2 452.3L1088.8 463.2ZM779.0 492.1L764.2 474.6L770.1 475.4L779.0 485.9ZM1040.6 460.6L1056.9 474.1L1050.4 474.9L1040.6 466.8ZM1040.6 491.6L1024.1 477.8L1030.7 477.2L1040.6 485.4ZM613.8 446.8L622.0 435.7L622.0 441.9L617.0 448.6ZM617.0 448.6L622.0 441.9L627.2 453.7L622.0 460.5ZM764.2 505.6L749.7 488.0L755.5 488.9L764.2 499.4ZM1024.1 477.8L1040.6 491.6L1034.0 492.3L1024.1 484.0ZM1056.9 505.1L1040.6 491.6L1047.1 490.8L1056.9 498.9ZM1079.3 486.4L1088.8 475.6L1098.2 483.3L1088.8 494.2ZM779.0 523.1L764.2 505.6L770.1 506.4L779.0 516.9ZM1040.6 491.6L1056.9 505.1L1050.4 505.9L1040.6 497.8ZM1040.6 522.6L1024.1 508.8L1030.7 508.2L1040.6 516.4ZM613.8 477.8L622.0 466.7L622.0 472.9L617.0 479.6ZM617.0 479.6L622.0 472.9L627.2 484.7L622.0 491.5ZM764.2 536.6L749.7 519.0L755.5 519.9L764.2 530.4ZM1024.1 508.8L1040.6 522.6L1034.0 523.3L1024.1 515.0ZM1056.9 536.1L1040.6 522.6L1047.1 521.8L1056.9 529.9ZM1079.3 517.4L1088.8 506.6L1098.2 514.3L1088.8 525.2ZM779.0 554.1L764.2 536.6L770.1 537.4L779.0 547.9ZM1040.6 522.6L1056.9 536.1L1050.4 536.9L1040.6 528.8ZM1040.6 553.6L1024.1 539.8L1030.7 539.2L1040.6 547.4ZM613.8 508.8L622.0 497.7L622.0 503.9L617.0 510.6ZM617.0 510.6L622.0 503.9L627.2 515.7L622.0 522.5ZM764.2 567.6L749.7 550.0L755.5 550.9L764.2 561.4ZM1024.1 539.8L1040.6 553.6L1034.0 554.3L1024.1 546.0ZM1056.9 567.1L1040.6 553.6L1047.1 552.8L1056.9 560.9ZM1079.3 548.4L1088.8 537.6L1098.2 545.3L1088.8 556.2ZM786.8 579.8L764.2 567.6L770.1 568.4L783.4 575.9ZM1040.6 553.6L1056.9 567.1L1050.4 567.9L1040.6 559.8ZM1036.7 579.3L1024.1 570.8L1030.7 570.2L1038.4 575.4ZM732.4 571.2L735.7 563.1L739.1 567.6L737.6 572.2ZM741.3 579.3L753.8 581.7L753.8 581.7L746.3 580.3Z" fill="#7e7e7e"/>
<path d="M575.2 366.4L587.5 344.4L588.1 345.8L576.9 361.9ZM1098.5 416.0L1088.8 438.4L1088.2 433.6L1094.4 416.8ZM630.8 424.4L622.0 404.7L625.4 406.4L630.8 418.2ZM957.3 451.7L940.4 467.8L940.4 461.6L950.5 451.9ZM622.0 435.7L613.8 415.8L617.0 417.6L622.0 429.5ZM1174.8 420.3L1174.8 435.8L1174.8 435.8L1174.8 426.5ZM630.8 455.4L622.0 435.7L625.4 437.4L630.8 449.2ZM957.3 482.7L940.4 498.8L940.4 492.6L950.5 482.9ZM622.0 466.7L613.8 446.8L617.0 448.6L622.0 460.5ZM1174.8 451.3L1174.8 466.8L1174.8 466.8L1174.8 457.5ZM630.8 486.4L622.0 466.7L625.4 468.4L630.8 480.2ZM957.3 513.7L940.4 529.8L940.4 523.6L950.5 513.9ZM622.0 497.7L613.8 477.8L617.0 479.6L622.0 491.5ZM1174.8 482.3L1174.8 497.8L1174.8 497.8L1174.8 488.5ZM630.8 517.4L622.0 497.7L625.4 499.4L630.8 511.2ZM957.3 544.7L940.4 560.8L940.4 554.6L950.5 544.9ZM622.0 528.7L613.8 508.8L617.0 510.6L622.0 522.5ZM1174.8 513.3L1174.8 528.8L1174.8 528.8L1174.8 519.5ZM645.3 544.8L622.0 528.7L625.4 530.4L639.0 540.2ZM957.3 575.7L941.1 586.2L940.8 582.4L950.5 575.9ZM629.0 536.6L622.0 528.7L627.2 533.7L632.1 538.3ZM764.4 576.8L767.2 572.0L781.1 579.1L778.2 583.9ZM792.6 580.5L796.6 575.6L810.1 582.3L805.9 587.3ZM822.0 583.4L827.3 578.3L840.2 584.7L834.8 589.9ZM852.5 585.4L858.9 580.1L871.1 586.2L864.6 591.5ZM923.7 576.7L941.1 586.2L934.6 586.4L924.1 580.9ZM785.3 586.5L790.2 583.8L801.8 588.6L793.5 587.6ZM813.0 589.7L818.8 586.8L830.2 591.2L821.6 590.5ZM841.8 592.1L848.5 588.9L859.5 593.1L850.6 592.6ZM642.0 546.1L649.5 550.1L649.5 550.1L644.9 547.7ZM772.0 584.6L779.9 585.8L788.0 586.9L779.9 585.8ZM799.0 588.2L807.4 589.2L815.9 590.0L807.4 589.2ZM827.3 591.0L836.0 591.7L844.7 592.3L836.0 591.7ZM856.5 592.9L865.4 593.4L874.4 593.7L865.4 593.4ZM926.2 594.1L941.6 593.7L935.4 593.9L926.2 594.1Z" fill="#4e4e4e"/>
<path d="M593.3 354.4L613.5 343.1L610.2 346.4L594.4 355.7ZM602.0 364.0L623.0 352.1L619.8 355.5L603.4 365.3ZM1005.4 428.2L990.8 449.7L990.7 444.8L1000.9 428.5ZM576.4 368.5L586.1 361.4L581.0 374.6L578.6 380.9ZM584.6 378.6L594.9 371.2L590.8 384.5L587.5 390.9ZM593.1 386.4L613.2 373.2L606.4 380.6L595.5 388.4ZM683.9 427.5L672.1 439.7L672.1 433.5L679.1 426.2ZM708.8 433.7L696.1 446.2L696.1 440.0L703.7 432.6ZM696.1 446.2L683.9 427.5L688.7 428.8L696.1 440.0ZM735.7 439.1L722.0 452.0L722.0 445.8L730.2 438.1ZM764.2 443.6L749.7 457.0L749.7 450.8L758.4 442.8ZM794.1 447.3L779.0 461.1L779.0 454.9L788.0 446.6ZM1134.8 445.4L1119.8 432.9L1125.8 431.7L1134.8 439.2ZM1125.8 431.7L1131.2 418.5L1143.6 427.9L1134.8 439.2ZM580.1 389.1L582.7 382.8L585.5 395.1L582.7 401.4ZM587.5 397.1L593.1 386.4L593.1 392.6L589.7 399.0ZM589.7 399.0L593.1 392.6L596.7 404.8L593.1 411.2ZM696.1 446.2L683.9 458.5L683.9 452.3L691.2 445.0ZM722.0 452.0L708.8 464.7L708.8 458.5L716.7 450.9ZM708.8 464.7L696.1 446.2L701.2 447.5L708.8 458.5ZM749.7 457.0L735.7 470.1L735.7 463.9L744.1 456.1ZM779.0 461.1L764.2 474.6L764.2 468.4L773.0 460.3ZM809.6 464.3L794.1 478.3L794.1 472.1L803.4 463.7ZM1088.8 438.4L1104.4 451.3L1098.2 452.3L1088.8 444.6ZM1149.5 457.6L1134.8 445.4L1140.7 444.1L1149.5 451.4ZM1140.7 444.1L1149.5 432.8L1158.1 440.1L1149.5 451.4ZM576.4 399.5L578.6 393.3L581.0 405.6L578.6 411.9ZM584.6 409.6L587.5 403.3L590.8 415.5L587.5 421.9ZM593.1 417.4L599.3 406.7L599.3 412.9L595.5 419.4ZM683.9 458.5L672.1 470.7L672.1 464.5L679.1 457.2ZM708.8 464.7L696.1 477.2L696.1 471.0L703.7 463.6ZM696.1 477.2L683.9 458.5L688.7 459.8L696.1 471.0ZM735.7 470.1L722.0 483.0L722.0 476.8L730.2 469.1ZM764.2 474.6L749.7 488.0L749.7 481.8L758.4 473.8ZM794.1 478.3L779.0 492.1L779.0 485.9L788.0 477.6ZM1134.8 476.4L1119.8 463.9L1125.8 462.7L1134.8 470.2ZM1125.8 462.7L1134.8 451.6L1143.6 458.9L1134.8 470.2ZM580.1 420.1L582.7 413.8L585.5 426.1L582.7 432.4ZM587.5 428.1L593.1 417.4L593.1 423.6L589.7 430.0ZM589.7 430.0L593.1 423.6L596.7 435.8L593.1 442.2ZM696.1 477.2L683.9 489.5L683.9 483.3L691.2 476.0ZM722.0 483.0L708.8 495.7L708.8 489.5L716.7 481.9ZM708.8 495.7L696.1 477.2L701.2 478.5L708.8 489.5ZM749.7 488.0L735.7 501.1L735.7 494.9L744.1 487.1ZM779.0 492.1L764.2 505.6L764.2 499.4L773.0 491.3ZM809.6 495.3L794.1 509.3L794.1 503.1L803.4 494.7ZM1088.8 469.4L1104.4 482.3L1098.2 483.3L1088.8 475.6ZM1149.5 488.6L1134.8 476.4L1140.7 475.1L1149.5 482.4ZM1140.7 475.1L1149.5 463.8L1158.1 471.1L1149.5 482.4ZM576.4 430.5L578.6 424.3L581.0 436.6L578.6 442.9ZM584.6 440.6L587.5 434.3L590.8 446.5L587.5 452.9ZM593.1 448.4L599.3 437.7L599.3 443.9L595.5 450.4ZM683.9 489.5L672.1 501.7L672.1 495.5L679.1 488.2ZM708.8 495.7L696.1 508.2L696.1 502.0L703.7 494.6ZM696.1 508.2L683.9 489.5L688.7 490.8L696.1 502.0ZM735.7 501.1L722.0 514.0L722.0 507.8L730.2 500.1ZM764.2 505.6L749.7 519.0L749.7 512.8L758.4 504.8ZM794.1 509.3L779.0 523.1L779.0 516.9L788.0 508.6ZM1134.8 507.4L1119.8 494.9L1125.8 493.7L1134.8 501.2ZM1125.8 493.7L1134.8 482.6L1143.6 489.9L1134.8 501.2ZM580.1 451.1L582.7 444.8L585.5 457.1L582.7 463.4ZM587.5 459.1L593.1 448.4L593.1 454.6L589.7 461.0ZM589.7 461.0L593.1 454.6L596.7 466.8L593.1 473.2ZM696.1 508.2L683.9 520.5L683.9 514.3L691.2 507.0ZM722.0 514.0L708.8 526.7L708.8 520.5L716.7 512.9ZM708.8 526.7L696.1 508.2L701.2 509.5L708.8 520.5ZM749.7 519.0L735.7 532.1L735.7 525.9L744.1 518.1ZM779.0 523.1L764.2 536.6L764.2 530.4L773.0 522.3ZM809.6 526.3L794.1 540.3L794.1 534.1L803.4 525.7ZM1088.8 500.4L1104.4 513.3L1098.2 514.3L1088.8 506.6ZM1149.5 519.6L1134.8 507.4L1140.7 506.1L1149.5 513.4ZM1140.7 506.1L1149.5 494.8L1158.1 502.1L1149.5 513.4ZM576.4 461.5L578.6 455.3L581.0 467.6L578.6 473.9ZM584.6 471.6L587.5 465.3L590.8 477.5L587.5 483.9ZM593.1 479.4L599.3 468.7L599.3 474.9L595.5 481.4ZM683.9 520.5L672.1 532.7L672.1 526.5L679.1 519.2ZM708.8 526.7L696.1 539.2L696.1 533.0L703.7 525.6ZM696.1 539.2L683.9 520.5L688.7 521.8L696.1 533.0ZM735.7 532.1L722.0 545.0L722.0 538.8L730.2 531.1ZM764.2 536.6L749.7 550.0L749.7 543.8L758.4 535.8ZM794.1 540.3L779.0 554.1L779.0 547.9L788.0 539.6ZM1134.8 538.4L1119.8 525.9L1125.8 524.7L1134.8 532.2ZM1125.8 524.7L1134.8 513.6L1143.6 520.9L1134.8 532.2ZM580.1 482.1L582.7 475.8L585.5 488.1L582.7 494.4ZM587.5 490.1L593.1 479.4L593.1 485.6L589.7 492.0ZM589.7 492.0L593.1 485.6L596.7 497.8L593.1 504.2ZM696.1 539.2L683.9 551.5L683.9 545.3L691.2 538.0ZM722.0 545.0L708.8 557.7L708.8 551.5L716.7 543.9ZM708.8 557.7L696.1 539.2L701.2 540.5L708.8 551.5ZM749.7 550.0L735.7 563.1L735.7 556.9L744.1 549.1ZM779.0 554.1L764.2 567.6L764.2 561.4L773.0 553.3ZM809.6 557.3L794.1 571.3L794.1 565.1L803.4 556.7ZM1088.8 531.4L1104.4 544.3L1098.2 545.3L1088.8 537.6ZM1149.5 550.6L1134.8 538.4L1140.7 537.1L1149.5 544.4ZM1140.7 537.1L1149.5 525.8L1158.1 533.1L1149.5 544.4ZM576.4 492.5L578.6 486.3L581.0 498.6L588.1 503.8ZM584.6 502.6L587.5 496.3L590.8 508.5L596.9 513.5ZM593.1 510.4L599.3 499.7L599.3 505.9L595.5 512.4ZM683.9 551.5L684.8 559.4L679.3 555.0L679.1 550.2ZM708.8 557.7L707.7 565.6L702.7 561.4L703.7 556.6ZM707.7 565.6L683.9 551.5L688.7 552.8L702.7 561.4ZM735.7 563.1L732.4 571.2L727.9 567.1L730.2 562.1ZM764.2 567.6L758.9 575.9L754.9 571.9L758.4 566.8ZM794.1 571.3L786.8 579.8L783.4 575.9L788.0 570.6ZM1126.7 564.8L1119.8 556.9L1125.8 555.7L1130.2 560.6ZM1125.8 555.7L1134.8 544.6L1143.6 551.9L1130.2 560.6ZM622.0 528.7L645.3 544.8L641.8 543.2L627.2 533.7ZM640.3 537.0L663.9 552.4L660.0 550.9L645.2 541.8ZM684.8 559.4L683.9 551.5L688.1 556.2L689.2 560.7ZM794.1 571.3L816.0 582.9L810.1 582.3L796.6 575.6ZM825.3 574.0L846.3 585.1L840.2 584.7L827.3 578.3ZM629.0 536.6L649.5 550.1L646.5 548.5L635.6 541.4ZM645.3 544.8L666.3 557.7L662.8 556.2L651.5 549.4ZM786.8 579.8L807.4 589.2L801.8 588.6L790.2 583.8ZM816.0 582.9L836.0 591.7L830.2 591.2L818.8 586.8ZM649.5 550.1L657.6 554.0L654.3 552.4L649.5 550.1ZM666.3 557.7L675.5 561.3L671.8 559.9L666.3 557.7ZM695.5 568.0L706.3 571.1L706.3 571.1L699.8 569.2ZM807.4 589.2L821.6 590.5L815.9 590.0L807.4 589.2ZM836.0 591.7L850.6 592.6L844.7 592.3L836.0 591.7Z" fill="#6c6c6c"/>
<path d="M582.7 376.6L593.3 354.4L594.4 355.7L584.4 372.1ZM568.7 344.2L583.9 328.1L576.4 334.6L568.7 344.2ZM568.7 345.3L568.7 359.7L568.7 353.5L568.7 344.2ZM570.5 355.9L569.2 366.1L569.2 359.9L569.9 353.8ZM923.7 452.7L906.9 468.3L906.9 462.1L917.0 452.8ZM1155.5 404.0L1174.8 420.3L1172.1 421.1L1159.6 412.0ZM568.7 359.7L568.7 345.3L568.7 351.5L568.7 359.7ZM569.2 366.1L568.7 376.3L568.7 370.1L568.9 364.0ZM572.5 376.7L570.5 386.9L570.5 380.7L571.6 374.6ZM640.3 444.0L630.8 424.4L634.5 426.1L640.3 437.8ZM940.4 467.8L923.7 483.7L923.7 477.5L933.7 468.0ZM568.7 375.2L568.7 359.7L568.7 365.9L568.7 375.2ZM568.7 376.3L568.7 390.7L568.7 384.5L568.7 375.2ZM570.5 386.9L569.2 397.1L569.2 390.9L569.9 384.8ZM923.7 483.7L906.9 499.3L906.9 493.1L917.0 483.8ZM1163.7 438.7L1174.8 451.3L1172.1 452.1L1163.7 444.9ZM568.7 390.7L568.7 376.3L568.7 382.5L568.7 390.7ZM569.2 397.1L568.7 407.3L568.7 401.1L568.9 395.0ZM572.5 407.7L570.5 417.9L570.5 411.7L571.6 405.6ZM640.3 475.0L630.8 455.4L634.5 457.1L640.3 468.8ZM940.4 498.8L923.7 514.7L923.7 508.5L933.7 499.0ZM568.7 406.2L568.7 390.7L568.7 396.9L568.7 406.2ZM568.7 407.3L568.7 421.7L568.7 415.5L568.7 406.2ZM570.5 417.9L569.2 428.1L569.2 421.9L569.9 415.8ZM923.7 514.7L906.9 530.3L906.9 524.1L917.0 514.8ZM1163.7 469.7L1174.8 482.3L1172.1 483.1L1163.7 475.9ZM568.7 421.7L568.7 407.3L568.7 413.5L568.7 421.7ZM569.2 428.1L568.7 438.3L568.7 432.1L568.9 426.0ZM572.5 438.7L570.5 448.9L570.5 442.7L571.6 436.6ZM640.3 506.0L630.8 486.4L634.5 488.1L640.3 499.8ZM940.4 529.8L923.7 545.7L923.7 539.5L933.7 530.0ZM568.7 437.2L568.7 421.7L568.7 427.9L568.7 437.2ZM568.7 438.3L568.7 452.7L568.7 446.5L568.7 437.2ZM570.5 448.9L569.2 459.1L569.2 452.9L569.9 446.8ZM923.7 545.7L906.9 561.3L906.9 555.1L917.0 545.8ZM1163.7 500.7L1174.8 513.3L1172.1 514.1L1163.7 506.9ZM568.7 452.7L568.7 438.3L568.7 444.5L568.7 452.7ZM569.2 459.1L568.7 469.3L568.7 463.1L568.9 457.0ZM572.5 469.7L570.5 479.9L570.5 473.7L571.6 467.6ZM640.3 537.0L630.8 517.4L634.5 519.1L640.3 530.8ZM940.4 560.8L923.7 576.7L923.7 570.5L933.7 561.0ZM568.7 468.2L568.7 452.7L568.7 458.9L568.7 468.2ZM568.7 469.3L586.0 483.0L578.5 477.1L568.7 468.2ZM570.5 479.9L586.5 489.1L579.0 483.4L569.9 477.8ZM923.7 576.7L909.0 586.8L908.1 583.0L917.0 576.8ZM1163.7 531.7L1174.8 544.3L1172.1 545.1L1163.7 537.9ZM649.5 550.1L645.3 544.8L651.5 549.4L652.7 551.7ZM909.0 586.8L926.2 594.1L920.0 594.2L910.0 590.5Z" fill="#545454"/>
<path d="M593.1 386.4L602.0 364.0L603.4 365.3L594.7 381.8ZM1068.3 420.9L1056.9 443.1L1056.4 438.2L1064.0 421.5ZM568.7 344.2L576.4 334.6L568.7 344.2L568.7 353.5ZM568.7 345.3L584.4 334.2L576.9 340.9L568.8 347.4ZM575.2 366.4L572.5 376.7L572.5 370.5L574.0 364.4ZM582.7 376.6L578.6 387.1L578.6 380.9L581.0 374.6ZM593.1 386.4L587.5 397.1L587.5 390.9L590.8 384.5ZM606.2 395.8L599.3 406.7L599.3 400.5L603.4 394.0ZM650.3 432.4L640.3 413.0L644.2 414.6L650.3 426.2ZM569.2 366.1L570.5 355.9L570.5 362.1L569.6 368.3ZM578.6 387.1L575.2 397.4L575.2 391.2L577.1 385.0ZM587.5 397.1L582.7 407.6L582.7 401.4L585.5 395.1ZM599.3 406.7L593.1 417.4L593.1 411.2L596.7 404.8ZM613.8 415.8L606.2 426.8L606.2 420.6L610.7 414.0ZM661.0 451.6L650.3 432.4L654.5 433.9L661.0 445.4ZM906.9 468.3L890.3 483.7L890.3 477.5L900.3 468.3ZM1149.5 426.6L1163.7 438.7L1158.1 440.1L1149.5 432.8ZM568.7 375.2L568.7 365.9L568.7 375.2L568.7 384.5ZM568.7 376.3L569.2 366.1L569.2 372.3L568.8 378.4ZM575.2 397.4L572.5 407.7L572.5 401.5L574.0 395.4ZM582.7 407.6L578.6 418.1L578.6 411.9L581.0 405.6ZM593.1 417.4L587.5 428.1L587.5 421.9L590.8 415.5ZM606.2 426.8L599.3 437.7L599.3 431.5L603.4 425.0ZM650.3 463.4L640.3 444.0L644.2 445.6L650.3 457.2ZM569.2 397.1L570.5 386.9L570.5 393.1L569.6 399.3ZM578.6 418.1L575.2 428.4L575.2 422.2L577.1 416.0ZM587.5 428.1L582.7 438.6L582.7 432.4L585.5 426.1ZM599.3 437.7L593.1 448.4L593.1 442.2L596.7 435.8ZM613.8 446.8L606.2 457.8L606.2 451.6L610.7 445.0ZM661.0 482.6L650.3 463.4L654.5 464.9L661.0 476.4ZM906.9 499.3L890.3 514.7L890.3 508.5L900.3 499.3ZM1149.5 457.6L1163.7 469.7L1158.1 471.1L1149.5 463.8ZM568.7 406.2L568.7 396.9L568.7 406.2L568.7 415.5ZM568.7 407.3L569.2 397.1L569.2 403.3L568.8 409.4ZM575.2 428.4L572.5 438.7L572.5 432.5L574.0 426.4ZM582.7 438.6L578.6 449.1L578.6 442.9L581.0 436.6ZM593.1 448.4L587.5 459.1L587.5 452.9L590.8 446.5ZM606.2 457.8L599.3 468.7L599.3 462.5L603.4 456.0ZM650.3 494.4L640.3 475.0L644.2 476.6L650.3 488.2ZM569.2 428.1L570.5 417.9L570.5 424.1L569.6 430.3ZM578.6 449.1L575.2 459.4L575.2 453.2L577.1 447.0ZM587.5 459.1L582.7 469.6L582.7 463.4L585.5 457.1ZM599.3 468.7L593.1 479.4L593.1 473.2L596.7 466.8ZM613.8 477.8L606.2 488.8L606.2 482.6L610.7 476.0ZM661.0 513.6L650.3 494.4L654.5 495.9L661.0 507.4ZM906.9 530.3L890.3 545.7L890.3 539.5L900.3 530.3ZM1149.5 488.6L1163.7 500.7L1158.1 502.1L1149.5 494.8ZM568.7 437.2L568.7 427.9L568.7 437.2L568.7 446.5ZM568.7 438.3L569.2 428.1L569.2 434.3L568.8 440.4ZM575.2 459.4L572.5 469.7L572.5 463.5L574.0 457.4ZM582.7 469.6L578.6 480.1L578.6 473.9L581.0 467.6ZM593.1 479.4L587.5 490.1L587.5 483.9L590.8 477.5ZM606.2 488.8L599.3 499.7L599.3 493.5L603.4 487.0ZM650.3 525.4L640.3 506.0L644.2 507.6L650.3 519.2ZM569.2 459.1L570.5 448.9L570.5 455.1L569.6 461.3ZM578.6 480.1L575.2 490.4L575.2 484.2L577.1 478.0ZM587.5 490.1L582.7 500.6L582.7 494.4L585.5 488.1ZM599.3 499.7L593.1 510.4L593.1 504.2L596.7 497.8ZM613.8 508.8L606.2 519.8L606.2 513.6L610.7 507.0ZM661.0 544.6L650.3 525.4L654.5 526.9L661.0 538.4ZM906.9 561.3L890.3 576.7L890.3 570.5L900.3 561.3ZM1149.5 519.6L1163.7 531.7L1158.1 533.1L1149.5 525.8ZM568.7 468.2L568.7 458.9L568.7 468.2L578.5 477.1ZM568.7 469.3L569.2 459.1L569.2 465.3L568.8 471.4ZM575.2 490.4L589.5 499.2L582.2 493.7L574.0 488.4ZM582.7 500.6L595.4 509.1L588.1 503.8L581.0 498.6ZM593.1 510.4L604.0 518.7L596.9 513.5L590.8 508.5ZM606.2 519.8L615.2 527.9L608.3 522.9L603.4 518.0ZM663.9 552.4L640.3 537.0L644.2 538.6L658.1 547.9ZM645.3 544.8L640.3 537.0L645.2 541.8L648.8 546.4ZM890.3 576.7L909.0 586.8L902.7 586.7L891.3 581.0ZM666.3 557.7L663.9 552.4L669.8 556.9L669.9 559.1ZM657.6 554.0L666.3 557.7L666.3 557.7L661.0 555.5ZM895.6 594.2L910.8 594.2L904.7 594.2L895.6 594.2Z" fill="#5a5a5a"/>
<path d="M649.5 368.8L643.5 390.2L641.1 389.1L646.6 372.4ZM643.5 390.2L622.0 404.7L623.5 400.0L641.1 389.1ZM662.3 397.9L640.3 413.0L641.7 408.3L659.5 396.9ZM683.9 427.5L683.2 404.9L686.3 405.8L685.1 422.8ZM1018.3 407.5L1037.2 425.0L1032.7 425.5L1018.9 411.4ZM627.1 382.0L622.0 404.7L618.6 403.0L620.6 389.6ZM640.3 413.0L662.3 397.9L656.4 405.8L644.2 414.6ZM665.4 422.1L677.8 413.0L679.1 426.2L672.1 433.5ZM973.3 430.5L990.8 449.7L984.1 450.2L973.7 439.1ZM997.5 449.2L1006.4 436.7L1017.5 447.5L1007.5 457.7ZM606.2 395.8L613.8 415.8L610.7 414.0L606.2 402.0ZM654.5 433.9L661.0 426.8L667.6 438.3L661.0 445.4ZM957.3 451.7L974.1 466.3L967.3 466.7L957.3 457.9ZM1014.2 463.3L1024.1 453.0L1034.0 461.3L1024.1 471.6ZM613.8 415.8L622.0 435.7L618.6 434.0L613.8 422.0ZM640.3 444.0L650.3 432.4L650.3 438.6L644.2 445.6ZM665.4 453.1L672.1 445.9L679.1 457.2L672.1 464.5ZM974.1 466.3L990.8 480.7L984.1 481.2L974.1 472.5ZM997.5 480.2L1007.5 470.1L1017.5 478.5L1007.5 488.7ZM606.2 426.8L613.8 446.8L610.7 445.0L606.2 433.0ZM654.5 464.9L661.0 457.8L667.6 469.3L661.0 476.4ZM957.3 482.7L974.1 497.3L967.3 497.7L957.3 488.9ZM1014.2 494.3L1024.1 484.0L1034.0 492.3L1024.1 502.6ZM613.8 446.8L622.0 466.7L618.6 465.0L613.8 453.0ZM640.3 475.0L650.3 463.4L650.3 469.6L644.2 476.6ZM665.4 484.1L672.1 476.9L679.1 488.2L672.1 495.5ZM974.1 497.3L990.8 511.7L984.1 512.2L974.1 503.5ZM997.5 511.2L1007.5 501.1L1017.5 509.5L1007.5 519.7ZM606.2 457.8L613.8 477.8L610.7 476.0L606.2 464.0ZM654.5 495.9L661.0 488.8L667.6 500.3L661.0 507.4ZM957.3 513.7L974.1 528.3L967.3 528.7L957.3 519.9ZM1014.2 525.3L1024.1 515.0L1034.0 523.3L1024.1 533.6ZM613.8 477.8L622.0 497.7L618.6 496.0L613.8 484.0ZM640.3 506.0L650.3 494.4L650.3 500.6L644.2 507.6ZM665.4 515.1L672.1 507.9L679.1 519.2L672.1 526.5ZM974.1 528.3L990.8 542.7L984.1 543.2L974.1 534.5ZM997.5 542.2L1007.5 532.1L1017.5 540.5L1007.5 550.7ZM606.2 488.8L613.8 508.8L610.7 507.0L606.2 495.0ZM654.5 526.9L661.0 519.8L667.6 531.3L661.0 538.4ZM957.3 544.7L974.1 559.3L967.3 559.7L957.3 550.9ZM1014.2 556.3L1024.1 546.0L1034.0 554.3L1024.1 564.6ZM613.8 508.8L622.0 528.7L618.6 527.0L613.8 515.0ZM640.3 537.0L650.3 525.4L650.3 531.6L644.2 538.6ZM665.4 546.1L672.1 538.9L679.1 550.2L679.3 555.0ZM974.1 559.3L990.8 573.7L984.1 574.2L974.1 565.5ZM997.5 573.2L1007.5 563.1L1017.5 571.5L1006.2 578.6ZM786.8 579.8L794.1 571.3L796.6 575.6L792.6 580.5ZM1067.6 575.3L1088.8 562.4L1086.7 566.9L1073.7 574.4ZM1097.7 570.5L1119.8 556.9L1117.2 561.5L1103.6 569.4ZM1077.6 581.0L1097.7 570.5L1094.8 574.6L1083.4 580.1ZM793.5 587.6L807.4 589.2L807.4 589.2L799.0 588.2ZM1063.1 583.2L1077.6 581.0L1077.6 581.0L1068.9 582.4ZM1092.0 578.6L1106.0 576.0L1106.0 576.0L1097.6 577.6Z" fill="#909090"/>
<path d="M622.0 404.7L627.1 382.0L629.3 383.2L623.5 400.0ZM595.5 388.4L606.4 380.6L603.4 394.0L599.3 400.5ZM722.0 452.0L708.8 433.7L714.1 434.9L722.0 445.8ZM1068.3 420.9L1088.8 438.4L1082.5 439.4L1070.6 429.3ZM599.3 406.7L606.2 395.8L606.2 402.0L602.0 408.6ZM1119.8 463.9L1104.4 451.3L1110.6 450.1L1119.8 457.7ZM1110.6 450.1L1119.8 439.1L1128.8 446.6L1119.8 457.7ZM595.5 419.4L599.3 412.9L603.4 425.0L599.3 431.5ZM722.0 483.0L708.8 464.7L714.1 465.9L722.0 476.8ZM1073.0 456.3L1088.8 469.4L1082.5 470.4L1073.0 462.5ZM599.3 437.7L606.2 426.8L606.2 433.0L602.0 439.6ZM1119.8 494.9L1104.4 482.3L1110.6 481.1L1119.8 488.7ZM1110.6 481.1L1119.8 470.1L1128.8 477.6L1119.8 488.7ZM595.5 450.4L599.3 443.9L603.4 456.0L599.3 462.5ZM722.0 514.0L708.8 495.7L714.1 496.9L722.0 507.8ZM1073.0 487.3L1088.8 500.4L1082.5 501.4L1073.0 493.5ZM599.3 468.7L606.2 457.8L606.2 464.0L602.0 470.6ZM1119.8 525.9L1104.4 513.3L1110.6 512.1L1119.8 519.7ZM1110.6 512.1L1119.8 501.1L1128.8 508.6L1119.8 519.7ZM595.5 481.4L599.3 474.9L603.4 487.0L599.3 493.5ZM722.0 545.0L708.8 526.7L714.1 527.9L722.0 538.8ZM1073.0 518.3L1088.8 531.4L1082.5 532.4L1073.0 524.5ZM599.3 499.7L606.2 488.8L606.2 495.0L602.0 501.6ZM1119.8 556.9L1104.4 544.3L1110.6 543.1L1119.8 550.7ZM1110.6 543.1L1119.8 532.1L1128.8 539.6L1119.8 550.7ZM595.5 512.4L599.3 505.9L603.4 518.0L608.3 522.9ZM732.4 571.2L708.8 557.7L714.1 558.9L727.9 567.1ZM1073.0 549.3L1088.8 562.4L1082.5 563.4L1073.0 555.5ZM661.0 544.6L684.8 559.4L680.4 558.0L665.6 549.4ZM683.9 551.5L707.7 565.6L702.9 564.4L688.1 556.2ZM707.7 565.6L708.8 557.7L712.7 562.3L712.5 566.8ZM708.8 557.7L732.4 571.2L727.3 570.1L712.7 562.3ZM735.7 563.1L758.9 575.9L753.5 575.0L739.1 567.6ZM764.2 567.6L786.8 579.8L781.1 579.1L767.2 572.0ZM663.9 552.4L685.3 564.7L681.3 563.3L669.8 556.9ZM684.8 559.4L706.3 571.1L701.9 569.8L690.2 563.7ZM706.3 571.1L707.7 565.6L712.7 569.9L710.7 572.2ZM707.7 565.6L729.2 576.7L724.5 575.6L712.7 569.9ZM732.4 571.2L753.8 581.7L748.8 580.7L736.9 575.3ZM758.9 575.9L779.9 585.8L774.6 585.0L762.8 579.9ZM685.3 564.7L695.5 568.0L691.4 566.7L685.3 564.7ZM706.3 571.1L717.5 574.0L713.0 572.8L706.3 571.1ZM717.5 574.0L729.2 576.7L729.2 576.7L722.1 575.1ZM729.2 576.7L741.3 579.3L736.4 578.3L729.2 576.7ZM753.8 581.7L766.7 583.8L761.5 583.0L753.8 581.7ZM779.9 585.8L793.5 587.6L788.0 586.9L779.9 585.8Z" fill="#727272"/>
<path d="M629.3 383.2L646.6 372.4L641.1 389.1L623.5 400.0ZM666.3 376.4L662.3 397.9L659.5 396.9L663.5 380.0ZM662.3 397.9L685.3 383.4L682.7 387.1L665.1 398.9ZM683.2 404.9L661.0 420.6L662.3 415.9L680.2 404.0ZM876.9 432.0L857.4 451.9L857.9 447.0L872.5 431.9ZM1159.3 403.0L1158.5 386.9L1166.1 401.2L1173.8 415.6ZM643.5 390.2L640.3 413.0L636.4 411.4L637.3 398.0ZM941.0 431.9L957.3 451.7L950.5 451.9L940.7 440.5ZM622.0 404.7L630.8 424.4L627.2 422.7L622.0 410.9ZM650.3 432.4L661.0 420.6L661.0 426.8L654.5 433.9ZM676.8 441.0L683.9 433.7L691.2 445.0L683.9 452.3ZM980.8 465.9L990.8 455.9L1000.8 464.4L990.8 474.5ZM630.8 424.4L640.3 444.0L636.4 442.4L630.8 430.6ZM940.4 467.8L957.3 482.7L950.5 482.9L940.4 474.0ZM622.0 435.7L630.8 455.4L627.2 453.7L622.0 441.9ZM650.3 463.4L661.0 451.6L661.0 457.8L654.5 464.9ZM676.8 472.0L683.9 464.7L691.2 476.0L683.9 483.3ZM980.8 496.9L990.8 486.9L1000.8 495.4L990.8 505.5ZM630.8 455.4L640.3 475.0L636.4 473.4L630.8 461.6ZM940.4 498.8L957.3 513.7L950.5 513.9L940.4 505.0ZM622.0 466.7L630.8 486.4L627.2 484.7L622.0 472.9ZM650.3 494.4L661.0 482.6L661.0 488.8L654.5 495.9ZM676.8 503.0L683.9 495.7L691.2 507.0L683.9 514.3ZM980.8 527.9L990.8 517.9L1000.8 526.4L990.8 536.5ZM630.8 486.4L640.3 506.0L636.4 504.4L630.8 492.6ZM940.4 529.8L957.3 544.7L950.5 544.9L940.4 536.0ZM622.0 497.7L630.8 517.4L627.2 515.7L622.0 503.9ZM650.3 525.4L661.0 513.6L661.0 519.8L654.5 526.9ZM676.8 534.0L683.9 526.7L691.2 538.0L683.9 545.3ZM980.8 558.9L990.8 548.9L1000.8 557.4L990.8 567.5ZM630.8 517.4L640.3 537.0L636.4 535.4L630.8 523.6ZM940.4 560.8L957.3 575.7L950.5 575.9L940.4 567.0ZM816.0 582.9L825.3 574.0L827.3 578.3L822.0 583.4ZM1036.7 579.3L1056.9 567.1L1055.2 571.5L1042.9 578.6ZM807.4 589.2L816.0 582.9L818.8 586.8L813.0 589.7ZM1018.3 588.7L1036.7 579.3L1035.0 583.3L1024.3 588.1ZM1048.3 585.3L1067.6 575.3L1065.3 579.3L1054.2 584.5ZM821.6 590.5L836.0 591.7L836.0 591.7L827.3 591.0ZM1033.4 587.1L1048.3 585.3L1048.3 585.3L1039.4 586.4Z" fill="#969696"/>
<path d="M646.0 391.3L663.5 380.0L659.5 396.9L641.7 408.3ZM685.3 383.4L683.2 404.9L680.2 404.0L682.7 387.1ZM683.2 404.9L706.3 389.8L703.9 393.5L686.3 405.8ZM706.3 411.2L683.9 427.5L685.1 422.8L702.9 410.4ZM731.2 416.8L708.8 433.7L709.9 428.9L727.6 416.0ZM708.8 433.7L706.3 411.2L709.6 412.0L709.9 428.9ZM757.8 421.5L735.7 439.1L736.7 434.3L754.0 420.9ZM785.9 425.5L764.2 443.6L765.0 438.8L781.9 425.0ZM815.2 428.5L794.1 447.3L794.8 442.4L811.1 428.2ZM845.7 430.7L825.3 450.0L825.9 445.2L841.4 430.5ZM987.8 410.1L1005.4 428.2L1000.9 428.5L988.1 414.1ZM662.3 397.9L661.0 420.6L656.6 419.1L656.4 405.8ZM661.0 420.6L683.2 404.9L677.8 413.0L665.4 422.1ZM688.7 428.8L701.3 419.4L703.7 432.6L696.1 440.0ZM964.0 451.4L973.7 439.1L984.1 450.2L974.1 460.1ZM640.3 413.0L650.3 432.4L646.2 430.8L640.3 419.2ZM701.2 447.5L708.8 439.9L716.7 450.9L708.8 458.5ZM923.7 452.7L940.4 467.8L933.7 468.0L923.7 458.9ZM947.2 467.6L957.3 457.9L967.3 466.7L957.3 476.5ZM650.3 432.4L661.0 451.6L656.6 450.1L650.3 438.6ZM661.0 451.6L672.1 439.7L672.1 445.9L665.4 453.1ZM688.7 459.8L696.1 452.4L703.7 463.6L696.1 471.0ZM964.0 482.4L974.1 472.5L984.1 481.2L974.1 491.1ZM640.3 444.0L650.3 463.4L646.2 461.8L640.3 450.2ZM701.2 478.5L708.8 470.9L716.7 481.9L708.8 489.5ZM923.7 483.7L940.4 498.8L933.7 499.0L923.7 489.9ZM947.2 498.6L957.3 488.9L967.3 497.7L957.3 507.5ZM650.3 463.4L661.0 482.6L656.6 481.1L650.3 469.6ZM661.0 482.6L672.1 470.7L672.1 476.9L665.4 484.1ZM688.7 490.8L696.1 483.4L703.7 494.6L696.1 502.0ZM964.0 513.4L974.1 503.5L984.1 512.2L974.1 522.1ZM640.3 475.0L650.3 494.4L646.2 492.8L640.3 481.2ZM701.2 509.5L708.8 501.9L716.7 512.9L708.8 520.5ZM923.7 514.7L940.4 529.8L933.7 530.0L923.7 520.9ZM947.2 529.6L957.3 519.9L967.3 528.7L957.3 538.5ZM650.3 494.4L661.0 513.6L656.6 512.1L650.3 500.6ZM661.0 513.6L672.1 501.7L672.1 507.9L665.4 515.1ZM688.7 521.8L696.1 514.4L703.7 525.6L696.1 533.0ZM964.0 544.4L974.1 534.5L984.1 543.2L974.1 553.1ZM640.3 506.0L650.3 525.4L646.2 523.8L640.3 512.2ZM701.2 540.5L708.8 532.9L716.7 543.9L708.8 551.5ZM923.7 545.7L940.4 560.8L933.7 561.0L923.7 551.9ZM947.2 560.6L957.3 550.9L967.3 559.7L957.3 569.5ZM650.3 525.4L661.0 544.6L656.6 543.1L650.3 531.6ZM661.0 544.6L672.1 532.7L672.1 538.9L665.4 546.1ZM688.7 552.8L696.1 545.4L703.7 556.6L702.7 561.4ZM964.0 575.4L974.1 565.5L984.1 574.2L973.5 581.0ZM846.3 585.1L857.4 575.9L858.9 580.1L852.5 585.4ZM877.4 586.4L890.3 576.7L891.3 581.0L883.7 586.5ZM909.0 586.8L923.7 576.7L924.1 580.9L915.4 586.7ZM941.1 586.2L957.3 575.7L957.2 579.9L947.5 586.0ZM973.2 584.8L990.8 573.7L990.2 578.0L979.6 584.4ZM1005.1 582.5L1024.1 570.8L1023.0 575.2L1011.5 581.9ZM836.0 591.7L846.3 585.1L848.5 588.9L841.8 592.1ZM865.4 593.4L877.4 586.4L878.9 590.2L871.4 593.6ZM895.6 594.2L909.0 586.8L910.0 590.5L901.7 594.2ZM926.2 594.1L941.1 586.2L941.3 590.0L932.3 594.0ZM957.0 593.2L973.2 584.8L972.8 588.6L963.1 592.9ZM987.8 591.4L1005.1 582.5L1004.1 586.4L993.9 590.9ZM850.6 592.6L865.4 593.4L865.4 593.4L856.5 592.9ZM880.4 593.9L895.6 594.2L895.6 594.2L886.5 594.0ZM910.8 594.2L926.2 594.1L926.2 594.1L917.0 594.2ZM941.6 593.7L957.0 593.2L957.0 593.2L947.7 593.5ZM972.4 592.4L987.8 591.4L987.8 591.4L978.5 592.0ZM1003.1 590.2L1018.3 588.7L1018.3 588.7L1009.2 589.6Z" fill="#9c9c9c"/>
<path d="M665.1 398.9L682.7 387.1L680.2 404.0L662.3 415.9ZM706.3 411.2L729.2 395.5L727.0 399.2L709.6 412.0ZM729.2 395.5L731.2 416.8L727.6 416.0L727.0 399.2ZM753.8 400.4L757.8 421.5L754.0 420.9L751.9 404.2ZM735.7 439.1L731.2 416.8L734.8 417.5L736.7 434.3ZM895.6 412.9L908.8 432.4L904.3 432.4L895.0 416.9ZM1102.7 415.3L1107.5 398.5L1123.7 411.2L1119.0 428.1ZM683.9 427.5L706.3 411.2L701.3 419.4L688.7 428.8ZM706.3 411.2L708.8 433.7L703.7 432.6L701.3 419.4ZM741.3 440.1L753.8 429.9L758.4 442.8L749.7 450.8ZM876.9 432.0L890.3 452.7L883.7 452.6L875.4 440.6ZM896.9 452.8L907.9 441.0L917.0 452.8L906.9 462.1ZM683.9 427.5L696.1 446.2L691.2 445.0L683.9 433.7ZM708.8 433.7L722.0 452.0L716.7 450.9L708.8 439.9ZM755.5 457.9L764.2 449.8L773.0 460.3L764.2 468.4ZM880.4 468.1L890.3 458.9L900.3 468.3L890.3 477.5ZM683.9 458.5L696.1 446.2L696.1 452.4L688.7 459.8ZM696.1 446.2L708.8 464.7L703.7 463.6L696.1 452.4ZM741.3 471.1L749.7 463.2L758.4 473.8L749.7 481.8ZM873.8 467.9L890.3 483.7L883.7 483.6L873.8 474.1ZM896.9 483.8L906.9 474.5L917.0 483.8L906.9 493.1ZM683.9 458.5L696.1 477.2L691.2 476.0L683.9 464.7ZM708.8 464.7L722.0 483.0L716.7 481.9L708.8 470.9ZM755.5 488.9L764.2 480.8L773.0 491.3L764.2 499.4ZM880.4 499.1L890.3 489.9L900.3 499.3L890.3 508.5ZM683.9 489.5L696.1 477.2L696.1 483.4L688.7 490.8ZM696.1 477.2L708.8 495.7L703.7 494.6L696.1 483.4ZM741.3 502.1L749.7 494.2L758.4 504.8L749.7 512.8ZM873.8 498.9L890.3 514.7L883.7 514.6L873.8 505.1ZM896.9 514.8L906.9 505.5L917.0 514.8L906.9 524.1ZM683.9 489.5L696.1 508.2L691.2 507.0L683.9 495.7ZM708.8 495.7L722.0 514.0L716.7 512.9L708.8 501.9ZM755.5 519.9L764.2 511.8L773.0 522.3L764.2 530.4ZM880.4 530.1L890.3 520.9L900.3 530.3L890.3 539.5ZM683.9 520.5L696.1 508.2L696.1 514.4L688.7 521.8ZM696.1 508.2L708.8 526.7L703.7 525.6L696.1 514.4ZM741.3 533.1L749.7 525.2L758.4 535.8L749.7 543.8ZM873.8 529.9L890.3 545.7L883.7 545.6L873.8 536.1ZM896.9 545.8L906.9 536.5L917.0 545.8L906.9 555.1ZM683.9 520.5L696.1 539.2L691.2 538.0L683.9 526.7ZM708.8 526.7L722.0 545.0L716.7 543.9L708.8 532.9ZM755.5 550.9L764.2 542.8L773.0 553.3L764.2 561.4ZM880.4 561.1L890.3 551.9L900.3 561.3L890.3 570.5ZM683.9 551.5L696.1 539.2L696.1 545.4L688.7 552.8ZM696.1 539.2L708.8 557.7L703.7 556.6L696.1 545.4ZM741.3 564.1L749.7 556.2L758.4 566.8L754.9 571.9ZM873.8 560.9L890.3 576.7L883.7 576.6L873.8 567.1ZM896.9 576.8L906.9 567.5L917.0 576.8L908.1 583.0Z" fill="#a8a8a8"/>
<path d="M706.3 389.8L706.3 411.2L702.9 410.4L703.9 393.5ZM926.2 412.9L941.0 431.9L936.5 432.0L925.9 416.8ZM957.0 411.9L973.3 430.5L968.7 430.7L957.0 415.9ZM1131.7 409.5L1135.0 392.7L1151.7 404.9L1148.6 421.8ZM683.2 404.9L683.9 427.5L679.1 426.2L677.8 413.0ZM714.1 434.9L726.7 425.1L730.2 438.1L722.0 445.8ZM908.8 432.4L923.7 452.7L917.0 452.8L907.9 441.0ZM930.4 452.6L940.7 440.5L950.5 451.9L940.4 461.6ZM661.0 420.6L672.1 439.7L667.6 438.3L661.0 426.8ZM672.1 439.7L683.9 427.5L683.9 433.7L676.8 441.0ZM727.4 453.1L735.7 445.3L744.1 456.1L735.7 463.9ZM890.3 452.7L906.9 468.3L900.3 468.3L890.3 458.9ZM913.6 468.3L923.7 458.9L933.7 468.0L923.7 477.5ZM672.1 439.7L683.9 458.5L679.1 457.2L672.1 445.9ZM714.1 465.9L722.0 458.2L730.2 469.1L722.0 476.8ZM906.9 468.3L923.7 483.7L917.0 483.8L906.9 474.5ZM930.4 483.6L940.4 474.0L950.5 482.9L940.4 492.6ZM661.0 451.6L672.1 470.7L667.6 469.3L661.0 457.8ZM672.1 470.7L683.9 458.5L683.9 464.7L676.8 472.0ZM727.4 484.1L735.7 476.3L744.1 487.1L735.7 494.9ZM890.3 483.7L906.9 499.3L900.3 499.3L890.3 489.9ZM913.6 499.3L923.7 489.9L933.7 499.0L923.7 508.5ZM672.1 470.7L683.9 489.5L679.1 488.2L672.1 476.9ZM714.1 496.9L722.0 489.2L730.2 500.1L722.0 507.8ZM906.9 499.3L923.7 514.7L917.0 514.8L906.9 505.5ZM930.4 514.6L940.4 505.0L950.5 513.9L940.4 523.6ZM661.0 482.6L672.1 501.7L667.6 500.3L661.0 488.8ZM672.1 501.7L683.9 489.5L683.9 495.7L676.8 503.0ZM727.4 515.1L735.7 507.3L744.1 518.1L735.7 525.9ZM890.3 514.7L906.9 530.3L900.3 530.3L890.3 520.9ZM913.6 530.3L923.7 520.9L933.7 530.0L923.7 539.5ZM672.1 501.7L683.9 520.5L679.1 519.2L672.1 507.9ZM714.1 527.9L722.0 520.2L730.2 531.1L722.0 538.8ZM906.9 530.3L923.7 545.7L917.0 545.8L906.9 536.5ZM930.4 545.6L940.4 536.0L950.5 544.9L940.4 554.6ZM661.0 513.6L672.1 532.7L667.6 531.3L661.0 519.8ZM672.1 532.7L683.9 520.5L683.9 526.7L676.8 534.0ZM727.4 546.1L735.7 538.3L744.1 549.1L735.7 556.9ZM890.3 545.7L906.9 561.3L900.3 561.3L890.3 551.9ZM913.6 561.3L923.7 551.9L933.7 561.0L923.7 570.5ZM672.1 532.7L683.9 551.5L679.1 550.2L672.1 538.9ZM714.1 558.9L722.0 551.2L730.2 562.1L727.9 567.1ZM906.9 561.3L923.7 576.7L917.0 576.8L906.9 567.5ZM930.4 576.6L940.4 567.0L950.5 575.9L940.8 582.4Z" fill="#a2a2a2"/>
<path d="M686.3 405.8L703.9 393.5L702.9 410.4L685.1 422.8ZM779.9 404.6L785.9 425.5L781.9 425.0L778.3 408.4ZM807.4 407.9L815.2 428.5L811.1 428.2L806.0 411.8ZM865.4 412.1L876.9 432.0L872.5 431.9L864.6 416.0ZM1072.6 420.3L1078.8 403.6L1094.4 416.8L1088.2 433.6ZM731.2 416.8L735.7 439.1L730.2 438.1L726.7 425.1ZM757.8 421.5L764.2 443.6L758.4 442.8L753.8 429.9ZM785.9 425.5L794.1 447.3L788.0 446.6L782.5 433.9ZM770.1 444.4L782.5 433.9L788.0 446.6L779.0 454.9ZM815.2 428.5L825.3 450.0L819.0 449.6L812.5 437.1ZM800.3 447.9L812.5 437.1L819.0 449.6L809.6 458.1ZM845.7 430.7L857.4 451.9L850.9 451.6L843.5 439.3ZM864.0 452.1L875.4 440.6L883.7 452.6L873.8 461.7ZM696.1 446.2L708.8 433.7L708.8 439.9L701.2 447.5ZM735.7 439.1L749.7 457.0L744.1 456.1L735.7 445.3ZM764.2 443.6L779.0 461.1L773.0 460.3L764.2 449.8ZM794.1 447.3L809.6 464.3L803.4 463.7L794.1 453.5ZM785.0 461.8L794.1 453.5L803.4 463.7L794.1 472.1ZM825.3 450.0L841.3 466.6L834.8 466.2L825.3 456.2ZM815.8 464.8L825.3 456.2L834.8 466.2L825.3 474.8ZM857.4 451.9L873.8 467.9L867.2 467.7L857.4 458.1ZM847.7 466.9L857.4 458.1L867.2 467.7L857.4 476.7ZM1163.7 438.7L1174.8 420.3L1174.8 426.5L1169.4 437.3ZM722.0 452.0L735.7 470.1L730.2 469.1L722.0 458.2ZM749.7 457.0L764.2 474.6L758.4 473.8L749.7 463.2ZM779.0 461.1L794.1 478.3L788.0 477.6L779.0 467.3ZM770.1 475.4L779.0 467.3L788.0 477.6L779.0 485.9ZM809.6 464.3L825.3 481.0L819.0 480.6L809.6 470.5ZM800.3 478.9L809.6 470.5L819.0 480.6L809.6 489.1ZM841.3 466.6L857.4 482.9L850.9 482.6L841.3 472.8ZM864.0 483.1L873.8 474.1L883.7 483.6L873.8 492.7ZM696.1 477.2L708.8 464.7L708.8 470.9L701.2 478.5ZM735.7 470.1L749.7 488.0L744.1 487.1L735.7 476.3ZM764.2 474.6L779.0 492.1L773.0 491.3L764.2 480.8ZM794.1 478.3L809.6 495.3L803.4 494.7L794.1 484.5ZM785.0 492.8L794.1 484.5L803.4 494.7L794.1 503.1ZM825.3 481.0L841.3 497.6L834.8 497.2L825.3 487.2ZM815.8 495.8L825.3 487.2L834.8 497.2L825.3 505.8ZM857.4 482.9L873.8 498.9L867.2 498.7L857.4 489.1ZM847.7 497.9L857.4 489.1L867.2 498.7L857.4 507.7ZM1163.7 469.7L1174.8 451.3L1174.8 457.5L1169.4 468.3ZM722.0 483.0L735.7 501.1L730.2 500.1L722.0 489.2ZM749.7 488.0L764.2 505.6L758.4 504.8L749.7 494.2ZM779.0 492.1L794.1 509.3L788.0 508.6L779.0 498.3ZM770.1 506.4L779.0 498.3L788.0 508.6L779.0 516.9ZM809.6 495.3L825.3 512.0L819.0 511.6L809.6 501.5ZM800.3 509.9L809.6 501.5L819.0 511.6L809.6 520.1ZM841.3 497.6L857.4 513.9L850.9 513.6L841.3 503.8ZM864.0 514.1L873.8 505.1L883.7 514.6L873.8 523.7ZM696.1 508.2L708.8 495.7L708.8 501.9L701.2 509.5ZM735.7 501.1L749.7 519.0L744.1 518.1L735.7 507.3ZM764.2 505.6L779.0 523.1L773.0 522.3L764.2 511.8ZM794.1 509.3L809.6 526.3L803.4 525.7L794.1 515.5ZM785.0 523.8L794.1 515.5L803.4 525.7L794.1 534.1ZM825.3 512.0L841.3 528.6L834.8 528.2L825.3 518.2ZM815.8 526.8L825.3 518.2L834.8 528.2L825.3 536.8ZM857.4 513.9L873.8 529.9L867.2 529.7L857.4 520.1ZM847.7 528.9L857.4 520.1L867.2 529.7L857.4 538.7ZM1163.7 500.7L1174.8 482.3L1174.8 488.5L1169.4 499.3ZM722.0 514.0L735.7 532.1L730.2 531.1L722.0 520.2ZM749.7 519.0L764.2 536.6L758.4 535.8L749.7 525.2ZM779.0 523.1L794.1 540.3L788.0 539.6L779.0 529.3ZM770.1 537.4L779.0 529.3L788.0 539.6L779.0 547.9ZM809.6 526.3L825.3 543.0L819.0 542.6L809.6 532.5ZM800.3 540.9L809.6 532.5L819.0 542.6L809.6 551.1ZM841.3 528.6L857.4 544.9L850.9 544.6L841.3 534.8ZM864.0 545.1L873.8 536.1L883.7 545.6L873.8 554.7ZM696.1 539.2L708.8 526.7L708.8 532.9L701.2 540.5ZM735.7 532.1L749.7 550.0L744.1 549.1L735.7 538.3ZM764.2 536.6L779.0 554.1L773.0 553.3L764.2 542.8ZM794.1 540.3L809.6 557.3L803.4 556.7L794.1 546.5ZM785.0 554.8L794.1 546.5L803.4 556.7L794.1 565.1ZM825.3 543.0L841.3 559.6L834.8 559.2L825.3 549.2ZM815.8 557.8L825.3 549.2L834.8 559.2L825.3 567.8ZM857.4 544.9L873.8 560.9L867.2 560.7L857.4 551.1ZM847.7 559.9L857.4 551.1L867.2 560.7L857.4 569.7ZM1163.7 531.7L1174.8 513.3L1174.8 519.5L1169.4 530.3ZM722.0 545.0L735.7 563.1L730.2 562.1L722.0 551.2ZM749.7 550.0L764.2 567.6L758.4 566.8L749.7 556.2ZM779.0 554.1L794.1 571.3L788.0 570.6L779.0 560.3ZM770.1 568.4L779.0 560.3L788.0 570.6L783.4 575.9ZM809.6 557.3L825.3 574.0L819.0 573.6L809.6 563.5ZM800.3 571.9L809.6 563.5L819.0 573.6L813.2 579.0ZM841.3 559.6L857.4 575.9L850.9 575.6L841.3 565.8ZM864.0 576.1L873.8 567.1L883.7 576.6L875.8 582.6Z" fill="#aeaeae"/>
<path d="M709.6 412.0L727.0 399.2L727.6 416.0L709.9 428.9ZM731.2 416.8L753.8 400.4L751.9 404.2L734.8 417.5ZM764.2 443.6L757.8 421.5L761.6 422.1L765.0 438.8ZM836.0 410.4L845.7 430.7L841.4 430.5L834.8 414.4ZM1041.6 424.5L1049.2 407.9L1064.0 421.5L1056.4 438.2ZM1174.8 420.3L1155.5 404.0L1159.3 403.0L1173.8 415.6ZM708.8 433.7L731.2 416.8L726.7 425.1L714.1 434.9ZM831.6 450.5L843.5 439.3L850.9 451.6L841.3 460.4ZM1149.5 426.6L1155.5 404.0L1159.6 412.0L1155.2 425.3ZM722.0 452.0L735.7 439.1L735.7 445.3L727.4 453.1ZM1134.8 445.4L1149.5 426.6L1149.5 432.8L1140.7 444.1ZM708.8 464.7L722.0 452.0L722.0 458.2L714.1 465.9ZM831.6 481.5L841.3 472.8L850.9 482.6L841.3 491.4ZM1149.5 457.6L1163.7 438.7L1163.7 444.9L1155.2 456.3ZM722.0 483.0L735.7 470.1L735.7 476.3L727.4 484.1ZM1134.8 476.4L1149.5 457.6L1149.5 463.8L1140.7 475.1ZM708.8 495.7L722.0 483.0L722.0 489.2L714.1 496.9ZM831.6 512.5L841.3 503.8L850.9 513.6L841.3 522.4ZM1149.5 488.6L1163.7 469.7L1163.7 475.9L1155.2 487.3ZM722.0 514.0L735.7 501.1L735.7 507.3L727.4 515.1ZM1134.8 507.4L1149.5 488.6L1149.5 494.8L1140.7 506.1ZM708.8 526.7L722.0 514.0L722.0 520.2L714.1 527.9ZM831.6 543.5L841.3 534.8L850.9 544.6L841.3 553.4ZM1149.5 519.6L1163.7 500.7L1163.7 506.9L1155.2 518.3ZM722.0 545.0L735.7 532.1L735.7 538.3L727.4 546.1ZM1134.8 538.4L1149.5 519.6L1149.5 525.8L1140.7 537.1ZM708.8 557.7L722.0 545.0L722.0 551.2L714.1 558.9ZM831.6 574.5L841.3 565.8L850.9 575.6L844.1 581.2ZM1149.5 550.6L1163.7 531.7L1163.7 537.9L1155.2 549.3Z" fill="#b4b4b4"/>
<path d="M734.8 417.5L751.9 404.2L754.0 420.9L736.7 434.3ZM794.1 447.3L785.9 425.5L789.9 425.9L794.8 442.4ZM977.8 430.2L988.1 414.1L1000.9 428.5L990.7 444.8ZM1119.8 432.9L1098.5 416.0L1102.7 415.3L1119.0 428.1ZM1155.5 404.0L1156.5 383.2L1158.5 386.9L1159.3 403.0ZM1088.8 438.4L1098.5 416.0L1101.4 424.3L1095.1 437.4ZM749.7 457.0L764.2 443.6L764.2 449.8L755.5 457.9ZM1073.0 456.3L1088.8 438.4L1088.8 444.6L1079.3 455.4ZM1088.8 469.4L1104.4 451.3L1104.4 457.5L1095.1 468.4ZM749.7 488.0L764.2 474.6L764.2 480.8L755.5 488.9ZM1073.0 487.3L1088.8 469.4L1088.8 475.6L1079.3 486.4ZM1088.8 500.4L1104.4 482.3L1104.4 488.5L1095.1 499.4ZM749.7 519.0L764.2 505.6L764.2 511.8L755.5 519.9ZM1073.0 518.3L1088.8 500.4L1088.8 506.6L1079.3 517.4ZM1088.8 531.4L1104.4 513.3L1104.4 519.5L1095.1 530.4ZM749.7 550.0L764.2 536.6L764.2 542.8L755.5 550.9ZM1073.0 549.3L1088.8 531.4L1088.8 537.6L1079.3 548.4ZM1088.8 562.4L1104.4 544.3L1104.4 550.5L1095.1 561.4Z" fill="#c0c0c0"/>
<path d="M757.8 421.5L779.9 404.6L778.3 408.4L761.6 422.1ZM1009.9 427.8L1018.9 411.4L1032.7 425.5L1023.8 442.0ZM1149.5 426.6L1127.7 410.4L1131.7 409.5L1148.6 421.8ZM735.7 439.1L757.8 421.5L753.8 429.9L741.3 440.1ZM1119.8 432.9L1127.7 410.4L1131.2 418.5L1125.8 431.7ZM1104.4 451.3L1119.8 432.9L1119.8 439.1L1110.6 450.1ZM735.7 470.1L749.7 457.0L749.7 463.2L741.3 471.1ZM1119.8 463.9L1134.8 445.4L1134.8 451.6L1125.8 462.7ZM1104.4 482.3L1119.8 463.9L1119.8 470.1L1110.6 481.1ZM735.7 501.1L749.7 488.0L749.7 494.2L741.3 502.1ZM1119.8 494.9L1134.8 476.4L1134.8 482.6L1125.8 493.7ZM1104.4 513.3L1119.8 494.9L1119.8 501.1L1110.6 512.1ZM735.7 532.1L749.7 519.0L749.7 525.2L741.3 533.1ZM1119.8 525.9L1134.8 507.4L1134.8 513.6L1125.8 524.7ZM1104.4 544.3L1119.8 525.9L1119.8 532.1L1110.6 543.1ZM735.7 563.1L749.7 550.0L749.7 556.2L741.3 564.1ZM1119.8 556.9L1134.8 538.4L1134.8 544.6L1125.8 555.7Z" fill="#bababa"/>
<path d="M761.6 422.1L778.3 408.4L781.9 425.0L765.0 438.8ZM785.9 425.5L807.4 407.9L806.0 411.8L789.9 425.9ZM945.5 431.8L957.0 415.9L968.7 430.7L957.2 446.8ZM1056.9 443.1L1037.2 425.0L1041.6 424.5L1056.4 438.2ZM1088.8 438.4L1068.3 420.9L1072.6 420.3L1088.2 433.6ZM1127.7 410.4L1133.2 389.0L1135.0 392.7L1131.7 409.5ZM764.2 443.6L785.9 425.5L782.5 433.9L770.1 444.4ZM1056.9 443.1L1068.3 420.9L1070.6 429.3L1063.3 442.2ZM1040.6 460.6L1056.9 443.1L1056.9 449.3L1047.1 459.8ZM764.2 474.6L779.0 461.1L779.0 467.3L770.1 475.4ZM1056.9 474.1L1073.0 456.3L1073.0 462.5L1063.3 473.2ZM1040.6 491.6L1056.9 474.1L1056.9 480.3L1047.1 490.8ZM764.2 505.6L779.0 492.1L779.0 498.3L770.1 506.4ZM1056.9 505.1L1073.0 487.3L1073.0 493.5L1063.3 504.2ZM1040.6 522.6L1056.9 505.1L1056.9 511.3L1047.1 521.8ZM764.2 536.6L779.0 523.1L779.0 529.3L770.1 537.4ZM1056.9 536.1L1073.0 518.3L1073.0 524.5L1063.3 535.2ZM1040.6 553.6L1056.9 536.1L1056.9 542.3L1047.1 552.8ZM764.2 567.6L779.0 554.1L779.0 560.3L770.1 568.4ZM1056.9 567.1L1073.0 549.3L1073.0 555.5L1063.3 566.2Z" fill="#c6c6c6"/>
<path d="M789.9 425.9L806.0 411.8L811.1 428.2L794.8 442.4ZM815.2 428.5L836.0 410.4L834.8 414.4L819.5 428.9ZM825.3 450.0L815.2 428.5L819.5 428.9L825.9 445.2ZM857.4 451.9L845.7 430.7L850.0 431.0L857.9 447.0ZM881.4 432.2L895.0 416.9L904.3 432.4L890.6 447.8ZM913.3 432.4L925.9 416.8L936.5 432.0L923.8 447.8ZM990.8 449.7L973.3 430.5L977.8 430.2L990.7 444.8ZM1024.1 446.8L1005.4 428.2L1009.9 427.8L1023.8 442.0ZM1068.3 420.9L1077.6 399.8L1078.8 403.6L1072.6 420.3ZM1098.5 416.0L1106.0 394.7L1107.5 398.5L1102.7 415.3ZM794.1 447.3L815.2 428.5L812.5 437.1L800.3 447.9ZM990.8 449.7L1005.4 428.2L1006.4 436.7L997.5 449.2ZM1024.1 446.8L1037.2 425.0L1038.8 433.4L1030.7 446.2ZM779.0 461.1L794.1 447.3L794.1 453.5L785.0 461.8ZM1007.5 463.9L1024.1 446.8L1024.1 453.0L1014.2 463.3ZM794.1 478.3L809.6 464.3L809.6 470.5L800.3 478.9ZM990.8 480.7L1007.5 463.9L1007.5 470.1L997.5 480.2ZM1024.1 477.8L1040.6 460.6L1040.6 466.8L1030.7 477.2ZM779.0 492.1L794.1 478.3L794.1 484.5L785.0 492.8ZM1007.5 494.9L1024.1 477.8L1024.1 484.0L1014.2 494.3ZM794.1 509.3L809.6 495.3L809.6 501.5L800.3 509.9ZM990.8 511.7L1007.5 494.9L1007.5 501.1L997.5 511.2ZM1024.1 508.8L1040.6 491.6L1040.6 497.8L1030.7 508.2ZM779.0 523.1L794.1 509.3L794.1 515.5L785.0 523.8ZM1007.5 525.9L1024.1 508.8L1024.1 515.0L1014.2 525.3ZM794.1 540.3L809.6 526.3L809.6 532.5L800.3 540.9ZM990.8 542.7L1007.5 525.9L1007.5 532.1L997.5 542.2ZM1024.1 539.8L1040.6 522.6L1040.6 528.8L1030.7 539.2ZM779.0 554.1L794.1 540.3L794.1 546.5L785.0 554.8ZM1007.5 556.9L1024.1 539.8L1024.1 546.0L1014.2 556.3ZM794.1 571.3L809.6 557.3L809.6 563.5L800.3 571.9ZM990.8 573.7L1007.5 556.9L1007.5 563.1L997.5 573.2ZM1024.1 570.8L1040.6 553.6L1040.6 559.8L1030.7 570.2Z" fill="#cccccc"/>
<path d="M819.5 428.9L834.8 414.4L841.4 430.5L825.9 445.2ZM845.7 430.7L865.4 412.1L864.6 416.0L850.0 431.0ZM850.0 431.0L864.6 416.0L872.5 431.9L857.9 447.0ZM876.9 432.0L895.6 412.9L895.0 416.9L881.4 432.2ZM890.3 452.7L876.9 432.0L881.4 432.2L890.6 447.8ZM908.8 432.4L926.2 412.9L925.9 416.8L913.3 432.4ZM923.7 452.7L908.8 432.4L913.3 432.4L923.8 447.8ZM941.0 431.9L957.0 411.9L957.0 415.9L945.5 431.8ZM957.3 451.7L941.0 431.9L945.5 431.8L957.2 446.8ZM973.3 430.5L987.8 410.1L988.1 414.1L977.8 430.2ZM1005.4 428.2L1018.3 407.5L1018.9 411.4L1009.9 427.8ZM1037.2 425.0L1048.3 404.0L1049.2 407.9L1041.6 424.5ZM923.7 452.7L941.0 431.9L940.7 440.5L930.4 452.6ZM957.3 451.7L973.3 430.5L973.7 439.1L964.0 451.4ZM809.6 464.3L825.3 450.0L825.3 456.2L815.8 464.8ZM906.9 468.3L923.7 452.7L923.7 458.9L913.6 468.3ZM940.4 467.8L957.3 451.7L957.3 457.9L947.2 467.6ZM974.1 466.3L990.8 449.7L990.8 455.9L980.8 465.9ZM923.7 483.7L940.4 467.8L940.4 474.0L930.4 483.6ZM957.3 482.7L974.1 466.3L974.1 472.5L964.0 482.4ZM809.6 495.3L825.3 481.0L825.3 487.2L815.8 495.8ZM906.9 499.3L923.7 483.7L923.7 489.9L913.6 499.3ZM940.4 498.8L957.3 482.7L957.3 488.9L947.2 498.6ZM974.1 497.3L990.8 480.7L990.8 486.9L980.8 496.9ZM923.7 514.7L940.4 498.8L940.4 505.0L930.4 514.6ZM957.3 513.7L974.1 497.3L974.1 503.5L964.0 513.4ZM809.6 526.3L825.3 512.0L825.3 518.2L815.8 526.8ZM906.9 530.3L923.7 514.7L923.7 520.9L913.6 530.3ZM940.4 529.8L957.3 513.7L957.3 519.9L947.2 529.6ZM974.1 528.3L990.8 511.7L990.8 517.9L980.8 527.9ZM923.7 545.7L940.4 529.8L940.4 536.0L930.4 545.6ZM957.3 544.7L974.1 528.3L974.1 534.5L964.0 544.4ZM809.6 557.3L825.3 543.0L825.3 549.2L815.8 557.8ZM906.9 561.3L923.7 545.7L923.7 551.9L913.6 561.3ZM940.4 560.8L957.3 544.7L957.3 550.9L947.2 560.6ZM974.1 559.3L990.8 542.7L990.8 548.9L980.8 558.9ZM923.7 576.7L940.4 560.8L940.4 567.0L930.4 576.6ZM957.3 575.7L974.1 559.3L974.1 565.5L964.0 575.4Z" fill="#d2d2d2"/>
<path d="M568.7 359.7L568.7 344.2L568.7 344.2L568.7 353.5ZM569.2 366.1L568.7 345.3L568.8 347.4L569.2 359.9ZM568.7 376.3L568.7 359.7L568.7 359.7L568.7 370.1ZM570.5 386.9L569.2 366.1L569.6 368.3L570.5 380.7ZM568.7 390.7L568.7 375.2L568.7 375.2L568.7 384.5ZM569.2 397.1L568.7 376.3L568.8 378.4L569.2 390.9ZM568.7 407.3L568.7 390.7L568.7 390.7L568.7 401.1ZM570.5 417.9L569.2 397.1L569.6 399.3L570.5 411.7ZM568.7 421.7L568.7 406.2L568.7 406.2L568.7 415.5ZM569.2 428.1L568.7 407.3L568.8 409.4L569.2 421.9ZM568.7 438.3L568.7 421.7L568.7 421.7L568.7 432.1ZM570.5 448.9L569.2 428.1L569.6 430.3L570.5 442.7ZM568.7 452.7L568.7 437.2L568.7 437.2L568.7 446.5ZM569.2 459.1L568.7 438.3L568.8 440.4L569.2 452.9ZM568.7 469.3L568.7 452.7L568.7 452.7L568.7 463.1ZM570.5 479.9L569.2 459.1L569.6 461.3L570.5 473.7ZM586.0 483.0L568.7 468.2L568.7 468.2L578.5 477.1ZM586.5 489.1L568.7 469.3L568.8 471.4L579.0 483.4ZM586.0 483.0L568.7 469.3L574.8 475.2L586.0 483.0ZM586.5 489.1L600.7 495.6L597.2 492.8L586.2 487.1ZM600.7 495.6L586.0 483.0L586.0 483.0L597.2 492.8ZM586.0 483.0L574.8 475.2L586.2 487.1L597.2 492.8ZM586.5 489.1L570.5 479.9L576.5 485.7L586.9 491.2ZM589.5 499.2L602.3 505.4L598.8 502.7L588.7 497.2ZM602.3 505.4L586.5 489.1L586.9 491.2L598.8 502.7ZM586.9 491.2L576.5 485.7L588.7 497.2L598.8 502.7ZM595.4 509.1L606.6 515.0L603.1 512.4L594.0 507.2ZM606.6 515.0L589.5 499.2L590.5 501.2L603.1 512.4ZM590.5 501.2L581.1 496.0L594.0 507.2L603.1 512.4ZM604.0 518.7L613.5 524.4L610.1 521.9L602.0 516.8ZM613.5 524.4L595.4 509.1L596.9 511.1L610.1 521.9ZM615.2 527.9L623.0 533.4L619.7 530.9L612.7 526.1ZM623.0 533.4L604.0 518.7L606.0 520.6L619.7 530.9ZM629.0 536.6L635.1 542.0L631.9 539.6L626.0 534.9ZM635.1 542.0L615.2 527.9L617.7 529.7L631.9 539.6ZM600.7 494.6L586.0 483.0L593.4 488.9L600.7 494.6ZM600.7 495.6L600.7 494.6L600.7 494.6L600.7 494.6ZM600.7 494.6L600.7 494.6L600.7 494.6L600.7 494.6ZM600.7 494.6L593.4 488.9L600.7 494.6L600.7 494.6ZM600.7 495.6L586.5 489.1L593.9 494.9L600.8 497.6ZM602.3 505.4L601.2 500.5L601.2 500.5L601.8 503.5ZM601.2 500.5L600.7 495.6L600.8 497.6L601.2 500.5ZM600.8 497.6L593.9 494.9L601.8 503.5L601.2 500.5ZM602.3 505.4L589.5 499.2L596.9 504.8L603.0 507.3ZM606.6 515.0L604.1 510.2L604.1 510.2L605.5 513.1ZM604.1 510.2L602.3 505.4L603.0 507.3L604.1 510.2ZM603.0 507.3L596.9 504.8L605.5 513.1L604.1 510.2ZM613.5 524.4L609.7 519.7L609.7 519.7L611.9 522.5ZM609.7 519.7L606.6 515.0L607.8 516.9L609.7 519.7ZM607.8 516.9L602.6 514.5L611.9 522.5L609.7 519.7ZM623.0 533.4L618.0 528.9L618.0 528.9L620.9 531.6ZM618.0 528.9L613.5 524.4L615.2 526.2L618.0 528.9ZM635.1 542.0L628.7 537.7L628.7 537.7L632.5 540.3ZM628.7 537.7L623.0 533.4L625.2 535.1L628.7 537.7ZM600.7 494.6L600.7 495.6L600.7 495.6L600.7 494.6ZM601.2 500.5L600.7 495.6L600.7 495.6L600.9 498.6ZM600.7 495.6L600.7 494.6L600.7 494.6L600.7 495.6ZM600.7 494.6L600.7 495.6L600.9 498.6L600.7 495.6ZM601.2 500.5L602.3 505.4L602.3 505.4L601.6 502.5ZM604.1 510.2L602.3 505.4L602.3 505.4L603.3 508.3ZM602.3 505.4L601.2 500.5L601.6 502.5L602.3 505.4ZM601.6 502.5L602.3 505.4L603.3 508.3L602.3 505.4ZM609.7 519.7L606.6 515.0L606.6 515.0L608.4 517.8ZM606.6 515.0L604.1 510.2L605.0 512.2L606.6 515.0ZM605.0 512.2L606.6 515.0L608.4 517.8L606.6 515.0ZM618.0 528.9L613.5 524.4L613.5 524.4L616.1 527.1ZM613.5 524.4L609.7 519.7L611.2 521.6L613.5 524.4ZM628.7 537.7L623.0 533.4L623.0 533.4L626.4 536.0ZM623.0 533.4L618.0 528.9L619.9 530.7L623.0 533.4ZM642.0 546.1L635.1 542.0L635.1 542.0L639.2 544.5ZM635.1 542.0L628.7 537.7L631.2 539.4L635.1 542.0Z" fill="#2a2a2a"/>
<path d="M572.5 376.7L570.5 355.9L571.2 358.1L572.5 370.5ZM575.2 397.4L572.5 376.7L573.4 378.8L575.2 391.2ZM572.5 407.7L570.5 386.9L571.2 389.1L572.5 401.5ZM575.2 428.4L572.5 407.7L573.4 409.8L575.2 422.2ZM572.5 438.7L570.5 417.9L571.2 420.1L572.5 432.5ZM575.2 459.4L572.5 438.7L573.4 440.8L575.2 453.2ZM572.5 469.7L570.5 448.9L571.2 451.1L572.5 463.5ZM575.2 490.4L572.5 469.7L573.4 471.8L575.2 484.2ZM589.5 499.2L570.5 479.9L571.2 482.1L582.2 493.7ZM589.5 499.2L575.2 490.4L581.1 496.0L590.5 501.2ZM596.9 511.1L588.6 506.1L602.0 516.8L610.1 521.9ZM606.0 520.6L598.8 515.7L612.7 526.1L619.7 530.9ZM645.3 544.8L649.5 550.1L646.5 547.8L641.8 543.2ZM649.5 550.1L629.0 536.6L632.1 538.3L646.5 547.8ZM663.9 552.4L666.3 557.7L663.4 555.5L660.0 550.9ZM666.3 557.7L645.3 544.8L648.8 546.4L663.4 555.5ZM615.2 526.2L611.0 523.9L620.9 531.6L618.0 528.9ZM625.2 535.1L622.0 532.9L632.5 540.3L628.7 537.7ZM649.5 550.1L642.0 546.1L642.0 546.1L646.5 548.5ZM642.0 546.1L635.1 542.0L637.8 543.6L642.0 546.1ZM666.3 557.7L657.6 554.0L657.6 554.0L662.8 556.2ZM657.6 554.0L649.5 550.1L652.7 551.7L657.6 554.0ZM685.3 564.7L675.5 561.3L675.5 561.3L681.3 563.3ZM675.5 561.3L666.3 557.7L669.9 559.1L675.5 561.3ZM604.1 510.2L606.6 515.0L606.6 515.0L605.0 512.2ZM611.2 521.6L613.5 524.4L616.1 527.1L613.5 524.4ZM619.9 530.7L623.0 533.4L626.4 536.0L623.0 533.4ZM657.6 554.0L649.5 550.1L649.5 550.1L654.3 552.4ZM649.5 550.1L642.0 546.1L644.9 547.7L649.5 550.1ZM675.5 561.3L666.3 557.7L666.3 557.7L671.8 559.9ZM666.3 557.7L657.6 554.0L661.0 555.5L666.3 557.7Z" fill="#303030"/>
<path d="M578.6 387.1L575.2 366.4L576.4 368.5L578.6 380.9ZM582.7 407.6L578.6 387.1L580.1 389.1L582.7 401.4ZM578.6 418.1L575.2 397.4L576.4 399.5L578.6 411.9ZM582.7 438.6L578.6 418.1L580.1 420.1L582.7 432.4ZM578.6 449.1L575.2 428.4L576.4 430.5L578.6 442.9ZM582.7 469.6L578.6 449.1L580.1 451.1L582.7 463.4ZM578.6 480.1L575.2 459.4L576.4 461.5L578.6 473.9ZM582.7 500.6L578.6 480.1L580.1 482.1L582.7 494.4ZM595.4 509.1L575.2 490.4L576.4 492.5L588.1 503.8ZM595.4 509.1L582.7 500.6L588.6 506.1L596.9 511.1ZM617.7 529.7L611.7 525.0L626.0 534.9L631.9 539.6ZM632.1 538.3L627.2 533.7L641.8 543.2L646.5 547.8ZM684.8 559.4L685.3 564.7L682.6 562.6L680.4 558.0ZM685.3 564.7L663.9 552.4L667.9 553.9L682.6 562.6ZM707.7 565.6L706.3 571.1L703.8 569.0L702.9 564.4ZM706.3 571.1L684.8 559.4L689.2 560.7L703.8 569.0ZM732.4 571.2L729.2 576.7L726.9 574.7L727.3 570.1ZM729.2 576.7L707.7 565.6L712.5 566.8L726.9 574.7ZM606.6 515.0L595.4 509.1L602.6 514.5L607.8 516.9ZM637.8 543.6L635.6 541.4L646.5 548.5L642.0 546.1ZM706.3 571.1L695.5 568.0L695.5 568.0L701.9 569.8ZM695.5 568.0L685.3 564.7L689.3 566.0L695.5 568.0ZM729.2 576.7L717.5 574.0L717.5 574.0L724.5 575.6ZM717.5 574.0L706.3 571.1L710.7 572.2L717.5 574.0ZM753.8 581.7L741.3 579.3L741.3 579.3L748.8 580.7ZM741.3 579.3L729.2 576.7L734.0 577.8L741.3 579.3ZM609.7 519.7L613.5 524.4L613.5 524.4L611.2 521.6ZM631.2 539.4L635.1 542.0L639.2 544.5L635.1 542.0ZM644.9 547.7L649.5 550.1L654.3 552.4L649.5 550.1ZM695.5 568.0L685.3 564.7L685.3 564.7L691.4 566.7ZM685.3 564.7L675.5 561.3L679.4 562.7L685.3 564.7ZM717.5 574.0L706.3 571.1L706.3 571.1L713.0 572.8ZM706.3 571.1L695.5 568.0L699.8 569.2L706.3 571.1ZM741.3 579.3L729.2 576.7L729.2 576.7L736.4 578.3ZM729.2 576.7L717.5 574.0L722.1 575.1L729.2 576.7Z" fill="#363636"/>
<path d="M587.5 397.1L582.7 376.6L584.6 378.6L587.5 390.9ZM599.3 406.7L593.1 386.4L595.5 388.4L599.3 400.5ZM593.1 417.4L587.5 397.1L589.7 399.0L593.1 411.2ZM587.5 428.1L582.7 407.6L584.6 409.6L587.5 421.9ZM599.3 437.7L593.1 417.4L595.5 419.4L599.3 431.5ZM593.1 448.4L587.5 428.1L589.7 430.0L593.1 442.2ZM587.5 459.1L582.7 438.6L584.6 440.6L587.5 452.9ZM599.3 468.7L593.1 448.4L595.5 450.4L599.3 462.5ZM593.1 479.4L587.5 459.1L589.7 461.0L593.1 473.2ZM587.5 490.1L582.7 469.6L584.6 471.6L587.5 483.9ZM599.3 499.7L593.1 479.4L595.5 481.4L599.3 493.5ZM593.1 510.4L587.5 490.1L589.7 492.0L593.1 504.2ZM604.0 518.7L582.7 500.6L584.6 502.6L596.9 513.5ZM615.2 527.9L593.1 510.4L595.5 512.4L608.3 522.9ZM604.0 518.7L593.1 510.4L598.8 515.7L606.0 520.6ZM648.8 546.4L645.2 541.8L660.0 550.9L663.4 555.5ZM758.9 575.9L753.8 581.7L751.8 579.7L753.5 575.0ZM753.8 581.7L732.4 571.2L737.6 572.2L751.8 579.7ZM786.8 579.8L779.9 585.8L778.2 583.9L781.1 579.1ZM779.9 585.8L758.9 575.9L764.4 576.8L778.2 583.9ZM816.0 582.9L807.4 589.2L805.9 587.3L810.1 582.3ZM807.4 589.2L786.8 579.8L792.6 580.5L805.9 587.3ZM613.5 524.4L604.0 518.7L611.0 523.9L615.2 526.2ZM652.7 551.7L651.5 549.4L662.8 556.2L657.6 554.0ZM669.9 559.1L669.8 556.9L681.3 563.3L675.5 561.3ZM779.9 585.8L766.7 583.8L766.7 583.8L774.6 585.0ZM766.7 583.8L753.8 581.7L758.9 582.5L766.7 583.8ZM807.4 589.2L793.5 587.6L793.5 587.6L801.8 588.6ZM793.5 587.6L779.9 585.8L785.3 586.5L793.5 587.6ZM618.0 528.9L623.0 533.4L623.0 533.4L619.9 530.7ZM661.0 555.5L666.3 557.7L671.8 559.9L666.3 557.7ZM766.7 583.8L753.8 581.7L753.8 581.7L761.5 583.0ZM753.8 581.7L741.3 579.3L746.3 580.3L753.8 581.7ZM793.5 587.6L779.9 585.8L779.9 585.8L788.0 586.9ZM779.9 585.8L766.7 583.8L772.0 584.6L779.9 585.8ZM821.6 590.5L807.4 589.2L807.4 589.2L815.9 590.0ZM807.4 589.2L793.5 587.6L799.0 588.2L807.4 589.2Z" fill="#3c3c3c"/>
<path d="M825.3 450.0L845.7 430.7L843.5 439.3L831.6 450.5ZM857.4 451.9L876.9 432.0L875.4 440.6L864.0 452.1ZM890.3 452.7L908.8 432.4L907.9 441.0L896.9 452.8ZM841.3 466.6L857.4 451.9L857.4 458.1L847.7 466.9ZM873.8 467.9L890.3 452.7L890.3 458.9L880.4 468.1ZM825.3 481.0L841.3 466.6L841.3 472.8L831.6 481.5ZM857.4 482.9L873.8 467.9L873.8 474.1L864.0 483.1ZM890.3 483.7L906.9 468.3L906.9 474.5L896.9 483.8ZM841.3 497.6L857.4 482.9L857.4 489.1L847.7 497.9ZM873.8 498.9L890.3 483.7L890.3 489.9L880.4 499.1ZM825.3 512.0L841.3 497.6L841.3 503.8L831.6 512.5ZM857.4 513.9L873.8 498.9L873.8 505.1L864.0 514.1ZM890.3 514.7L906.9 499.3L906.9 505.5L896.9 514.8ZM841.3 528.6L857.4 513.9L857.4 520.1L847.7 528.9ZM873.8 529.9L890.3 514.7L890.3 520.9L880.4 530.1ZM825.3 543.0L841.3 528.6L841.3 534.8L831.6 543.5ZM857.4 544.9L873.8 529.9L873.8 536.1L864.0 545.1ZM890.3 545.7L906.9 530.3L906.9 536.5L896.9 545.8ZM841.3 559.6L857.4 544.9L857.4 551.1L847.7 559.9ZM873.8 560.9L890.3 545.7L890.3 551.9L880.4 561.1ZM825.3 574.0L841.3 559.6L841.3 565.8L831.6 574.5ZM857.4 575.9L873.8 560.9L873.8 567.1L864.0 576.1ZM890.3 576.7L906.9 561.3L906.9 567.5L896.9 576.8Z" fill="#d8d8d8"/>
<path d="M587.5 344.4L606.6 333.8L593.3 354.4L575.2 366.4ZM593.3 354.4L613.5 343.1L602.0 364.0L582.7 376.6ZM602.0 364.0L623.0 352.1L613.2 373.2L593.1 386.4ZM603.4 365.3L619.8 355.5L611.5 372.0L594.7 381.8ZM613.2 373.2L635.1 360.7L627.1 382.0L606.2 395.8ZM615.0 374.5L632.0 364.2L625.0 380.8L607.8 391.2ZM627.1 382.0L649.5 368.8L643.5 390.2L622.0 404.7ZM629.3 383.2L646.6 372.4L641.1 389.1L623.5 400.0ZM643.5 390.2L666.3 376.4L662.3 397.9L640.3 413.0ZM646.0 391.3L663.5 380.0L659.5 396.9L641.7 408.3ZM662.3 397.9L685.3 383.4L683.2 404.9L661.0 420.6ZM665.1 398.9L682.7 387.1L680.2 404.0L662.3 415.9ZM683.2 404.9L706.3 389.8L706.3 411.2L683.9 427.5ZM686.3 405.8L703.9 393.5L702.9 410.4L685.1 422.8ZM706.3 411.2L729.2 395.5L731.2 416.8L708.8 433.7ZM709.6 412.0L727.0 399.2L727.6 416.0L709.9 428.9ZM731.2 416.8L753.8 400.4L757.8 421.5L735.7 439.1ZM734.8 417.5L751.9 404.2L754.0 420.9L736.7 434.3ZM757.8 421.5L779.9 404.6L785.9 425.5L764.2 443.6ZM761.6 422.1L778.3 408.4L781.9 425.0L765.0 438.8ZM785.9 425.5L807.4 407.9L815.2 428.5L794.1 447.3ZM789.9 425.9L806.0 411.8L811.1 428.2L794.8 442.4ZM815.2 428.5L836.0 410.4L845.7 430.7L825.3 450.0ZM819.5 428.9L834.8 414.4L841.4 430.5L825.9 445.2ZM845.7 430.7L865.4 412.1L876.9 432.0L857.4 451.9ZM850.0 431.0L864.6 416.0L872.5 431.9L857.9 447.0ZM876.9 432.0L895.6 412.9L908.8 432.4L890.3 452.7ZM881.4 432.2L895.0 416.9L904.3 432.4L890.6 447.8ZM908.8 432.4L926.2 412.9L941.0 431.9L923.7 452.7ZM913.3 432.4L925.9 416.8L936.5 432.0L923.8 447.8ZM941.0 431.9L957.0 411.9L973.3 430.5L957.3 451.7ZM945.5 431.8L957.0 415.9L968.7 430.7L957.2 446.8ZM973.3 430.5L987.8 410.1L1005.4 428.2L990.8 449.7ZM977.8 430.2L988.1 414.1L1000.9 428.5L990.7 444.8ZM1005.4 428.2L1018.3 407.5L1037.2 425.0L1024.1 446.8ZM1009.9 427.8L1018.9 411.4L1032.7 425.5L1023.8 442.0ZM1037.2 425.0L1048.3 404.0L1068.3 420.9L1056.9 443.1ZM1041.6 424.5L1049.2 407.9L1064.0 421.5L1056.4 438.2ZM1068.3 420.9L1077.6 399.8L1098.5 416.0L1088.8 438.4ZM1072.6 420.3L1078.8 403.6L1094.4 416.8L1088.2 433.6ZM1098.5 416.0L1106.0 394.7L1127.7 410.4L1119.8 432.9ZM1102.7 415.3L1107.5 398.5L1123.7 411.2L1119.0 428.1ZM1127.7 410.4L1133.2 389.0L1155.5 404.0L1149.5 426.6ZM1131.7 409.5L1135.0 392.7L1151.7 404.9L1148.6 421.8ZM1155.5 404.0L1156.5 383.2L1166.1 401.2L1174.8 420.3ZM1159.3 403.0L1158.5 386.9L1166.1 401.2L1173.8 415.6ZM570.5 355.9L587.5 344.4L575.2 366.4L572.5 376.7ZM575.2 366.4L593.3 354.4L582.7 376.6L578.6 387.1ZM582.7 376.6L602.0 364.0L593.1 386.4L587.5 397.1ZM584.6 378.6L594.9 371.2L590.8 384.5L587.5 390.9ZM593.1 386.4L613.2 373.2L606.2 395.8L599.3 406.7ZM595.5 388.4L606.4 380.6L603.4 394.0L599.3 400.5ZM606.2 395.8L627.1 382.0L622.0 404.7L613.8 415.8ZM609.2 397.6L620.6 389.6L618.6 403.0L613.8 409.6ZM622.0 404.7L643.5 390.2L640.3 413.0L630.8 424.4ZM625.4 406.4L637.3 398.0L636.4 411.4L630.8 418.2ZM640.3 413.0L662.3 397.9L661.0 420.6L650.3 432.4ZM644.2 414.6L656.4 405.8L656.6 419.1L650.3 426.2ZM661.0 420.6L683.2 404.9L683.9 427.5L672.1 439.7ZM665.4 422.1L677.8 413.0L679.1 426.2L672.1 433.5ZM683.9 427.5L706.3 411.2L708.8 433.7L696.1 446.2ZM688.7 428.8L701.3 419.4L703.7 432.6L696.1 440.0ZM708.8 433.7L731.2 416.8L735.7 439.1L722.0 452.0ZM714.1 434.9L726.7 425.1L730.2 438.1L722.0 445.8ZM735.7 439.1L757.8 421.5L764.2 443.6L749.7 457.0ZM741.3 440.1L753.8 429.9L758.4 442.8L749.7 450.8ZM764.2 443.6L785.9 425.5L794.1 447.3L779.0 461.1ZM770.1 444.4L782.5 433.9L788.0 446.6L779.0 454.9ZM794.1 447.3L815.2 428.5L825.3 450.0L809.6 464.3ZM800.3 447.9L812.5 437.1L819.0 449.6L809.6 458.1ZM825.3 450.0L845.7 430.7L857.4 451.9L841.3 466.6ZM831.6 450.5L843.5 439.3L850.9 451.6L841.3 460.4ZM857.4 451.9L876.9 432.0L890.3 452.7L873.8 467.9ZM864.0 452.1L875.4 440.6L883.7 452.6L873.8 461.7ZM890.3 452.7L908.8 432.4L923.7 452.7L906.9 468.3ZM896.9 452.8L907.9 441.0L917.0 452.8L906.9 462.1ZM923.7 452.7L941.0 431.9L957.3 451.7L940.4 467.8ZM930.4 452.6L940.7 440.5L950.5 451.9L940.4 461.6ZM957.3 451.7L973.3 430.5L990.8 449.7L974.1 466.3ZM964.0 451.4L973.7 439.1L984.1 450.2L974.1 460.1ZM990.8 449.7L1005.4 428.2L1024.1 446.8L1007.5 463.9ZM997.5 449.2L1006.4 436.7L1017.5 447.5L1007.5 457.7ZM1024.1 446.8L1037.2 425.0L1056.9 443.1L1040.6 460.6ZM1030.7 446.2L1038.8 433.4L1050.4 443.9L1040.6 454.4ZM1056.9 443.1L1068.3 420.9L1088.8 438.4L1073.0 456.3ZM1063.3 442.2L1070.6 429.3L1082.5 439.4L1073.0 450.1ZM1088.8 438.4L1098.5 416.0L1119.8 432.9L1104.4 451.3ZM1095.1 437.4L1101.4 424.3L1113.7 434.1L1104.4 445.1ZM1119.8 432.9L1127.7 410.4L1149.5 426.6L1134.8 445.4ZM1125.8 431.7L1131.2 418.5L1143.6 427.9L1134.8 439.2ZM1149.5 426.6L1155.5 404.0L1174.8 420.3L1163.7 438.7ZM1155.2 425.3L1159.6 412.0L1172.1 421.1L1163.7 432.5ZM572.5 376.7L575.2 366.4L578.6 387.1L575.2 397.4ZM578.6 387.1L582.7 376.6L587.5 397.1L582.7 407.6ZM587.5 397.1L593.1 386.4L599.3 406.7L593.1 417.4ZM589.7 399.0L593.1 392.6L596.7 404.8L593.1 411.2ZM599.3 406.7L606.2 395.8L613.8 415.8L606.2 426.8ZM602.0 408.6L606.2 402.0L610.7 414.0L606.2 420.6ZM613.8 415.8L622.0 404.7L630.8 424.4L622.0 435.7ZM617.0 417.6L622.0 410.9L627.2 422.7L622.0 429.5ZM630.8 424.4L640.3 413.0L650.3 432.4L640.3 444.0ZM634.5 426.1L640.3 419.2L646.2 430.8L640.3 437.8ZM650.3 432.4L661.0 420.6L672.1 439.7L661.0 451.6ZM654.5 433.9L661.0 426.8L667.6 438.3L661.0 445.4ZM672.1 439.7L683.9 427.5L696.1 446.2L683.9 458.5ZM676.8 441.0L683.9 433.7L691.2 445.0L683.9 452.3ZM696.1 446.2L708.8 433.7L722.0 452.0L708.8 464.7ZM701.2 447.5L708.8 439.9L716.7 450.9L708.8 458.5ZM722.0 452.0L735.7 439.1L749.7 457.0L735.7 470.1ZM727.4 453.1L735.7 445.3L744.1 456.1L735.7 463.9ZM749.7 457.0L764.2 443.6L779.0 461.1L764.2 474.6ZM755.5 457.9L764.2 449.8L773.0 460.3L764.2 468.4ZM779.0 461.1L794.1 447.3L809.6 464.3L794.1 478.3ZM785.0 461.8L794.1 453.5L803.4 463.7L794.1 472.1ZM809.6 464.3L825.3 450.0L841.3 466.6L825.3 481.0ZM815.8 464.8L825.3 456.2L834.8 466.2L825.3 474.8ZM841.3 466.6L857.4 451.9L873.8 467.9L857.4 482.9ZM847.7 466.9L857.4 458.1L867.2 467.7L857.4 476.7ZM873.8 467.9L890.3 452.7L906.9 468.3L890.3 483.7ZM880.4 468.1L890.3 458.9L900.3 468.3L890.3 477.5ZM906.9 468.3L923.7 452.7L940.4 467.8L923.7 483.7ZM913.6 468.3L923.7 458.9L933.7 468.0L923.7 477.5ZM940.4 467.8L957.3 451.7L974.1 466.3L957.3 482.7ZM947.2 467.6L957.3 457.9L967.3 466.7L957.3 476.5ZM974.1 466.3L990.8 449.7L1007.5 463.9L990.8 480.7ZM980.8 465.9L990.8 455.9L1000.8 464.4L990.8 474.5ZM1007.5 463.9L1024.1 446.8L1040.6 460.6L1024.1 477.8ZM1014.2 463.3L1024.1 453.0L1034.0 461.3L1024.1 471.6ZM1040.6 460.6L1056.9 443.1L1073.0 456.3L1056.9 474.1ZM1047.1 459.8L1056.9 449.3L1066.5 457.3L1056.9 467.9ZM1073.0 456.3L1088.8 438.4L1104.4 451.3L1088.8 469.4ZM1079.3 455.4L1088.8 444.6L1098.2 452.3L1088.8 463.2ZM1104.4 451.3L1119.8 432.9L1134.8 445.4L1119.8 463.9ZM1110.6 450.1L1119.8 439.1L1128.8 446.6L1119.8 457.7ZM1134.8 445.4L1149.5 426.6L1163.7 438.7L1149.5 457.6ZM1140.7 444.1L1149.5 432.8L1158.1 440.1L1149.5 451.4ZM1163.7 438.7L1174.8 420.3L1174.8 435.8L1174.8 451.3ZM1169.4 437.3L1174.8 426.5L1174.8 435.8L1174.8 445.1ZM570.5 386.9L572.5 376.7L575.2 397.4L572.5 407.7ZM575.2 397.4L578.6 387.1L582.7 407.6L578.6 418.1ZM582.7 407.6L587.5 397.1L593.1 417.4L587.5 428.1ZM584.6 409.6L587.5 403.3L590.8 415.5L587.5 421.9ZM593.1 417.4L599.3 406.7L606.2 426.8L599.3 437.7ZM595.5 419.4L599.3 412.9L603.4 425.0L599.3 431.5ZM606.2 426.8L613.8 415.8L622.0 435.7L613.8 446.8ZM609.2 428.6L613.8 422.0L618.6 434.0L613.8 440.6ZM622.0 435.7L630.8 424.4L640.3 444.0L630.8 455.4ZM625.4 437.4L630.8 430.6L636.4 442.4L630.8 449.2ZM640.3 444.0L650.3 432.4L661.0 451.6L650.3 463.4ZM644.2 445.6L650.3 438.6L656.6 450.1L650.3 457.2ZM661.0 451.6L672.1 439.7L683.9 458.5L672.1 470.7ZM665.4 453.1L672.1 445.9L679.1 457.2L672.1 464.5ZM683.9 458.5L696.1 446.2L708.8 464.7L696.1 477.2ZM688.7 459.8L696.1 452.4L703.7 463.6L696.1 471.0ZM708.8 464.7L722.0 452.0L735.7 470.1L722.0 483.0ZM714.1 465.9L722.0 458.2L730.2 469.1L722.0 476.8ZM735.7 470.1L749.7 457.0L764.2 474.6L749.7 488.0ZM741.3 471.1L749.7 463.2L758.4 473.8L749.7 481.8ZM764.2 474.6L779.0 461.1L794.1 478.3L779.0 492.1ZM770.1 475.4L779.0 467.3L788.0 477.6L779.0 485.9ZM794.1 478.3L809.6 464.3L825.3 481.0L809.6 495.3ZM800.3 478.9L809.6 470.5L819.0 480.6L809.6 489.1ZM825.3 481.0L841.3 466.6L857.4 482.9L841.3 497.6ZM831.6 481.5L841.3 472.8L850.9 482.6L841.3 491.4ZM857.4 482.9L873.8 467.9L890.3 483.7L873.8 498.9ZM864.0 483.1L873.8 474.1L883.7 483.6L873.8 492.7ZM890.3 483.7L906.9 468.3L923.7 483.7L906.9 499.3ZM896.9 483.8L906.9 474.5L917.0 483.8L906.9 493.1ZM923.7 483.7L940.4 467.8L957.3 482.7L940.4 498.8ZM930.4 483.6L940.4 474.0L950.5 482.9L940.4 492.6ZM957.3 482.7L974.1 466.3L990.8 480.7L974.1 497.3ZM964.0 482.4L974.1 472.5L984.1 481.2L974.1 491.1ZM990.8 480.7L1007.5 463.9L1024.1 477.8L1007.5 494.9ZM997.5 480.2L1007.5 470.1L1017.5 478.5L1007.5 488.7ZM1024.1 477.8L1040.6 460.6L1056.9 474.1L1040.6 491.6ZM1030.7 477.2L1040.6 466.8L1050.4 474.9L1040.6 485.4ZM1056.9 474.1L1073.0 456.3L1088.8 469.4L1073.0 487.3ZM1063.3 473.2L1073.0 462.5L1082.5 470.4L1073.0 481.1ZM1088.8 469.4L1104.4 451.3L1119.8 463.9L1104.4 482.3ZM1095.1 468.4L1104.4 457.5L1113.7 465.1L1104.4 476.1ZM1119.8 463.9L1134.8 445.4L1149.5 457.6L1134.8 476.4ZM1125.8 462.7L1134.8 451.6L1143.6 458.9L1134.8 470.2ZM1149.5 457.6L1163.7 438.7L1174.8 451.3L1163.7 469.7ZM1155.2 456.3L1163.7 444.9L1172.1 452.1L1163.7 463.5ZM572.5 407.7L575.2 397.4L578.6 418.1L575.2 428.4ZM578.6 418.1L582.7 407.6L587.5 428.1L582.7 438.6ZM587.5 428.1L593.1 417.4L599.3 437.7L593.1 448.4ZM589.7 430.0L593.1 423.6L596.7 435.8L593.1 442.2ZM599.3 437.7L606.2 426.8L613.8 446.8L606.2 457.8ZM602.0 439.6L606.2 433.0L610.7 445.0L606.2 451.6ZM613.8 446.8L622.0 435.7L630.8 455.4L622.0 466.7ZM617.0 448.6L622.0 441.9L627.2 453.7L622.0 460.5ZM630.8 455.4L640.3 444.0L650.3 463.4L640.3 475.0ZM634.5 457.1L640.3 450.2L646.2 461.8L640.3 468.8ZM650.3 463.4L661.0 451.6L672.1 470.7L661.0 482.6ZM654.5 464.9L661.0 457.8L667.6 469.3L661.0 476.4ZM672.1 470.7L683.9 458.5L696.1 477.2L683.9 489.5ZM676.8 472.0L683.9 464.7L691.2 476.0L683.9 483.3ZM696.1 477.2L708.8 464.7L722.0 483.0L708.8 495.7ZM701.2 478.5L708.8 470.9L716.7 481.9L708.8 489.5ZM722.0 483.0L735.7 470.1L749.7 488.0L735.7 501.1ZM727.4 484.1L735.7 476.3L744.1 487.1L735.7 494.9ZM749.7 488.0L764.2 474.6L779.0 492.1L764.2 505.6ZM755.5 488.9L764.2 480.8L773.0 491.3L764.2 499.4ZM779.0 492.1L794.1 478.3L809.6 495.3L794.1 509.3ZM785.0 492.8L794.1 484.5L803.4 494.7L794.1 503.1ZM809.6 495.3L825.3 481.0L841.3 497.6L825.3 512.0ZM815.8 495.8L825.3 487.2L834.8 497.2L825.3 505.8ZM841.3 497.6L857.4 482.9L873.8 498.9L857.4 513.9ZM847.7 497.9L857.4 489.1L867.2 498.7L857.4 507.7ZM873.8 498.9L890.3 483.7L906.9 499.3L890.3 514.7ZM880.4 499.1L890.3 489.9L900.3 499.3L890.3 508.5ZM906.9 499.3L923.7 483.7L940.4 498.8L923.7 514.7ZM913.6 499.3L923.7 489.9L933.7 499.0L923.7 508.5ZM940.4 498.8L957.3 482.7L974.1 497.3L957.3 513.7ZM947.2 498.6L957.3 488.9L967.3 497.7L957.3 507.5ZM974.1 497.3L990.8 480.7L1007.5 494.9L990.8 511.7ZM980.8 496.9L990.8 486.9L1000.8 495.4L990.8 505.5ZM1007.5 494.9L1024.1 477.8L1040.6 491.6L1024.1 508.8ZM1014.2 494.3L1024.1 484.0L1034.0 492.3L1024.1 502.6ZM1040.6 491.6L1056.9 474.1L1073.0 487.3L1056.9 505.1ZM1047.1 490.8L1056.9 480.3L1066.5 488.3L1056.9 498.9ZM1073.0 487.3L1088.8 469.4L1104.4 482.3L1088.8 500.4ZM1079.3 486.4L1088.8 475.6L1098.2 483.3L1088.8 494.2ZM1104.4 482.3L1119.8 463.9L1134.8 476.4L1119.8 494.9ZM1110.6 481.1L1119.8 470.1L1128.8 477.6L1119.8 488.7ZM1134.8 476.4L1149.5 457.6L1163.7 469.7L1149.5 488.6ZM1140.7 475.1L1149.5 463.8L1158.1 471.1L1149.5 482.4ZM1163.7 469.7L1174.8 451.3L1174.8 466.8L1174.8 482.3ZM1169.4 468.3L1174.8 457.5L1174.8 466.8L1174.8 476.1ZM570.5 417.9L572.5 407.7L575.2 428.4L572.5 438.7ZM575.2 428.4L578.6 418.1L582.7 438.6L578.6 449.1ZM582.7 438.6L587.5 428.1L593.1 448.4L587.5 459.1ZM584.6 440.6L587.5 434.3L590.8 446.5L587.5 452.9ZM593.1 448.4L599.3 437.7L606.2 457.8L599.3 468.7ZM595.5 450.4L599.3 443.9L603.4 456.0L599.3 462.5ZM606.2 457.8L613.8 446.8L622.0 466.7L613.8 477.8ZM609.2 459.6L613.8 453.0L618.6 465.0L613.8 471.6ZM622.0 466.7L630.8 455.4L640.3 475.0L630.8 486.4ZM625.4 468.4L630.8 461.6L636.4 473.4L630.8 480.2ZM640.3 475.0L650.3 463.4L661.0 482.6L650.3 494.4ZM644.2 476.6L650.3 469.6L656.6 481.1L650.3 488.2ZM661.0 482.6L672.1 470.7L683.9 489.5L672.1 501.7ZM665.4 484.1L672.1 476.9L679.1 488.2L672.1 495.5ZM683.9 489.5L696.1 477.2L708.8 495.7L696.1 508.2ZM688.7 490.8L696.1 483.4L703.7 494.6L696.1 502.0ZM708.8 495.7L722.0 483.0L735.7 501.1L722.0 514.0ZM714.1 496.9L722.0 489.2L730.2 500.1L722.0 507.8ZM735.7 501.1L749.7 488.0L764.2 505.6L749.7 519.0ZM741.3 502.1L749.7 494.2L758.4 504.8L749.7 512.8ZM764.2 505.6L779.0 492.1L794.1 509.3L779.0 523.1ZM770.1 506.4L779.0 498.3L788.0 508.6L779.0 516.9ZM794.1 509.3L809.6 495.3L825.3 512.0L809.6 526.3ZM800.3 509.9L809.6 501.5L819.0 511.6L809.6 520.1ZM825.3 512.0L841.3 497.6L857.4 513.9L841.3 528.6ZM831.6 512.5L841.3 503.8L850.9 513.6L841.3 522.4ZM857.4 513.9L873.8 498.9L890.3 514.7L873.8 529.9ZM864.0 514.1L873.8 505.1L883.7 514.6L873.8 523.7ZM890.3 514.7L906.9 499.3L923.7 514.7L906.9 530.3ZM896.9 514.8L906.9 505.5L917.0 514.8L906.9 524.1ZM923.7 514.7L940.4 498.8L957.3 513.7L940.4 529.8ZM930.4 514.6L940.4 505.0L950.5 513.9L940.4 523.6ZM957.3 513.7L974.1 497.3L990.8 511.7L974.1 528.3ZM964.0 513.4L974.1 503.5L984.1 512.2L974.1 522.1ZM990.8 511.7L1007.5 494.9L1024.1 508.8L1007.5 525.9ZM997.5 511.2L1007.5 501.1L1017.5 509.5L1007.5 519.7ZM1024.1 508.8L1040.6 491.6L1056.9 505.1L1040.6 522.6ZM1030.7 508.2L1040.6 497.8L1050.4 505.9L1040.6 516.4ZM1056.9 505.1L1073.0 487.3L1088.8 500.4L1073.0 518.3ZM1063.3 504.2L1073.0 493.5L1082.5 501.4L1073.0 512.1ZM1088.8 500.4L1104.4 482.3L1119.8 494.9L1104.4 513.3ZM1095.1 499.4L1104.4 488.5L1113.7 496.1L1104.4 507.1ZM1119.8 494.9L1134.8 476.4L1149.5 488.6L1134.8 507.4ZM1125.8 493.7L1134.8 482.6L1143.6 489.9L1134.8 501.2ZM1149.5 488.6L1163.7 469.7L1174.8 482.3L1163.7 500.7ZM1155.2 487.3L1163.7 475.9L1172.1 483.1L1163.7 494.5ZM572.5 438.7L575.2 428.4L578.6 449.1L575.2 459.4ZM578.6 449.1L582.7 438.6L587.5 459.1L582.7 469.6ZM587.5 459.1L593.1 448.4L599.3 468.7L593.1 479.4ZM589.7 461.0L593.1 454.6L596.7 466.8L593.1 473.2ZM599.3 468.7L606.2 457.8L613.8 477.8L606.2 488.8ZM602.0 470.6L606.2 464.0L610.7 476.0L606.2 482.6ZM613.8 477.8L622.0 466.7L630.8 486.4L622.0 497.7ZM617.0 479.6L622.0 472.9L627.2 484.7L622.0 491.5ZM630.8 486.4L640.3 475.0L650.3 494.4L640.3 506.0ZM634.5 488.1L640.3 481.2L646.2 492.8L640.3 499.8ZM650.3 494.4L661.0 482.6L672.1 501.7L661.0 513.6ZM654.5 495.9L661.0 488.8L667.6 500.3L661.0 507.4ZM672.1 501.7L683.9 489.5L696.1 508.2L683.9 520.5ZM676.8 503.0L683.9 495.7L691.2 507.0L683.9 514.3ZM696.1 508.2L708.8 495.7L722.0 514.0L708.8 526.7ZM701.2 509.5L708.8 501.9L716.7 512.9L708.8 520.5ZM722.0 514.0L735.7 501.1L749.7 519.0L735.7 532.1ZM727.4 515.1L735.7 507.3L744.1 518.1L735.7 525.9ZM749.7 519.0L764.2 505.6L779.0 523.1L764.2 536.6ZM755.5 519.9L764.2 511.8L773.0 522.3L764.2 530.4ZM779.0 523.1L794.1 509.3L809.6 526.3L794.1 540.3ZM785.0 523.8L794.1 515.5L803.4 525.7L794.1 534.1ZM809.6 526.3L825.3 512.0L841.3 528.6L825.3 543.0ZM815.8 526.8L825.3 518.2L834.8 528.2L825.3 536.8ZM841.3 528.6L857.4 513.9L873.8 529.9L857.4 544.9ZM847.7 528.9L857.4 520.1L867.2 529.7L857.4 538.7ZM873.8 529.9L890.3 514.7L906.9 530.3L890.3 545.7ZM880.4 530.1L890.3 520.9L900.3 530.3L890.3 539.5ZM906.9 530.3L923.7 514.7L940.4 529.8L923.7 545.7ZM913.6 530.3L923.7 520.9L933.7 530.0L923.7 539.5ZM940.4 529.8L957.3 513.7L974.1 528.3L957.3 544.7ZM947.2 529.6L957.3 519.9L967.3 528.7L957.3 538.5ZM974.1 528.3L990.8 511.7L1007.5 525.9L990.8 542.7ZM980.8 527.9L990.8 517.9L1000.8 526.4L990.8 536.5ZM1007.5 525.9L1024.1 508.8L1040.6 522.6L1024.1 539.8ZM1014.2 525.3L1024.1 515.0L1034.0 523.3L1024.1 533.6ZM1040.6 522.6L1056.9 505.1L1073.0 518.3L1056.9 536.1ZM1047.1 521.8L1056.9 511.3L1066.5 519.3L1056.9 529.9ZM1073.0 518.3L1088.8 500.4L1104.4 513.3L1088.8 531.4ZM1079.3 517.4L1088.8 506.6L1098.2 514.3L1088.8 525.2ZM1104.4 513.3L1119.8 494.9L1134.8 507.4L1119.8 525.9ZM1110.6 512.1L1119.8 501.1L1128.8 508.6L1119.8 519.7ZM1134.8 507.4L1149.5 488.6L1163.7 500.7L1149.5 519.6ZM1140.7 506.1L1149.5 494.8L1158.1 502.1L1149.5 513.4ZM1163.7 500.7L1174.8 482.3L1174.8 497.8L1174.8 513.3ZM1169.4 499.3L1174.8 488.5L1174.8 497.8L1174.8 507.1ZM570.5 448.9L572.5 438.7L575.2 459.4L572.5 469.7ZM575.2 459.4L578.6 449.1L582.7 469.6L578.6 480.1ZM582.7 469.6L587.5 459.1L593.1 479.4L587.5 490.1ZM584.6 471.6L587.5 465.3L590.8 477.5L587.5 483.9ZM593.1 479.4L599.3 468.7L606.2 488.8L599.3 499.7ZM595.5 481.4L599.3 474.9L603.4 487.0L599.3 493.5ZM606.2 488.8L613.8 477.8L622.0 497.7L613.8 508.8ZM609.2 490.6L613.8 484.0L618.6 496.0L613.8 502.6ZM622.0 497.7L630.8 486.4L640.3 506.0L630.8 517.4ZM625.4 499.4L630.8 492.6L636.4 504.4L630.8 511.2ZM640.3 506.0L650.3 494.4L661.0 513.6L650.3 525.4ZM644.2 507.6L650.3 500.6L656.6 512.1L650.3 519.2ZM661.0 513.6L672.1 501.7L683.9 520.5L672.1 532.7ZM665.4 515.1L672.1 507.9L679.1 519.2L672.1 526.5ZM683.9 520.5L696.1 508.2L708.8 526.7L696.1 539.2ZM688.7 521.8L696.1 514.4L703.7 525.6L696.1 533.0ZM708.8 526.7L722.0 514.0L735.7 532.1L722.0 545.0ZM714.1 527.9L722.0 520.2L730.2 531.1L722.0 538.8ZM735.7 532.1L749.7 519.0L764.2 536.6L749.7 550.0ZM741.3 533.1L749.7 525.2L758.4 535.8L749.7 543.8ZM764.2 536.6L779.0 523.1L794.1 540.3L779.0 554.1ZM770.1 537.4L779.0 529.3L788.0 539.6L779.0 547.9ZM794.1 540.3L809.6 526.3L825.3 543.0L809.6 557.3ZM800.3 540.9L809.6 532.5L819.0 542.6L809.6 551.1ZM825.3 543.0L841.3 528.6L857.4 544.9L841.3 559.6ZM831.6 543.5L841.3 534.8L850.9 544.6L841.3 553.4ZM857.4 544.9L873.8 529.9L890.3 545.7L873.8 560.9ZM864.0 545.1L873.8 536.1L883.7 545.6L873.8 554.7ZM890.3 545.7L906.9 530.3L923.7 545.7L906.9 561.3ZM896.9 545.8L906.9 536.5L917.0 545.8L906.9 555.1ZM923.7 545.7L940.4 529.8L957.3 544.7L940.4 560.8ZM930.4 545.6L940.4 536.0L950.5 544.9L940.4 554.6ZM957.3 544.7L974.1 528.3L990.8 542.7L974.1 559.3ZM964.0 544.4L974.1 534.5L984.1 543.2L974.1 553.1ZM990.8 542.7L1007.5 525.9L1024.1 539.8L1007.5 556.9ZM997.5 542.2L1007.5 532.1L1017.5 540.5L1007.5 550.7ZM1024.1 539.8L1040.6 522.6L1056.9 536.1L1040.6 553.6ZM1030.7 539.2L1040.6 528.8L1050.4 536.9L1040.6 547.4ZM1056.9 536.1L1073.0 518.3L1088.8 531.4L1073.0 549.3ZM1063.3 535.2L1073.0 524.5L1082.5 532.4L1073.0 543.1ZM1088.8 531.4L1104.4 513.3L1119.8 525.9L1104.4 544.3ZM1095.1 530.4L1104.4 519.5L1113.7 527.1L1104.4 538.1ZM1119.8 525.9L1134.8 507.4L1149.5 519.6L1134.8 538.4ZM1125.8 524.7L1134.8 513.6L1143.6 520.9L1134.8 532.2ZM1149.5 519.6L1163.7 500.7L1174.8 513.3L1163.7 531.7ZM1155.2 518.3L1163.7 506.9L1172.1 514.1L1163.7 525.5ZM572.5 469.7L575.2 459.4L578.6 480.1L575.2 490.4ZM578.6 480.1L582.7 469.6L587.5 490.1L582.7 500.6ZM587.5 490.1L593.1 479.4L599.3 499.7L593.1 510.4ZM589.7 492.0L593.1 485.6L596.7 497.8L593.1 504.2ZM599.3 499.7L606.2 488.8L613.8 508.8L606.2 519.8ZM602.0 501.6L606.2 495.0L610.7 507.0L606.2 513.6ZM613.8 508.8L622.0 497.7L630.8 517.4L622.0 528.7ZM617.0 510.6L622.0 503.9L627.2 515.7L622.0 522.5ZM630.8 517.4L640.3 506.0L650.3 525.4L640.3 537.0ZM634.5 519.1L640.3 512.2L646.2 523.8L640.3 530.8ZM650.3 525.4L661.0 513.6L672.1 532.7L661.0 544.6ZM654.5 526.9L661.0 519.8L667.6 531.3L661.0 538.4ZM672.1 532.7L683.9 520.5L696.1 539.2L683.9 551.5ZM676.8 534.0L683.9 526.7L691.2 538.0L683.9 545.3ZM696.1 539.2L708.8 526.7L722.0 545.0L708.8 557.7ZM701.2 540.5L708.8 532.9L716.7 543.9L708.8 551.5ZM722.0 545.0L735.7 532.1L749.7 550.0L735.7 563.1ZM727.4 546.1L735.7 538.3L744.1 549.1L735.7 556.9ZM749.7 550.0L764.2 536.6L779.0 554.1L764.2 567.6ZM755.5 550.9L764.2 542.8L773.0 553.3L764.2 561.4ZM779.0 554.1L794.1 540.3L809.6 557.3L794.1 571.3ZM785.0 554.8L794.1 546.5L803.4 556.7L794.1 565.1ZM809.6 557.3L825.3 543.0L841.3 559.6L825.3 574.0ZM815.8 557.8L825.3 549.2L834.8 559.2L825.3 567.8ZM841.3 559.6L857.4 544.9L873.8 560.9L857.4 575.9ZM847.7 559.9L857.4 551.1L867.2 560.7L857.4 569.7ZM873.8 560.9L890.3 545.7L906.9 561.3L890.3 576.7ZM880.4 561.1L890.3 551.9L900.3 561.3L890.3 570.5ZM906.9 561.3L923.7 545.7L940.4 560.8L923.7 576.7ZM913.6 561.3L923.7 551.9L933.7 561.0L923.7 570.5ZM940.4 560.8L957.3 544.7L974.1 559.3L957.3 575.7ZM947.2 560.6L957.3 550.9L967.3 559.7L957.3 569.5ZM974.1 559.3L990.8 542.7L1007.5 556.9L990.8 573.7ZM980.8 558.9L990.8 548.9L1000.8 557.4L990.8 567.5ZM1007.5 556.9L1024.1 539.8L1040.6 553.6L1024.1 570.8ZM1014.2 556.3L1024.1 546.0L1034.0 554.3L1024.1 564.6ZM1040.6 553.6L1056.9 536.1L1073.0 549.3L1056.9 567.1ZM1047.1 552.8L1056.9 542.3L1066.5 550.3L1056.9 560.9ZM1073.0 549.3L1088.8 531.4L1104.4 544.3L1088.8 562.4ZM1079.3 548.4L1088.8 537.6L1098.2 545.3L1088.8 556.2ZM1104.4 544.3L1119.8 525.9L1134.8 538.4L1119.8 556.9ZM1110.6 543.1L1119.8 532.1L1128.8 539.6L1119.8 550.7ZM1134.8 538.4L1149.5 519.6L1163.7 531.7L1149.5 550.6ZM1140.7 537.1L1149.5 525.8L1158.1 533.1L1149.5 544.4ZM1163.7 531.7L1174.8 513.3L1174.8 528.8L1174.8 544.3ZM1169.4 530.3L1174.8 519.5L1174.8 528.8L1174.8 538.1ZM570.5 479.9L572.5 469.7L575.2 490.4L589.5 499.2ZM575.2 490.4L578.6 480.1L582.7 500.6L595.4 509.1ZM582.7 500.6L587.5 490.1L593.1 510.4L604.0 518.7ZM584.6 502.6L587.5 496.3L590.8 508.5L596.9 513.5ZM593.1 510.4L599.3 499.7L606.2 519.8L615.2 527.9ZM595.5 512.4L599.3 505.9L603.4 518.0L608.3 522.9ZM606.2 519.8L613.8 508.8L622.0 528.7L629.0 536.6ZM609.2 521.6L613.8 515.0L618.6 527.0L622.4 531.8ZM622.0 528.7L630.8 517.4L640.3 537.0L645.3 544.8ZM625.4 530.4L630.8 523.6L636.4 535.4L639.0 540.2ZM640.3 537.0L650.3 525.4L661.0 544.6L663.9 552.4ZM644.2 538.6L650.3 531.6L656.6 543.1L658.1 547.9ZM661.0 544.6L672.1 532.7L683.9 551.5L684.8 559.4ZM665.4 546.1L672.1 538.9L679.1 550.2L679.3 555.0ZM683.9 551.5L696.1 539.2L708.8 557.7L707.7 565.6ZM688.7 552.8L696.1 545.4L703.7 556.6L702.7 561.4ZM708.8 557.7L722.0 545.0L735.7 563.1L732.4 571.2ZM714.1 558.9L722.0 551.2L730.2 562.1L727.9 567.1ZM735.7 563.1L749.7 550.0L764.2 567.6L758.9 575.9ZM741.3 564.1L749.7 556.2L758.4 566.8L754.9 571.9ZM764.2 567.6L779.0 554.1L794.1 571.3L786.8 579.8ZM770.1 568.4L779.0 560.3L788.0 570.6L783.4 575.9ZM794.1 571.3L809.6 557.3L825.3 574.0L816.0 582.9ZM800.3 571.9L809.6 563.5L819.0 573.6L813.2 579.0ZM825.3 574.0L841.3 559.6L857.4 575.9L846.3 585.1ZM831.6 574.5L841.3 565.8L850.9 575.6L844.1 581.2ZM857.4 575.9L873.8 560.9L890.3 576.7L877.4 586.4ZM864.0 576.1L873.8 567.1L883.7 576.6L875.8 582.6ZM890.3 576.7L906.9 561.3L923.7 576.7L909.0 586.8ZM896.9 576.8L906.9 567.5L917.0 576.8L908.1 583.0ZM923.7 576.7L940.4 560.8L957.3 575.7L941.1 586.2ZM930.4 576.6L940.4 567.0L950.5 575.9L940.8 582.4ZM957.3 575.7L974.1 559.3L990.8 573.7L973.2 584.8ZM964.0 575.4L974.1 565.5L984.1 574.2L973.5 581.0ZM990.8 573.7L1007.5 556.9L1024.1 570.8L1005.1 582.5ZM997.5 573.2L1007.5 563.1L1017.5 571.5L1006.2 578.6ZM1024.1 570.8L1040.6 553.6L1056.9 567.1L1036.7 579.3ZM1030.7 570.2L1040.6 559.8L1050.4 567.9L1038.4 575.4ZM1056.9 567.1L1073.0 549.3L1088.8 562.4L1067.6 575.3ZM1063.3 566.2L1073.0 555.5L1082.5 563.4L1069.9 571.3ZM1088.8 562.4L1104.4 544.3L1119.8 556.9L1097.7 570.5ZM1095.1 561.4L1104.4 550.5L1113.7 558.1L1100.6 566.3ZM1119.8 556.9L1134.8 538.4L1149.5 550.6L1126.7 564.8ZM1125.8 555.7L1134.8 544.6L1143.6 551.9L1130.2 560.6ZM1149.5 550.6L1163.7 531.7L1174.8 544.3L1154.4 558.4ZM1155.2 549.3L1163.7 537.9L1172.1 545.1L1158.4 554.1ZM589.5 499.2L575.2 490.4L595.4 509.1L606.6 515.0ZM595.4 509.1L582.7 500.6L604.0 518.7L613.5 524.4ZM604.0 518.7L593.1 510.4L615.2 527.9L623.0 533.4ZM606.0 520.6L598.8 515.7L612.7 526.1L619.7 530.9ZM615.2 527.9L606.2 519.8L629.0 536.6L635.1 542.0ZM617.7 529.7L611.7 525.0L626.0 534.9L631.9 539.6ZM629.0 536.6L622.0 528.7L645.3 544.8L649.5 550.1ZM632.1 538.3L627.2 533.7L641.8 543.2L646.5 547.8ZM645.3 544.8L640.3 537.0L663.9 552.4L666.3 557.7ZM648.8 546.4L645.2 541.8L660.0 550.9L663.4 555.5ZM663.9 552.4L661.0 544.6L684.8 559.4L685.3 564.7ZM667.9 553.9L665.6 549.4L680.4 558.0L682.6 562.6ZM684.8 559.4L683.9 551.5L707.7 565.6L706.3 571.1ZM689.2 560.7L688.1 556.2L702.9 564.4L703.8 569.0ZM707.7 565.6L708.8 557.7L732.4 571.2L729.2 576.7ZM712.5 566.8L712.7 562.3L727.3 570.1L726.9 574.7ZM732.4 571.2L735.7 563.1L758.9 575.9L753.8 581.7ZM737.6 572.2L739.1 567.6L753.5 575.0L751.8 579.7ZM758.9 575.9L764.2 567.6L786.8 579.8L779.9 585.8ZM764.4 576.8L767.2 572.0L781.1 579.1L778.2 583.9ZM786.8 579.8L794.1 571.3L816.0 582.9L807.4 589.2ZM792.6 580.5L796.6 575.6L810.1 582.3L805.9 587.3ZM816.0 582.9L825.3 574.0L846.3 585.1L836.0 591.7ZM822.0 583.4L827.3 578.3L840.2 584.7L834.8 589.9ZM846.3 585.1L857.4 575.9L877.4 586.4L865.4 593.4ZM852.5 585.4L858.9 580.1L871.1 586.2L864.6 591.5ZM877.4 586.4L890.3 576.7L909.0 586.8L895.6 594.2ZM883.7 586.5L891.3 581.0L902.7 586.7L895.0 592.4ZM909.0 586.8L923.7 576.7L941.1 586.2L926.2 594.1ZM915.4 586.7L924.1 580.9L934.6 586.4L925.9 592.3ZM941.1 586.2L957.3 575.7L973.2 584.8L957.0 593.2ZM947.5 586.0L957.2 579.9L966.7 585.2L957.0 591.4ZM973.2 584.8L990.8 573.7L1005.1 582.5L987.8 591.4ZM979.6 584.4L990.2 578.0L998.7 583.0L988.1 589.6ZM1005.1 582.5L1024.1 570.8L1036.7 579.3L1018.3 588.7ZM1011.5 581.9L1023.0 575.2L1030.4 580.0L1018.9 586.9ZM1036.7 579.3L1056.9 567.1L1067.6 575.3L1048.3 585.3ZM1042.9 578.6L1055.2 571.5L1061.5 576.2L1049.3 583.4ZM1067.6 575.3L1088.8 562.4L1097.7 570.5L1077.6 581.0ZM1073.7 574.4L1086.7 566.9L1091.8 571.5L1078.9 579.1ZM1097.7 570.5L1119.8 556.9L1126.7 564.8L1106.0 576.0ZM1103.6 569.4L1117.2 561.5L1121.0 566.0L1107.5 574.0ZM1126.7 564.8L1149.5 550.6L1154.4 558.4L1133.2 570.2ZM1132.3 563.6L1146.4 555.3L1148.9 559.8L1135.0 568.2ZM1154.4 558.4L1174.8 544.3L1164.9 555.7L1156.5 564.5ZM1159.7 557.1L1171.3 549.1L1164.9 555.7L1158.5 562.4ZM602.3 505.4L589.5 499.2L606.6 515.0L604.1 510.2ZM606.6 515.0L595.4 509.1L613.5 524.4L609.7 519.7ZM613.5 524.4L604.0 518.7L623.0 533.4L618.0 528.9ZM615.2 526.2L611.0 523.9L620.9 531.6L618.0 528.9ZM623.0 533.4L615.2 527.9L635.1 542.0L628.7 537.7ZM625.2 535.1L622.0 532.9L632.5 540.3L628.7 537.7ZM635.1 542.0L629.0 536.6L649.5 550.1L642.0 546.1ZM637.8 543.6L635.6 541.4L646.5 548.5L642.0 546.1ZM649.5 550.1L645.3 544.8L666.3 557.7L657.6 554.0ZM652.7 551.7L651.5 549.4L662.8 556.2L657.6 554.0ZM666.3 557.7L663.9 552.4L685.3 564.7L675.5 561.3ZM669.9 559.1L669.8 556.9L681.3 563.3L675.5 561.3ZM685.3 564.7L684.8 559.4L706.3 571.1L695.5 568.0ZM689.3 566.0L690.2 563.7L701.9 569.8L695.5 568.0ZM706.3 571.1L707.7 565.6L729.2 576.7L717.5 574.0ZM710.7 572.2L712.7 569.9L724.5 575.6L717.5 574.0ZM729.2 576.7L732.4 571.2L753.8 581.7L741.3 579.3ZM734.0 577.8L736.9 575.3L748.8 580.7L741.3 579.3ZM753.8 581.7L758.9 575.9L779.9 585.8L766.7 583.8ZM758.9 582.5L762.8 579.9L774.6 585.0L766.7 583.8ZM779.9 585.8L786.8 579.8L807.4 589.2L793.5 587.6ZM785.3 586.5L790.2 583.8L801.8 588.6L793.5 587.6ZM807.4 589.2L816.0 582.9L836.0 591.7L821.6 590.5ZM813.0 589.7L818.8 586.8L830.2 591.2L821.6 590.5ZM836.0 591.7L846.3 585.1L865.4 593.4L850.6 592.6ZM841.8 592.1L848.5 588.9L859.5 593.1L850.6 592.6ZM865.4 593.4L877.4 586.4L895.6 594.2L880.4 593.9ZM871.4 593.6L878.9 590.2L889.5 594.1L880.4 593.9ZM895.6 594.2L909.0 586.8L926.2 594.1L910.8 594.2ZM901.7 594.2L910.0 590.5L920.0 594.2L910.8 594.2ZM926.2 594.1L941.1 586.2L957.0 593.2L941.6 593.7ZM932.3 594.0L941.3 590.0L950.8 593.4L941.6 593.7ZM957.0 593.2L973.2 584.8L987.8 591.4L972.4 592.4ZM963.1 592.9L972.8 588.6L981.6 591.8L972.4 592.4ZM987.8 591.4L1005.1 582.5L1018.3 588.7L1003.1 590.2ZM993.9 590.9L1004.1 586.4L1012.2 589.3L1003.1 590.2ZM1018.3 588.7L1036.7 579.3L1048.3 585.3L1033.4 587.1ZM1024.3 588.1L1035.0 583.3L1042.4 586.0L1033.4 587.1ZM1048.3 585.3L1067.6 575.3L1077.6 581.0L1063.1 583.2ZM1054.2 584.5L1065.3 579.3L1071.8 581.9L1063.1 583.2ZM1077.6 581.0L1097.7 570.5L1106.0 576.0L1092.0 578.6ZM1083.4 580.1L1094.8 574.6L1100.4 577.0L1092.0 578.6ZM1106.0 576.0L1126.7 564.8L1133.2 570.2L1119.8 573.2ZM1111.6 574.9L1123.2 569.1L1127.9 571.4L1119.8 573.2ZM1133.2 570.2L1154.4 558.4L1156.5 564.5L1146.3 567.1ZM1138.5 569.0L1150.3 562.8L1154.0 565.1L1146.3 567.1ZM604.1 510.2L606.6 515.0L609.7 519.7L606.6 515.0ZM609.7 519.7L613.5 524.4L618.0 528.9L613.5 524.4ZM618.0 528.9L623.0 533.4L628.7 537.7L623.0 533.4ZM619.9 530.7L623.0 533.4L626.4 536.0L623.0 533.4ZM628.7 537.7L635.1 542.0L642.0 546.1L635.1 542.0ZM631.2 539.4L635.1 542.0L639.2 544.5L635.1 542.0ZM642.0 546.1L649.5 550.1L657.6 554.0L649.5 550.1ZM644.9 547.7L649.5 550.1L654.3 552.4L649.5 550.1ZM657.6 554.0L666.3 557.7L675.5 561.3L666.3 557.7ZM661.0 555.5L666.3 557.7L671.8 559.9L666.3 557.7ZM675.5 561.3L685.3 564.7L695.5 568.0L685.3 564.7ZM679.4 562.7L685.3 564.7L691.4 566.7L685.3 564.7ZM695.5 568.0L706.3 571.1L717.5 574.0L706.3 571.1ZM699.8 569.2L706.3 571.1L713.0 572.8L706.3 571.1ZM717.5 574.0L729.2 576.7L741.3 579.3L729.2 576.7ZM722.1 575.1L729.2 576.7L736.4 578.3L729.2 576.7ZM741.3 579.3L753.8 581.7L766.7 583.8L753.8 581.7ZM746.3 580.3L753.8 581.7L761.5 583.0L753.8 581.7ZM766.7 583.8L779.9 585.8L793.5 587.6L779.9 585.8ZM772.0 584.6L779.9 585.8L788.0 586.9L779.9 585.8ZM793.5 587.6L807.4 589.2L821.6 590.5L807.4 589.2ZM799.0 588.2L807.4 589.2L815.9 590.0L807.4 589.2ZM821.6 590.5L836.0 591.7L850.6 592.6L836.0 591.7ZM827.3 591.0L836.0 591.7L844.7 592.3L836.0 591.7ZM850.6 592.6L865.4 593.4L880.4 593.9L865.4 593.4ZM856.5 592.9L865.4 593.4L874.4 593.7L865.4 593.4ZM880.4 593.9L895.6 594.2L910.8 594.2L895.6 594.2ZM886.5 594.0L895.6 594.2L904.7 594.2L895.6 594.2ZM910.8 594.2L926.2 594.1L941.6 593.7L926.2 594.1ZM917.0 594.2L926.2 594.1L935.4 593.9L926.2 594.1ZM941.6 593.7L957.0 593.2L972.4 592.4L957.0 593.2ZM947.7 593.5L957.0 593.2L966.2 592.7L957.0 593.2ZM972.4 592.4L987.8 591.4L1003.1 590.2L987.8 591.4ZM978.5 592.0L987.8 591.4L997.0 590.7L987.8 591.4ZM1003.1 590.2L1018.3 588.7L1033.4 587.1L1018.3 588.7ZM1009.2 589.6L1018.3 588.7L1027.4 587.8L1018.3 588.7ZM1033.4 587.1L1048.3 585.3L1063.1 583.2L1048.3 585.3ZM1039.4 586.4L1048.3 585.3L1057.2 584.1L1048.3 585.3ZM1063.1 583.2L1077.6 581.0L1092.0 578.6L1077.6 581.0ZM1068.9 582.4L1077.6 581.0L1086.3 579.6L1077.6 581.0ZM1092.0 578.6L1106.0 576.0L1119.8 573.2L1106.0 576.0ZM1097.6 577.6L1106.0 576.0L1114.3 574.3L1106.0 576.0ZM1119.8 573.2L1133.2 570.2L1146.3 567.1L1133.2 570.2ZM1125.2 572.0L1133.2 570.2L1141.1 568.3L1133.2 570.2ZM1146.3 567.1L1156.5 564.5L1156.5 564.5L1156.5 564.5ZM1151.5 565.8L1156.5 564.5L1156.5 564.5L1156.5 564.5Z" fill="none" stroke="#000" stroke-width="0.7"/>
<polygon points="1282.0,327.3 1286.0,323.8 1289.6,320.2 1292.9,316.7 1295.9,313.1 1298.5,309.6 1300.8,306.0 1302.8,302.4 1304.4,298.8 1305.6,295.2 1306.5,291.6 1307.1,288.0 1307.3,284.4 1307.2,280.8 1306.7,277.3 1305.8,273.7 1304.6,270.2 1303.0,266.8 1301.2,263.3 1298.9,259.9 1296.3,256.5 1293.4,253.2 1290.1,249.9 1286.5,246.7 1282.6,243.5 1278.3,240.4 1273.8,237.3 1268.9,234.3 1263.7,231.4 1258.1,228.5 1252.3,225.7 1246.2,223.0 1239.8,220.3 1233.1,217.7 1226.1,215.2 1218.9,212.8 1211.4,210.5 1203.6,208.2 1195.6,206.1 1187.4,204.0 1178.9,202.0 1170.2,200.2 1161.3,198.4 1152.1,196.7 1142.8,195.2 1133.3,193.7 1123.6,192.3 1113.7,191.1 1103.7,189.9 1093.6,188.9 1083.2,187.9 1072.8,187.1 1062.3,186.4 1051.6,185.8 1040.8,185.3 1030.0,185.0 1019.1,184.7 1008.1,184.5 997.1,184.5 986.0,184.6 974.9,184.8 963.7,185.1 952.6,185.5 941.4,186.0 930.3,186.7 919.2,187.4 908.1,188.3 897.1,189.3 886.1,190.4 875.2,191.6 864.4,192.9 853.7,194.3 843.1,195.8 832.5,197.4 822.1,199.1 811.9,200.9 801.7,202.8 791.7,204.8 781.9,206.9 772.3,209.1 762.8,211.4 753.5,213.8 744.5,216.2 735.6,218.7 726.9,221.4 718.5,224.0 710.3,226.8 702.4,229.6 694.7,232.5 687.3,235.5 680.1,238.5 673.2,241.6 666.6,244.8 660.2,248.0 654.2,251.2 648.4,254.5 643.0,257.9 637.9,261.3 633.0,264.7 628.5,268.1 624.4,271.6 620.5,275.1 617.0,278.7 613.8,282.2 611.0,285.8 608.5,289.4 606.3,293.0 604.5,296.6 603.1,300.2 602.0,303.8 601.2,307.4 600.8,311.0 600.7,314.6 601.0,318.1 601.7,321.7 602.6,325.2 604.0,328.7 605.7,332.1 607.7,335.6 610.1,339.0 612.8,342.3 615.9,345.6 619.3,348.9 623.0,352.1 627.1,355.3 631.5,358.4 636.2,361.4 641.2,364.4 646.5,367.3 652.2,370.2 658.1,372.9 664.4,375.6 670.9,378.3 677.7,380.8 684.8,383.3 692.1,385.7 699.7,387.9 707.6,390.2 715.7,392.3 724.0,394.3 732.6,396.2 741.4,398.1 750.4,399.8 759.6,401.4 769.0,402.9 778.6,404.4 788.4,405.7 798.3,406.9 808.4,408.0 818.6,409.0 829.0,409.9 839.4,410.7 850.0,411.3 860.7,411.9 871.5,412.3 882.4,412.7 893.4,412.9 904.4,413.0 915.4,413.0 926.5,412.8 937.6,412.6 948.8,412.3 959.9,411.8 971.1,411.2 982.2,410.5 993.3,409.7 1004.3,408.8 1015.3,407.8 1026.3,406.7 1037.1,405.4 1047.9,404.1 1058.6,402.6 1069.2,401.1 1079.7,399.4 1090.0,397.7 1100.3,395.8 1110.3,393.9 1120.2,391.8 1130.0,389.7 1139.6,387.5 1149.0,385.2 1149.0,385.2 887.5,327.7 887.5,327.7 881.3,326.2 875.5,324.5 870.3,322.7 865.5,320.7 861.3,318.6 857.7,316.4 854.6,314.0 852.2,311.6 850.4,309.1 849.2,306.5 848.7,303.9 848.8,301.2 849.6,298.6 851.1,295.9 853.1,293.2 855.8,290.6 859.1,288.1 862.9,285.6 867.4,283.1 872.3,280.8 877.8,278.6 883.8,276.5 890.1,274.5 896.9,272.7 904.0,271.1 911.4,269.6 919.1,268.3 927.0,267.2 935.1,266.3 943.3,265.6 951.5,265.1 959.8,264.8 968.0,264.7 976.2,264.8 984.2,265.1 992.0,265.7 999.6,266.4 1006.9,267.4 1013.9,268.5 1020.5,269.8 1020.5,269.8 1282.0,327.3" fill="#a0a0a0"/>
<path d="M1272.1 236.3 L1269.2 234.5 L1266.2 232.8 L1263.0 231.0 L1259.8 229.3 L1256.4 227.6 L1253.0 226.0 L1249.4 224.4 L1245.7 222.7 L1242.0 221.2 L1238.1 219.6 L1234.1 218.1 L1230.0 216.6 L1225.9 215.1 L1221.6 213.7 L1217.3 212.3 L1212.8 210.9 L1208.3 209.5 L1203.6 208.2 L1198.9 206.9 L1194.1 205.7 L1189.2 204.5 L1184.3 203.3 L1179.2 202.1 L1174.1 201.0 L1168.9 199.9 L1163.6 198.9 L1158.3 197.8 L1152.9 196.9 L1147.4 195.9 L1141.8 195.0 L1136.2 194.1 L1130.5 193.3 L1124.8 192.5 L1119.0 191.7 L1113.1 191.0 L1107.2 190.3 L1101.2 189.7 L1095.2 189.0 L1089.1 188.5 L1083.0 187.9 L1076.8 187.4 L1070.6 187.0 L1064.4 186.5 L1058.1 186.2 L1051.7 185.8 L1045.4 185.5 L1039.0 185.3 L1032.6 185.0 L1026.1 184.8 L1019.7 184.7 L1013.2 184.6 L1006.6 184.5 L1000.1 184.5 L993.6 184.5 L987.0 184.6 L980.4 184.7 L973.8 184.8 L967.2 185.0 L960.6 185.2 L954.0 185.4 L947.4 185.7 L940.8 186.1 L934.2 186.4 L927.7 186.9 L921.1 187.3 L914.5 187.8 L908.0 188.3 L901.4 188.9 L894.9 189.5 L888.4 190.1 L882.0 190.8 L875.5 191.5 L869.1 192.3 L862.7 193.1 L856.3 193.9 L850.0 194.8 L843.7 195.7 L837.5 196.6 L831.3 197.6 L825.1 198.6 L819.0 199.6 L812.9 200.7 L806.9 201.8 L800.9 203.0 L795.0 204.2 L789.1 205.4 L783.3 206.6 L777.6 207.9 L771.9 209.2 L766.2 210.6 L760.7 211.9 L755.2 213.3 L749.8 214.8 L744.4 216.2 L739.1 217.7 L733.9 219.2 L728.8 220.8 L723.8 222.3 L718.8 223.9 L713.9 225.6 L709.1 227.2 L704.4 228.9 L699.8 230.6 L695.2 232.3 L690.8 234.1 L686.4 235.8 L682.2 237.6 L678.0 239.4 L673.9 241.3 L670.0 243.1 L666.1 245.0 L662.3 246.9 L658.6 248.8 L655.1 250.7 L651.6 252.7 L648.2 254.6 L645.0 256.6 L641.8 258.6 L638.8 260.6 L635.9 262.6M600.7 313.4 L600.8 316.4 L601.2 319.5 L601.8 322.5 L602.7 325.5 L603.9 328.5 L605.3 331.4 L607.0 334.4 L608.9 337.3 L611.0 340.2 L613.4 343.0 L616.1 345.8 L619.0 348.6 L622.1 351.4 L625.5 354.1 L629.1 356.8 L633.0 359.4 L637.1 362.0 L641.4 364.5 L646.0 367.0 L650.7 369.4 L655.7 371.8 L660.9 374.2 L666.4 376.5 L672.0 378.7 L677.8 380.9 L683.9 383.0 L690.1 385.0 L696.5 387.0 L703.1 388.9 L709.9 390.8 L716.9 392.6 L724.0 394.3 L731.4 395.9 L738.8 397.5 L746.5 399.0 L754.2 400.5 L762.2 401.8 L770.2 403.1 L778.4 404.3 L786.7 405.5 L795.2 406.5 L803.7 407.5 L812.4 408.4 L821.2 409.2 L830.0 410.0 L839.0 410.6 L848.0 411.2 L857.2 411.7 L866.4 412.1 L875.6 412.5 L884.9 412.7 L894.3 412.9 L903.7 413.0 L913.1 413.0 L922.6 412.9 L932.1 412.7 L941.6 412.5 L951.1 412.2 L960.6 411.8 L970.1 411.3 L979.6 410.7 L989.1 410.0 L998.6 409.3 L1008.0 408.5 L1017.4 407.6 L1026.7 406.6 L1036.0 405.6 L1045.2 404.4 L1054.4 403.2 L1063.5 401.9 L1072.5 400.6 L1081.4 399.1 L1090.3 397.6 L1099.0 396.1 L1107.6 394.4 L1116.1 392.7 L1124.5 390.9 L1132.8 389.1 L1140.9 387.1 L1149.0 385.2 L1149.0 385.2 L887.5 327.7 L887.5 327.7 L881.3 326.2 L875.5 324.5 L870.3 322.7 L865.5 320.7 L861.3 318.6 L857.7 316.4 L854.6 314.0 L852.2 311.6 L850.4 309.1 L849.2 306.5 L848.7 303.9 L848.8 301.2 L849.6 298.6 L851.1 295.9 L853.1 293.2 L855.8 290.6 L859.1 288.1 L862.9 285.6 L867.4 283.1 L872.3 280.8 L877.8 278.6 L883.8 276.5 L890.1 274.5 L896.9 272.7 L904.0 271.1 L911.4 269.6 L919.1 268.3 L927.0 267.2 L935.1 266.3 L943.3 265.6 L951.5 265.1 L959.8 264.8 L968.0 264.7 L976.2 264.8 L984.2 265.1 L992.0 265.7 L999.6 266.4 L1006.9 267.4 L1013.9 268.5 L1020.5 269.8 L1020.5 269.8 L1282.0 327.3 L1282.0 327.3 L1284.4 325.2 L1286.7 323.0 L1288.9 320.9 L1291.0 318.8 L1293.0 316.6 L1294.8 314.5 L1296.5 312.3 L1298.1 310.2 L1299.6 308.0 L1300.9 305.8 L1302.1 303.7 L1303.2 301.5 L1304.2 299.3 L1305.0 297.1 L1305.7 295.0 L1306.3 292.8 L1306.7 290.6 L1307.0 288.4 L1307.2 286.3 L1307.3 284.1" fill="none" stroke="#000" stroke-width="1"/>
<line x1="951" y1="300" x2="952" y2="342" stroke="#7a10f0" stroke-width="1.2"/>
<g opacity="0.92"><text x="947" y="530" font-size="16.5" fill="#f07a1a" stroke="#f07a1a" stroke-width="0.4" font-family="Liberation Sans,sans-serif" textLength="82" lengthAdjust="spacingAndGlyphs">智造资料网</text>
<text x="947" y="538.5" font-size="4.5" fill="#f08020" font-family="Liberation Sans,sans-serif" textLength="82" lengthAdjust="spacingAndGlyphs">INTELLIGENT MANUFACTURING DATA</text>
<path d="M892 517 V539 H935 V517 M896 512 V536 M900 509 V533 M927 509 V533 M931 512 V536" stroke="#f07a1a" stroke-width="2.2" fill="none"/>
<path d="M909 511 Q902 520 907 529 Q912 534 916 531 Q912 528 912 522 Q913 515 920 513 Q914 509 909 511Z" fill="#f5a21a"/><path d="M915 533 Q924 526 921 516 Q925 524 922 531Z" fill="#f5a21a"/><path d="M908 538 h12" stroke="#f05a1a" stroke-width="2"/></g>
<g><path d="M84.5 944.5 L99 938 L118 942.5 L103 949.5Z" fill="rgba(200,200,80,0.45)" stroke="#f0e000" stroke-width="1"/><path d="M99 913.5 L117 918 L102.5 925.5 V948" fill="rgba(220,220,230,0.25)" stroke="#d8d8d8" stroke-width="0.9"/><path d="M99 913.5 V937" stroke="#d8d8d8" stroke-width="0.9"/><path d="M93 936 L119 942" stroke="#e01010" stroke-width="2"/><path d="M93 933 L101 935 L99 940Z" fill="#e01010"/><path d="M119.5 941 L117 878" stroke="#10d0e0" stroke-width="2.4"/><path d="M113 882 L117 869 L121 882Z" fill="#10d0e0"/><path d="M119 943 L95 954" stroke="#10c010" stroke-width="2.4"/><path d="M88 955 L97 949 L98 957Z" fill="#10c010"/><circle cx="120" cy="942" r="3.4" fill="#6a6a6a"/><text x="111" y="868" font-size="11" fill="#d0d0d0" font-family="Liberation Sans,sans-serif">Z</text><text x="79" y="962" font-size="11" fill="#d0d0d0" font-family="Liberation Sans,sans-serif">Y</text><path d="M83 930 L91 938 M91 930 L83 938" stroke="#e01010" stroke-width="1"/></g>
</g></svg>
<div class="vb" style="left:64px;top:113px"></div>
<div class="vb" style="left:92px;top:113px"></div>
<div class="vb" style="left:120px;top:113px"></div>
<div class="vb" style="left:148px;top:113px"></div>
<div class="vb" style="left:176px;top:113px"></div>
<div class="vb" style="left:204px;top:113px"></div>
<div class="vb" style="left:232px;top:113px"></div>
<div class="vb" style="left:260px;top:113px"></div>
<div class="vb" style="left:288px;top:113px"></div>
<div class="vb" style="left:316px;top:113px"></div>
<div class="vb" style="left:344px;top:113px"></div>
<div class="vb" style="left:64px;top:141px"></div>
<div class="vb" style="left:64px;top:169px"></div>
<div class="vb" style="left:64px;top:197px;background:#8f8a6a;border:1px solid #e0c060"></div>
<div class="vb" style="left:64px;top:225px"></div>
<div class="vb" style="left:64px;top:253px"></div>
<svg class="ic" style="left:66px;top:115px" width="20" height="20" viewBox="0 0 20 20"><path d="M3 5h14M3 10h14M3 15h14" stroke="#3d5a90" stroke-width="2.6" stroke-linecap="round"/></svg>
<svg class="ic" style="left:94px;top:115px" width="20" height="20" viewBox="0 0 20 20"><rect x="5" y="5" width="10" height="10" fill="#e8f0fc" stroke="#a0a8b8" stroke-width="0.6"/><path d="M1 1h3M1 1v3M19 1h-3M19 1v3M1 19h3M1 19v-3M19 19h-3M19 19v-3" stroke="#30c030" stroke-width="1.6"/></svg>
<svg class="ic" style="left:122px;top:115px" width="20" height="20" viewBox="0 0 20 20"><g transform="translate(3 2) scale(0.85)"><path d="M11 12 L17 18" stroke="#707070" stroke-width="3"/><circle cx="8" cy="8" r="6" fill="#b9d3f0" stroke="#707880" stroke-width="1.6"/><path d="M5 7 a3 3 0 0 1 3 -3" stroke="#fff" stroke-width="1.2" fill="none"/></g><path d="M1 5 h3 M1 9 h3 M2 13 h3" stroke="#b0b8c8" stroke-width="1.2"/></svg>
<svg class="ic" style="left:150px;top:115px" width="20" height="20" viewBox="0 0 20 20"><path d="M2 13 L10 8 L18 13 L10 18Z" fill="none" stroke="#666" stroke-width="0.5"/><path d="M10 13 V2" stroke="#2070e0" stroke-width="1.6"/><path d="M8 4 L10 1 L12 4z" fill="#2070e0"/><path d="M10 13 L16 7" stroke="#30c030" stroke-width="1.4"/><path d="M10 13 L16 17" stroke="#e02020" stroke-width="1.6"/><circle cx="10" cy="13" r="1.3" fill="#ddd"/></svg>
<svg class="ic" style="left:176px;top:113px" width="24" height="24" viewBox="0 1 24 24"><path d="M3.5 9.6 L12.6 6 L21.7 9 V19 L12.6 24 L3.5 18.7Z M3.5 9.6 L12.6 13.6 L21.7 9 M12.6 13.6 V24 M3.5 18.7 L12.6 16 L21.7 19 M12.6 6 V16" fill="none" stroke="#000" stroke-width="1.1"/><path d="M3.5 9.6 L12.6 6 L21.7 9 L12.6 13.6Z" fill="#36cc2a" stroke="#000" stroke-width="1.1"/></svg>
<svg class="ic" style="left:204px;top:113px" width="24" height="24" viewBox="0 1 24 24"><path d="M3.5 9.6 L12.6 6 L21.7 9 V19 L12.6 24 L3.5 18.7Z M3.5 9.6 L12.6 13.6 L21.7 9 M12.6 13.6 V24 M3.5 18.7 L12.6 16 L21.7 19 M12.6 6 V16" fill="none" stroke="#000" stroke-width="1.1"/><path d="M3.5 18.7 L12.6 16 L21.7 19 L12.6 24Z" fill="#36cc2a" stroke="#000" stroke-width="1.1"/></svg>
<svg class="ic" style="left:232px;top:113px" width="24" height="24" viewBox="0 1 24 24"><path d="M3.5 9.6 L12.6 6 L21.7 9 V19 L12.6 24 L3.5 18.7Z M3.5 9.6 L12.6 13.6 L21.7 9 M12.6 13.6 V24 M3.5 18.7 L12.6 16 L21.7 19 M12.6 6 V16" fill="none" stroke="#000" stroke-width="1.1"/><path d="M3.5 9.6 L12.6 6 L12.6 16 L3.5 18.7Z" fill="#36cc2a" stroke="#000" stroke-width="1.1"/></svg>
<svg class="ic" style="left:260px;top:113px" width="24" height="24" viewBox="0 1 24 24"><path d="M3.5 9.6 L12.6 6 L21.7 9 V19 L12.6 24 L3.5 18.7Z M3.5 9.6 L12.6 13.6 L21.7 9 M12.6 13.6 V24 M3.5 18.7 L12.6 16 L21.7 19 M12.6 6 V16" fill="none" stroke="#000" stroke-width="1.1"/><path d="M12.6 13.6 L21.7 9 L21.7 19 L12.6 24Z" fill="#36cc2a" stroke="#000" stroke-width="1.1"/></svg>
<svg class="ic" style="left:288px;top:113px" width="24" height="24" viewBox="0 1 24 24"><path d="M3.5 9.6 L12.6 6 L21.7 9 V19 L12.6 24 L3.5 18.7Z M3.5 9.6 L12.6 13.6 L21.7 9 M12.6 13.6 V24 M3.5 18.7 L12.6 16 L21.7 19 M12.6 6 V16" fill="none" stroke="#000" stroke-width="1.1"/><path d="M3.5 9.6 L12.6 13.6 L12.6 24 L3.5 18.7Z" fill="#36cc2a" stroke="#000" stroke-width="1.1"/></svg>
<svg class="ic" style="left:316px;top:113px" width="24" height="24" viewBox="0 1 24 24"><path d="M3.5 9.6 L12.6 6 L21.7 9 V19 L12.6 24 L3.5 18.7Z M3.5 9.6 L12.6 13.6 L21.7 9 M12.6 13.6 V24 M3.5 18.7 L12.6 16 L21.7 19 M12.6 6 V16" fill="none" stroke="#000" stroke-width="1.1"/><path d="M12.6 6 L21.7 9 L21.7 19 L12.6 16Z" fill="#36cc2a" stroke="#000" stroke-width="1.1"/></svg>
<svg class="ic" style="left:344px;top:113px" width="24" height="24" viewBox="0 1 24 24"><path d="M3.5 9.6 L12.6 6 L21.7 9 L12.6 13.6Z" fill="#7ef06e"/><path d="M3.5 9.6 L12.6 13.6 L12.6 24 L3.5 18.7Z" fill="#22b822"/><path d="M12.6 13.6 L21.7 9 L21.7 19 L12.6 24Z" fill="#4ad83a"/><path d="M3.5 9.6 L12.6 6 L21.7 9 V19 L12.6 24 L3.5 18.7Z M3.5 9.6 L12.6 13.6 L21.7 9 M12.6 13.6 V24" fill="none" stroke="#10a010" stroke-width="0.8"/></svg>
<svg class="ic" style="left:66px;top:143px" width="20" height="20" viewBox="0 0 20 20"><path d="M5 4.2 v11.6 a5.0 2.2 0 0 0 10 0 v-11.6" fill="none" stroke="#222" stroke-width="0.9"/><ellipse cx="10.0" cy="4.2" rx="5.0" ry="2.2" fill="none" stroke="#222" stroke-width="0.9"/></svg>
<svg class="ic" style="left:66px;top:171px" width="20" height="20" viewBox="0 0 20 20"><path d="M5 4.2 v11.6 a5.0 2.2 0 0 0 10 0 v-11.6" fill="none" stroke="#222" stroke-width="0.9"/><ellipse cx="10.0" cy="4.2" rx="5.0" ry="2.2" fill="none" stroke="#222" stroke-width="0.9"/></svg>
<svg class="ic" style="left:66px;top:199px" width="20" height="20" viewBox="0 0 20 20"><path d="M5 4.2 v11.6 a5.0 2.2 0 0 0 10 0 v-11.6" fill="#4a7ac8" stroke="#222" stroke-width="0.9"/><ellipse cx="10.0" cy="4.2" rx="5.0" ry="2.2" fill="#9ab8e8" stroke="#222" stroke-width="0.9"/></svg>
<svg class="ic" style="left:66px;top:227px" width="20" height="20" viewBox="0 0 20 20"><path d="M5 4.2 v11.6 a5.0 2.2 0 0 0 10 0 v-11.6" fill="#e8eef8" stroke="#333" stroke-width="0.9"/><ellipse cx="10.0" cy="4.2" rx="5.0" ry="2.2" fill="#e8eef8" stroke="#333" stroke-width="0.9"/></svg>
<svg class="ic" style="left:66px;top:255px" width="20" height="20" viewBox="0 0 20 20"><path d="M5 4.2 v11.6 a5.0 2.2 0 0 0 10 0 v-11.6" fill="none" stroke="#333" stroke-width="0.9"/><ellipse cx="10.0" cy="4.2" rx="5.0" ry="2.2" fill="none" stroke="#333" stroke-width="0.9"/><path d="M7 5 L9 18 M10 5 L12 18 M13 5 L11 17" stroke="#333" stroke-width="0.7"/></svg>
<div id="status" class="a"></div>
<div class="a" style="left:2px;top:1020px;width:1918px;height:1px;background:#a3a7b3"></div>
<div class="grip" style="left:1337px;top:1004px;height:15px;width:3px;background-image:linear-gradient(#fff 50%,#a7adbd 50%);background-size:3px 3px"></div>
<div class="a" style="left:1341px;top:1003px;width:131px;height:16px;background:#fff"></div>
<div class="grip" style="left:1473px;top:1004px;height:15px;width:3px;background-image:linear-gradient(#fff 50%,#a7adbd 50%);background-size:3px 3px"></div>
<div class="a" style="left:1486px;top:1003px;font-size:12px;line-height:14px;white-space:nowrap">绝对 XY 上视图</div>
<div class="a" style="left:1593px;top:1004px;width:1px;height:15px;background:#9aa0ae"></div>
<div class="a" style="left:1601px;top:1004px;font-size:12px;line-height:14px;white-space:nowrap">绝对视图</div>
<div class="grip" style="left:1658px;top:1004px;height:15px;width:3px;background-image:linear-gradient(#fff 50%,#a7adbd 50%);background-size:3px 3px"></div>
<div class="a" style="left:1668px;top:1004px;font-size:12px;line-height:14px;font-weight:bold;white-space:nowrap">LAYER0</div>
<div class="a" style="left:1726px;top:1004px;width:1px;height:15px;background:#9aa0ae"></div>
<div class="a" style="left:1757px;top:1004px;width:1px;height:15px;background:#9aa0ae"></div>
<div class="a" style="left:1762px;top:1005px;width:32px;height:12px;background:#4b6390"></div>
<div class="a" style="left:1805px;top:1005px;width:32px;height:12px;background:#4b6390"></div>
<div class="a" style="left:1848px;top:1005px;width:32px;height:12px;background:#4b6390"></div>
<div class="a" style="left:1800px;top:1004px;width:1px;height:15px;background:#9aa0ae"></div>
<div class="a" style="left:1843px;top:1004px;width:1px;height:15px;background:#9aa0ae"></div>
<div class="a" style="left:1886px;top:1004px;width:1px;height:15px;background:#9aa0ae"></div>
<svg class="ic" style="left:1893px;top:1003px" width="14" height="14" viewBox="0 0 14 14"><circle cx="7" cy="7" r="6.2" fill="#2050c0"/><path d="M3 4 q3 -2 4 1 q-2 2 1 4 q-1 3 -3 2 q-2 -3 -2 -7z M9 2 q3 2 3 5 q-2 -1 -3 -2z" fill="#40b030"/></svg>
<div class="a" style="left:1132px;top:1023px;width:1px;height:16px;background:#9aa0ae"></div>
<div class="a" style="left:1175px;top:1023px;width:1px;height:16px;background:#9aa0ae"></div>
<div class="a" style="left:1206px;top:1023px;width:1px;height:16px;background:#9aa0ae"></div>
<div class="a" style="left:1237px;top:1023px;width:1px;height:16px;background:#9aa0ae"></div>
<div class="a" style="left:1268px;top:1023px;width:1px;height:16px;background:#9aa0ae"></div>
<div class="a" style="left:1299px;top:1023px;width:1px;height:16px;background:#9aa0ae"></div>
<div class="a" style="left:1330px;top:1023px;width:1px;height:16px;background:#9aa0ae"></div>
<div class="a" style="left:1361px;top:1023px;width:1px;height:16px;background:#9aa0ae"></div>
<div class="a" style="left:1392px;top:1023px;width:1px;height:16px;background:#9aa0ae"></div>
<div class="a" style="left:1423px;top:1023px;width:1px;height:16px;background:#9aa0ae"></div>
<div class="a" style="left:1454px;top:1023px;width:1px;height:16px;background:#9aa0ae"></div>
<div class="a" style="left:1580px;top:1023px;width:1px;height:16px;background:#9aa0ae"></div>
<div class="a" style="left:1654px;top:1023px;width:1px;height:16px;background:#9aa0ae"></div>
<div class="a" style="left:1141px;top:1024px;font-size:12px;line-height:14px;white-space:nowrap">拴牢</div>
<svg class="ic" style="left:1181.0px;top:1021.0px" width="18" height="18" viewBox="0 0 18 18"><rect x="1" y="1" width="16" height="16" fill="#c8ccd8" stroke="#5a6070" stroke-width="1.4"/><path d="M4 8 A5 5 0 0 1 13 6 l1.5 -1.5 v5 h-5 l1.5 -1.5 A3 3 0 0 0 6 8z" fill="#e86080"/><path d="M14 10 A5 5 0 0 1 5 12 l-1.5 1.5 v-5 h5 l-1.5 1.5 A3 3 0 0 0 12 10z" fill="#e86080"/></svg>
<div class="a" style="left:1211px;top:1021px;width:19px;height:19px;background:#fbe28a"></div>
<svg class="ic" style="left:1211.0px;top:1021.0px" width="18" height="18" viewBox="0 0 18 18"><path d="M3 3 L9 1 L15 6 L9 9Z" fill="#c040c0"/><circle cx="6" cy="5" r="3" fill="#f0e040"/><path d="M7 6 L16 14 L12 14 L14 18 L12 18 L10 15 L8 17Z" fill="#e8e8f0" stroke="#555" stroke-width="0.7"/></svg>
<svg class="ic" style="left:1242.0px;top:1021.0px" width="18" height="18" viewBox="0 0 18 18"><rect x="3" y="8" width="9" height="9" fill="#dde6f5" stroke="#3a5aa0" stroke-width="0.8"/><path d="M5 11h2v2h-2zM8 13h2v2h-2z" fill="#3a6ac0"/><path d="M2 9 L8 3 L13 6 L17 4 L16 8 L10 10Z" fill="#e8b060" stroke="#7a5020" stroke-width="0.6"/></svg>
<svg class="ic" style="left:1273.0px;top:1021.0px" width="18" height="18" viewBox="0 0 18 18"><path d="M5 6 Q5 1 9 1 Q14 1 13 6 Q12 8 9 9 V12" fill="none" stroke="#4a7ad0" stroke-width="2.2"/><circle cx="9" cy="15" r="1.4" fill="#4a7ad0"/><ellipse cx="10" cy="17" rx="6" ry="1" fill="#999"/></svg>
<svg class="ic" style="left:1305.0px;top:1021.0px" width="18" height="18" viewBox="0 0 18 18"><g transform="translate(4 0) scale(0.45)"><path d="M10 2 L18 6 L10 10 L2 6Z" fill="#90c0f0" stroke="#333" stroke-width="0.8"/><path d="M2 6 L10 10 V18 L2 14Z" fill="#5a90e0" stroke="#333" stroke-width="0.8"/><path d="M18 6 L10 10 V18 L18 14Z" fill="#3a70c0" stroke="#333" stroke-width="0.8"/></g><g transform="translate(8 6) scale(0.55)"><path d="M10 2 L18 6 L10 10 L2 6Z" fill="#a0d0e0" stroke="#333" stroke-width="0.8"/><path d="M2 6 L10 10 V18 L2 14Z" fill="#70a0b0" stroke="#333" stroke-width="0.8"/><path d="M18 6 L10 10 V18 L18 14Z" fill="#507080" stroke="#333" stroke-width="0.8"/></g><path d="M1 14 h7 M5 11 l3 3 l-3 3" fill="none" stroke="#e02020" stroke-width="1.6"/></svg>
<div class="a" style="left:1336px;top:1021px;width:19px;height:19px;background:#fbe28a"></div>
<svg class="ic" style="left:1336.0px;top:1021.0px" width="18" height="18" viewBox="0 0 18 18"><path d="M2 5 L9 2 L16 5 L9 8Z" fill="#e040f0"/><path d="M2 5 L9 8 V17 L2 14Z" fill="#80a0a8" stroke="#2050c0" stroke-width="0.7"/><path d="M16 5 L9 8 V17 L16 14Z" fill="#a0b8c0" stroke="#2050c0" stroke-width="0.7"/></svg>
<svg class="ic" style="left:1367.0px;top:1022.0px" width="18" height="18" viewBox="0 0 18 18"><rect x="3" y="6" width="12" height="11" fill="none" stroke="#888" stroke-width="1.2"/></svg>
<svg class="ic" style="left:1398.0px;top:1022.0px" width="18" height="18" viewBox="0 0 18 18"><circle cx="9" cy="9" r="7" fill="none" stroke="#30a030" stroke-width="2"/><circle cx="9" cy="9" r="1.5" fill="#3040c0"/></svg>
<svg class="ic" style="left:1429.0px;top:1022.0px" width="18" height="18" viewBox="0 0 18 18"><rect x="2" y="6" width="6" height="11" fill="none" stroke="#888" stroke-width="1.2"/><rect x="10" y="6" width="6" height="11" fill="none" stroke="#888" stroke-width="1.2"/></svg>
<div class="a" style="left:1462px;top:1024px;font-size:12px;line-height:14px;white-space:nowrap">LS: 1.00 PS: 1.00</div>
<div class="a" style="left:1589px;top:1024px;font-size:12px;line-height:14px;white-space:nowrap">单位: 毫米</div>
<div class="a" style="left:1663px;top:1024px;font-size:13px;line-height:15px;white-space:nowrap"><span style="color:#e8141e">X =-0054.154</span> Y = 0039.180 Z = 0000.000</div>
<div class="a" style="left:1381px;top:1009px;width:185px;height:23px;background:#fff;border:1px solid #c8c8c8"></div>
<svg class="ic" style="left:1357px;top:1005px" width="32" height="30" viewBox="0 0 32 30"><path d="M3 9 L24 2 L30 20 L9 28Z" fill="#ef5a24"/><path d="M21 9 Q16 6 12 9 Q9 12 14 14 Q20 16 17 20 Q13 23 9 20" fill="none" stroke="#fff" stroke-width="3.4" stroke-linecap="round"/></svg>
<div class="a" style="left:1392px;top:1009px;font-size:19px;line-height:22px;color:#2a7ad8">A</div>
<svg class="ic" style="left:1413px;top:1012px" width="16" height="16" viewBox="0 0 16 16"><circle cx="4" cy="7" r="1.8" fill="#2a7ad8"/><path d="M10 7 q1.5 3 -1 6" fill="none" stroke="#2a7ad8" stroke-width="1.8"/></svg>
<svg class="ic" style="left:1434px;top:1012px" width="17" height="17" viewBox="0 0 17 17"><circle cx="8.5" cy="8.5" r="7" fill="none" stroke="#2a7ad8" stroke-width="1.6"/><circle cx="6" cy="7" r="1" fill="#2a7ad8"/><circle cx="11" cy="7" r="1" fill="#2a7ad8"/><path d="M5 10 q3.5 3 7 0" fill="none" stroke="#2a7ad8" stroke-width="1.4"/></svg>
<svg class="ic" style="left:1458px;top:1011px" width="14" height="19" viewBox="0 0 14 19"><rect x="4" y="1" width="6" height="11" rx="3" fill="#2a7ad8"/><path d="M2 9 q5 7 10 0 M7 13 v4 M4 17h6" fill="none" stroke="#2a7ad8" stroke-width="1.6"/></svg>
<svg class="ic" style="left:1479px;top:1014px" width="17" height="13" viewBox="0 0 17 13"><rect x="1" y="1" width="15" height="11" rx="1" fill="none" stroke="#2a7ad8" stroke-width="1.6"/><path d="M3.5 4h2M7.5 4h2M11.5 4h2M3.5 7h2M7.5 7h2M11.5 7h2M5 10h7" stroke="#2a7ad8" stroke-width="1.4"/></svg>
<svg class="ic" style="left:1502px;top:1012px" width="16" height="18" viewBox="0 0 16 18"><circle cx="7" cy="5" r="3.4" fill="#b8c4d0"/><path d="M1 16 q1 -7 6 -7 q5 0 6 7z" fill="#b8c4d0"/><circle cx="12" cy="14" r="3" fill="#fff" stroke="#b8c4d0"/></svg>
<svg class="ic" style="left:1523px;top:1012px" width="17" height="17" viewBox="0 0 17 17"><path d="M5 1 L1 4 L3 8 L4 7 V16 H13 V7 L14 8 L16 4 L12 1 Q8.5 4 5 1Z" fill="#2a7ad8"/></svg>
<svg class="ic" style="left:1545px;top:1012px" width="16" height="16" viewBox="0 0 16 16"><rect x="1" y="1" width="6" height="6" fill="#2a7ad8"/><rect x="9" y="1" width="6" height="6" fill="none" stroke="#2a7ad8" stroke-width="1.4"/><rect x="1" y="9" width="6" height="6" fill="#2a7ad8"/><rect x="9" y="9" width="6" height="6" fill="#2a7ad8"/></svg>
<div id="taskbar" class="a"></div>
<div class="a" style="left:48px;top:1040px;width:344px;height:8px;background:#f0f0f0"></div>
<div class="a" style="left:638px;top:1040px;width:45px;height:8px;background:#3c3c3c"></div>
<div class="a" style="left:1815px;top:1044px;font-size:12px;line-height:14px;color:#fff;white-space:nowrap">19:41</div>
<div class="a" style="left:1915px;top:1040px;width:1px;height:8px;background:#606060"></div>
</body></html>
